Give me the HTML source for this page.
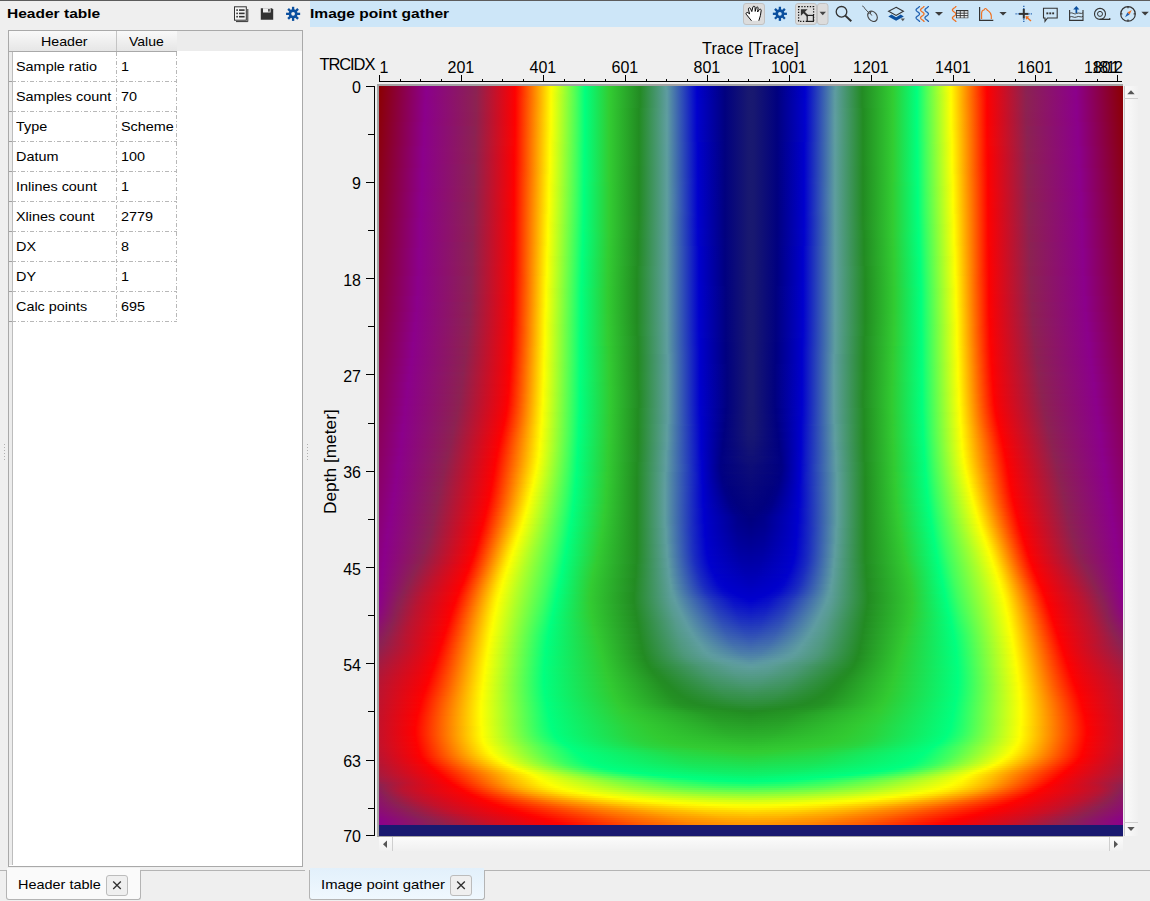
<!DOCTYPE html>
<html><head><meta charset="utf-8"><style>
html,body{margin:0;padding:0;width:1150px;height:901px;overflow:hidden;background:#efefef;font-family:"Liberation Sans", sans-serif}
.t{position:absolute;white-space:nowrap;line-height:1.15;color:#000}
.c{text-align:center}.r{text-align:right}
.half{position:absolute;top:0;width:372px;height:739px}
.half>div{position:absolute;left:0;width:372px}
.r0{top:0px;height:2px;background:linear-gradient(90deg,#8b0002 0px,#8b008b 47px,#8b2252 97px,#fe0001 136px,#ff1100 139px,#fffc00 172px,#edff09 175px,#43ff5d 198px,#00ff7f 206px,#32cd32 230px,#238b24 261px,#5e9e9e 287px,#548ba5 291px,#0000cd 318px,#01017f 346px,#181870 369px,#191970 372px)}
.r1{top:2px;height:2px;background:linear-gradient(90deg,#8b0002 0px,#8b008b 47px,#8b2252 97px,#fe0001 136px,#ff1100 139px,#fffc00 172px,#e5ff0d 176px,#43ff5d 198px,#00ff7f 206px,#32cd32 230px,#238b24 261px,#5e9e9e 287px,#548ba5 291px,#0000cd 318px,#01017f 346px,#181870 369px,#191970 372px)}
.r2{top:4px;height:2px;background:linear-gradient(90deg,#8b0002 0px,#8b008b 47px,#8b2252 97px,#fe0001 136px,#ff1800 140px,#fffc00 172px,#deff11 177px,#43ff5d 198px,#00ff7f 206px,#32cd32 230px,#238b24 261px,#5e9ca1 288px,#0000cd 318px,#01017f 346px,#181870 369px,#191970 372px)}
.r3{top:6px;height:2px;background:linear-gradient(90deg,#8b0003 0px,#8b008b 47px,#8b2252 97px,#fe0001 136px,#ff1f00 141px,#fffc00 172px,#b3ff26 183px,#33ff66 200px,#00ff7f 206px,#32cd32 230px,#238b24 261px,#5e9ca1 288px,#0000cd 318px,#01017f 346px,#181870 369px,#191970 372px)}
.r4{top:8px;height:2px;background:linear-gradient(90deg,#8b0003 0px,#8b008b 47px,#8c2252 97px,#fe0001 136px,#ff2d00 143px,#fffd00 172px,#5bff52 195px,#00ff7f 206px,#32cd32 230px,#238b24 261px,#5e9ca1 288px,#0000cd 318px,#01017f 346px,#181870 369px,#191970 372px)}
.r5{top:10px;height:2px;background:linear-gradient(90deg,#8b0004 0px,#8b008a 47px,#8c2251 97px,#fe0001 136px,#ff5000 148px,#fffd00 172px,#53ff56 196px,#00ff7f 206px,#32cd32 230px,#238b24 261px,#5e9ca1 288px,#0000cd 318px,#01017f 346px,#181870 369px,#191970 372px)}
.r6{top:12px;height:2px;background:linear-gradient(90deg,#8b0004 0px,#8b008a 47px,#8c2251 97px,#fe0001 136px,#ff8200 155px,#fffd00 172px,#53ff56 196px,#00ff7f 206px,#32cd32 230px,#238b24 261px,#5e9ca0 288px,#0001cd 318px,#01017f 346px,#181870 369px,#191970 372px)}
.r7{top:14px;height:2px;background:linear-gradient(90deg,#8b0005 0px,#8b008a 46px,#8c2251 97px,#fe0001 136px,#ff9100 157px,#fffd00 172px,#53ff56 196px,#00ff7f 206px,#32cd32 230px,#238b24 261px,#5e9da0 288px,#0001cd 318px,#01017f 346px,#181870 369px,#191970 372px)}
.r8{top:16px;height:2px;background:linear-gradient(90deg,#8b0006 0px,#8b008a 46px,#8c2251 97px,#fe0001 136px,#ff9f00 159px,#fffe00 172px,#4bff5a 197px,#00ff7f 206px,#32cd32 230px,#238b24 261px,#5e9da0 288px,#0001cd 318px,#01017f 346px,#181870 369px,#191970 372px)}
.r9{top:18px;height:2px;background:linear-gradient(90deg,#8b0006 0px,#8b008b 46px,#8c2251 97px,#fe0000 136px,#ffa700 160px,#fffe00 172px,#4bff5a 197px,#00ff7f 206px,#32cd32 230px,#238b24 261px,#5e9da0 288px,#0101cd 318px,#01017f 346px,#181870 369px,#191970 372px)}
.r10{top:20px;height:2px;background:linear-gradient(90deg,#8b0007 0px,#8b008b 46px,#8c2251 97px,#fe0000 136px,#ffb500 162px,#fffe00 172px,#4aff5a 197px,#00ff7f 206px,#32cd32 230px,#238b24 261px,#5e9da0 288px,#0101cd 318px,#01017f 346px,#181870 369px,#191970 372px)}
.r11{top:22px;height:2px;background:linear-gradient(90deg,#8b0007 0px,#8b008b 46px,#8c2251 97px,#fe0000 136px,#ffbd00 163px,#fffe00 172px,#4aff5a 197px,#00ff7f 206px,#32cd32 230px,#228c22 260px,#47976e 277px,#5e9da0 288px,#0101cd 318px,#01017f 346px,#181870 369px,#191970 372px)}
.r12{top:24px;height:2px;background:linear-gradient(90deg,#8b0008 0px,#8b008b 46px,#8d2251 97px,#ff0000 136px,#ffc400 164px,#ffff00 172px,#42ff5e 198px,#00ff7f 206px,#32cd32 230px,#228c22 260px,#47976e 277px,#5f9da0 288px,#0101cd 318px,#01017f 346px,#181870 369px,#191970 372px)}
.r13{top:26px;height:2px;background:linear-gradient(90deg,#8b0008 0px,#8b008b 46px,#8d2151 97px,#ff0000 136px,#ffcc00 165px,#ffff00 172px,#42ff5e 198px,#00ff7f 206px,#32cd32 230px,#228c22 260px,#499773 278px,#5f9da0 288px,#0101cd 318px,#01017f 346px,#181870 369px,#191970 372px)}
.r14{top:28px;height:2px;background:linear-gradient(90deg,#8b0009 0px,#8b008b 46px,#8d2151 97px,#ff0000 136px,#ffdb00 167px,#ffff00 172px,#42ff5e 198px,#00ff7f 206px,#32cd32 230px,#228c22 260px,#4b9878 279px,#5f9ea0 288px,#0101cd 318px,#01017f 346px,#181870 369px,#191970 372px)}
.r15{top:30px;height:2px;background:linear-gradient(90deg,#8b0009 0px,#8b008b 46px,#8d2151 97px,#ff0000 136px,#ffe200 168px,#feff00 172px,#42ff5e 198px,#00ff7f 206px,#32cd32 230px,#228c22 260px,#509981 281px,#5f9ea0 288px,#0101cd 318px,#01017f 346px,#181870 369px,#191970 372px)}
.r16{top:32px;height:2px;background:linear-gradient(90deg,#8b000a 0px,#8b008a 46px,#8d2150 97px,#ff0000 136px,#ffea00 169px,#feff00 172px,#42ff5e 198px,#00ff7f 206px,#32cd32 230px,#228c22 260px,#549b8a 283px,#5f9ea0 288px,#0101cd 318px,#01017f 346px,#181870 369px,#191970 372px)}
.r17{top:34px;height:2px;background:linear-gradient(90deg,#8b000a 0px,#8b008a 46px,#8d2150 97px,#ff0000 136px,#feff01 172px,#42ff5e 198px,#00ff7f 206px,#32cd32 230px,#228c22 260px,#5f9ea0 288px,#0102cd 318px,#01017f 346px,#181870 369px,#191970 372px)}
.r18{top:36px;height:2px;background:linear-gradient(90deg,#8b000b 0px,#8b008a 45px,#8d2150 97px,#ff0000 136px,#fdff01 172px,#41ff5e 198px,#00ff7f 206px,#32cd32 230px,#228c22 260px,#5f9ea0 288px,#0102cd 318px,#01017f 346px,#181870 369px,#191970 372px)}
.r19{top:38px;height:2px;background:linear-gradient(90deg,#8b000b 0px,#8b008a 45px,#8e2150 97px,#ff0000 136px,#fdff01 172px,#41ff5f 198px,#00ff7f 206px,#32cd32 230px,#228c22 260px,#5f9ea0 288px,#0102cc 318px,#01017f 346px,#181870 369px,#191970 372px)}
.r20{top:40px;height:2px;background:linear-gradient(90deg,#8b000c 0px,#8b008b 45px,#8b2252 96px,#ff0100 136px,#fdff01 172px,#41ff5f 198px,#00ff7f 206px,#32cd32 230px,#228c22 260px,#5f9ea0 288px,#0102cc 318px,#01017f 346px,#181870 369px,#191970 372px)}
.r21{top:42px;height:2px;background:linear-gradient(90deg,#8b000c 0px,#8b008b 45px,#8b2252 96px,#ff0100 136px,#fdff01 172px,#41ff5f 198px,#00ff7e 206px,#32cd32 230px,#228c22 260px,#5f9ea0 288px,#0102cc 318px,#01017f 346px,#181870 369px,#191970 372px)}
.r22{top:44px;height:2px;background:linear-gradient(90deg,#8b000d 0px,#8b008b 45px,#8b2252 96px,#ff0100 136px,#fffa00 171px,#f5ff05 173px,#41ff5f 198px,#00ff7e 206px,#32cd32 230px,#228c22 260px,#5f9ea0 288px,#0102cc 318px,#01017f 346px,#181870 369px,#191970 372px)}
.r23{top:46px;height:2px;background:linear-gradient(90deg,#8b000d 0px,#8b008b 45px,#8b2252 96px,#ff0100 136px,#fffb00 171px,#f5ff05 173px,#41ff5f 198px,#00ff7e 206px,#32cd32 230px,#228c22 260px,#5f9e9f 288px,#0102cc 318px,#01017f 346px,#181870 369px,#191970 372px)}
.r24{top:48px;height:2px;background:linear-gradient(90deg,#8b000e 0px,#8b008b 45px,#8c2252 96px,#ff0100 136px,#fffb00 171px,#f4ff05 173px,#40ff5f 198px,#00ff7e 206px,#32cd32 230px,#228c22 260px,#5f9e9f 288px,#0102cc 318px,#01017f 346px,#181870 369px,#191970 372px)}
.r25{top:50px;height:2px;background:linear-gradient(90deg,#8b000e 0px,#8b008b 45px,#8c2251 96px,#ff0100 136px,#fffb00 171px,#edff09 174px,#40ff5f 198px,#00ff7e 206px,#32cd32 230px,#228c22 260px,#5f9e9f 288px,#0102cc 318px,#01017f 346px,#181870 369px,#191970 372px)}
.r26{top:52px;height:2px;background:linear-gradient(90deg,#8b000f 0px,#8b008b 45px,#8c2251 96px,#ff0200 136px,#fffc00 171px,#e5ff0d 175px,#40ff5f 198px,#00ff7e 206px,#32cd32 230px,#228c22 260px,#5f9e9f 288px,#0102cc 318px,#01017f 346px,#181870 369px,#191970 372px)}
.r27{top:54px;height:2px;background:linear-gradient(90deg,#8b000f 0px,#8b008a 45px,#8c2251 96px,#ff0200 136px,#fffc00 171px,#d7ff14 177px,#40ff5f 198px,#01fe7e 206px,#32cd32 230px,#228c22 260px,#5f9e9f 288px,#0203cc 318px,#01017f 346px,#181870 369px,#191970 372px)}
.r28{top:56px;height:2px;background:linear-gradient(90deg,#8b000f 0px,#8b008a 45px,#8c2251 96px,#ff0200 136px,#fffc00 171px,#83ff3e 189px,#17ff74 203px,#01fe7e 206px,#32cd32 230px,#228c22 260px,#5f9e9f 288px,#0000cc 319px,#01017f 346px,#181870 369px,#191970 372px)}
.r29{top:58px;height:2px;background:linear-gradient(90deg,#8b0010 0px,#8b008a 45px,#8c2251 96px,#ff0200 136px,#fffd00 171px,#4fff58 196px,#06ff7c 205px,#01fe7e 206px,#32cd32 230px,#228c22 260px,#5e9e9f 288px,#0000cc 319px,#01017f 346px,#181870 369px,#191970 372px)}
.r30{top:60px;height:2px;background:linear-gradient(90deg,#8b0010 0px,#8b008a 44px,#8c2251 96px,#fd0101 135px,#ff0900 137px,#fffd00 171px,#4fff58 196px,#06ff7c 205px,#01fe7e 206px,#32cd32 230px,#228c22 260px,#5e9e9f 288px,#0000cc 319px,#01017f 346px,#181870 369px,#191970 372px)}
.r31{top:62px;height:2px;background:linear-gradient(90deg,#8b0011 0px,#8b008b 44px,#8d2251 96px,#fd0101 135px,#ff0900 137px,#fffd00 171px,#47ff5c 197px,#05ff7c 205px,#01fe7e 206px,#32cd32 230px,#228c22 260px,#5e9e9f 288px,#0000cc 319px,#01017f 346px,#181870 369px,#191970 372px)}
.r32{top:64px;height:2px;background:linear-gradient(90deg,#8b0011 0px,#8b008b 44px,#8d2251 96px,#fd0101 135px,#ff0a00 137px,#fffe00 171px,#46ff5c 197px,#05ff7c 205px,#01fe7e 206px,#32cd32 230px,#228c22 260px,#5e9e9f 288px,#0000cc 319px,#01017f 346px,#181870 369px,#191970 372px)}
.r33{top:66px;height:2px;background:linear-gradient(90deg,#8b0012 0px,#8b008b 44px,#8d2151 96px,#fd0101 135px,#ff0a00 137px,#fffe00 171px,#46ff5c 197px,#05ff7c 205px,#01fe7e 206px,#32cd32 230px,#228c22 260px,#5e9e9f 288px,#0000cc 319px,#01017f 346px,#181870 369px,#191970 372px)}
.r34{top:68px;height:2px;background:linear-gradient(90deg,#8b0012 0px,#8b008b 44px,#8d2151 96px,#fd0001 135px,#ff0a00 137px,#fffe00 171px,#3eff60 198px,#05ff7d 205px,#01fe7e 206px,#32cd32 230px,#228c22 260px,#5e9e9f 288px,#0000cc 319px,#01017f 346px,#181870 369px,#191970 372px)}
.r35{top:70px;height:2px;background:linear-gradient(90deg,#8b0013 0px,#8b008b 44px,#8d2151 96px,#fd0001 135px,#ff0a00 137px,#ffff00 171px,#3eff60 198px,#05ff7d 205px,#01fe7e 206px,#32cd32 230px,#228c22 260px,#5e9e9e 288px,#0000cc 319px,#01017f 346px,#181870 369px,#191970 372px)}
.r36{top:72px;height:2px;background:linear-gradient(90deg,#8b0013 0px,#8b008b 44px,#8d2150 96px,#fd0001 135px,#ff0a00 137px,#ffff00 171px,#3eff60 198px,#04ff7d 205px,#01fe7e 206px,#32cd32 230px,#228c22 260px,#5e9e9e 288px,#0000cc 319px,#01017f 346px,#181870 369px,#191970 372px)}
.r37{top:74px;height:2px;background:linear-gradient(90deg,#8b0014 0px,#8b008b 44px,#8d2150 96px,#fe0001 135px,#ff1100 138px,#ffff00 171px,#3eff60 198px,#04ff7d 205px,#01fe7e 206px,#32cd32 230px,#228c22 260px,#5e9e9e 288px,#0000cc 319px,#01017f 346px,#181870 369px,#191970 372px)}
.r38{top:76px;height:2px;background:linear-gradient(90deg,#8b0014 0px,#8b008b 44px,#8e2150 96px,#fe0001 135px,#ff1100 138px,#feff00 171px,#3dff60 198px,#04ff7d 205px,#03fc7b 207px,#32cd32 230px,#228c22 260px,#5e9e9e 288px,#0000cc 319px,#01017f 346px,#181870 369px,#191970 372px)}
.r39{top:78px;height:2px;background:linear-gradient(90deg,#8b0015 0px,#8b008a 44px,#8b2252 95px,#f80205 133px,#fe0001 135px,#ff1800 139px,#feff01 171px,#3dff61 198px,#04ff7d 205px,#03fc7b 207px,#32cd32 230px,#228c22 260px,#5e9e9e 288px,#0000cc 319px,#01017f 346px,#181870 369px,#191970 372px)}
.r40{top:80px;height:2px;background:linear-gradient(90deg,#8b0015 0px,#8b008a 44px,#8b2252 95px,#f80205 133px,#fe0001 135px,#ff2000 140px,#feff01 171px,#3dff61 198px,#04ff7d 205px,#03fc7b 207px,#32cd32 230px,#228b22 260px,#5e9e9e 288px,#0000cc 319px,#01017f 346px,#181870 369px,#191970 372px)}
.r41{top:82px;height:2px;background:linear-gradient(90deg,#8b0016 0px,#8b008a 43px,#8b2252 95px,#f80205 133px,#fe0001 135px,#ff2700 141px,#fdff01 171px,#3dff61 198px,#03ff7d 205px,#03fc7b 207px,#32cd32 230px,#228b22 260px,#5e9e9e 288px,#0000cc 319px,#01017f 346px,#181870 369px,#191970 372px)}
.r42{top:84px;height:2px;background:linear-gradient(90deg,#8b0016 0px,#8b008a 43px,#8c2252 95px,#f80205 133px,#fe0001 135px,#ff3c00 144px,#fdff01 171px,#3cff61 198px,#03ff7d 205px,#03fc7b 207px,#32cd32 230px,#228b22 260px,#5e9e9e 288px,#0000cc 319px,#01017f 346px,#181870 369px,#191970 372px)}
.r43{top:86px;height:2px;background:linear-gradient(90deg,#8b0017 0px,#8b008b 43px,#8c2252 95px,#f80205 133px,#fe0001 135px,#ff5900 148px,#fdff01 171px,#3cff61 198px,#03ff7e 205px,#05fa78 208px,#32cd32 230px,#228b22 260px,#5e9e9e 288px,#0000cc 319px,#01017f 346px,#181870 369px,#191970 372px)}
.r44{top:88px;height:2px;background:linear-gradient(90deg,#8b0017 0px,#8b008b 43px,#8c2251 95px,#f80205 133px,#fe0001 135px,#ff6700 150px,#fffa00 170px,#f5ff05 172px,#3cff61 198px,#03ff7e 205px,#05fa78 208px,#32cd32 230px,#228b22 260px,#5e9e9e 288px,#0000cc 319px,#01017f 346px,#181870 369px,#191970 372px)}
.r45{top:90px;height:2px;background:linear-gradient(90deg,#8b0018 0px,#8b008b 43px,#8c2251 95px,#f80205 133px,#fe0001 135px,#ff6f00 151px,#fffb00 170px,#f5ff05 172px,#3cff61 198px,#03ff7e 205px,#07f875 209px,#32cd32 230px,#228b22 260px,#5e9e9e 288px,#0000cc 319px,#01017f 346px,#181870 369px,#191970 372px)}
.r46{top:92px;height:2px;background:linear-gradient(90deg,#8b0018 0px,#8b008b 43px,#8c2251 95px,#f80205 133px,#fe0001 135px,#ff7700 152px,#fffb00 170px,#f4ff05 172px,#3bff61 198px,#02ff7e 205px,#0bf46f 211px,#32cd32 230px,#228b22 260px,#5e9e9e 288px,#0d15c7 315px,#0000cc 319px,#01017f 346px,#181870 369px,#191970 372px)}
.r47{top:94px;height:2px;background:linear-gradient(90deg,#8b0018 0px,#8b008b 43px,#8c2251 95px,#f80205 133px,#fe0000 135px,#ff7e00 153px,#fffc00 170px,#edff09 173px,#3bff62 198px,#02ff7e 205px,#13ec62 215px,#32cd32 230px,#228b22 260px,#5e9e9e 288px,#192ac1 311px,#0000cd 319px,#01017f 346px,#181870 369px,#191970 372px)}
.r48{top:96px;height:2px;background:linear-gradient(90deg,#8b0019 0px,#8b008b 43px,#8c2251 95px,#f80205 133px,#fe0000 135px,#ff8600 154px,#fffc00 170px,#deff10 175px,#3bff62 198px,#02ff7e 205px,#1ee151 220px,#31cb31 231px,#228b22 260px,#5e9e9e 288px,#263fbb 307px,#0000cd 319px,#01017f 346px,#181870 369px,#191970 372px)}
.r49{top:98px;height:2px;background:linear-gradient(90deg,#8b0019 0px,#8b008b 43px,#8c2251 95px,#f80205 133px,#fe0000 135px,#ff8d00 155px,#fffc00 170px,#bbff22 180px,#33ff66 199px,#02ff7e 205px,#26d944 224px,#31cb31 231px,#228b22 260px,#5e9e9e 288px,#385db2 301px,#0000cd 319px,#01017f 346px,#181870 369px,#191970 372px)}
.r50{top:100px;height:2px;background:linear-gradient(90deg,#8b001a 0px,#8b008b 43px,#8d2251 95px,#f80205 133px,#ff0000 135px,#ff8e00 155px,#fffd00 170px,#4aff5a 196px,#01ff7e 205px,#31cb31 231px,#228b22 260px,#5e9e9e 288px,#3e67b0 299px,#0000cd 319px,#01017f 346px,#181870 369px,#191970 372px)}
.r51{top:102px;height:2px;background:linear-gradient(90deg,#8b001a 0px,#8b008a 43px,#8d2151 95px,#f90205 133px,#ff0000 135px,#ff9500 156px,#fffd00 170px,#42ff5e 197px,#01ff7e 205px,#31cb31 231px,#228b22 260px,#5e9e9e 288px,#4472ad 297px,#0000cd 319px,#01017f 346px,#181870 369px,#191970 372px)}
.r52{top:104px;height:2px;background:linear-gradient(90deg,#8b001b 0px,#8b008a 43px,#8d2151 95px,#f90205 133px,#ff0000 135px,#ff9d00 157px,#fffd00 170px,#42ff5e 197px,#01ff7f 205px,#32cd32 230px,#228b22 260px,#5e9e9e 288px,#4777ab 296px,#0000cd 319px,#01017f 346px,#181870 369px,#191970 372px)}
.r53{top:106px;height:2px;background:linear-gradient(90deg,#8b001b 0px,#8b008a 42px,#8d2151 95px,#f90204 133px,#ff0000 135px,#ffa500 158px,#fffe00 170px,#41ff5e 197px,#01ff7f 205px,#32cd32 230px,#228b22 260px,#5e9e9e 288px,#4777ab 296px,#0000cd 319px,#01017f 346px,#181870 369px,#191970 372px)}
.r54{top:108px;height:2px;background:linear-gradient(90deg,#8b001c 0px,#8b008a 42px,#8d2150 95px,#f90204 133px,#ff0000 135px,#ffad00 159px,#fffe00 170px,#39ff62 198px,#00ff7f 205px,#32cd32 230px,#228b22 260px,#5e9e9e 288px,#4b7caa 295px,#0000cd 319px,#01017f 346px,#181870 369px,#191970 372px)}
.r55{top:110px;height:2px;background:linear-gradient(90deg,#8b001c 0px,#8b008b 42px,#8d2150 95px,#f90204 133px,#ff0000 135px,#ffad00 159px,#fffe00 170px,#39ff63 198px,#00ff7f 205px,#32cd32 230px,#228b22 260px,#5e9e9e 288px,#4b7caa 295px,#0000cd 319px,#01017f 346px,#181870 369px,#191970 372px)}
.r56{top:112px;height:2px;background:linear-gradient(90deg,#8b001d 0px,#8b008b 42px,#8d2150 95px,#f90204 133px,#ff0000 135px,#ffb500 160px,#ffff00 170px,#39ff63 198px,#00ff7f 205px,#32cd32 230px,#228b22 260px,#5e9e9e 288px,#4b7caa 295px,#0000cd 319px,#01017f 346px,#181870 369px,#191970 372px)}
.r57{top:114px;height:2px;background:linear-gradient(90deg,#8b001d 0px,#8b008b 42px,#8e2150 95px,#f90204 133px,#ff0000 135px,#ffbd00 161px,#ffff00 170px,#39ff63 198px,#00ff7f 205px,#32cd32 230px,#228b22 260px,#5e9e9e 288px,#4b7caa 295px,#0000cd 319px,#01017f 346px,#181870 369px,#191970 372px)}
.r58{top:116px;height:2px;background:linear-gradient(90deg,#8b001d 0px,#8b008b 42px,#8b2252 94px,#f30409 131px,#ff0000 135px,#ffb600 160px,#feff00 170px,#38ff63 198px,#00ff7f 205px,#32cd32 230px,#228b22 260px,#5e9e9e 288px,#4877ab 296px,#0000cd 319px,#01017f 346px,#181870 369px,#191970 372px)}
.r59{top:118px;height:2px;background:linear-gradient(90deg,#8b001e 0px,#8b008b 42px,#8b2252 94px,#f30408 131px,#ff0000 135px,#ffb600 160px,#feff00 170px,#38ff63 198px,#00ff7f 205px,#32cd32 230px,#228b22 260px,#5e9e9e 288px,#4877ab 296px,#0000cd 319px,#01017f 346px,#181870 369px,#191970 372px)}
.r60{top:120px;height:2px;background:linear-gradient(90deg,#8b001e 0px,#8b008b 42px,#8b2252 94px,#f30408 131px,#ff0100 135px,#ffb600 160px,#feff01 170px,#38ff63 198px,#00ff7f 205px,#32cd32 230px,#228b22 260px,#5e9e9e 288px,#4572ad 297px,#0000cd 319px,#01017f 346px,#181870 369px,#191970 372px)}
.r61{top:122px;height:2px;background:linear-gradient(90deg,#8b001f 0px,#8b008b 42px,#8c2252 94px,#f30308 131px,#ff0100 135px,#ffb700 160px,#fdff01 170px,#37ff63 198px,#00ff7f 205px,#32cd32 230px,#228b22 260px,#5e9e9e 288px,#3f68af 299px,#0000cd 319px,#01017f 346px,#181870 369px,#191970 372px)}
.r62{top:124px;height:2px;background:linear-gradient(90deg,#8b001f 0px,#8b008b 42px,#8c2251 94px,#f30308 131px,#ff0100 135px,#ffaf00 159px,#fdff01 170px,#37ff64 198px,#00ff7e 205px,#32cd32 230px,#228b23 260px,#5e9e9e 288px,#2f4fb7 304px,#0001cd 319px,#01017f 346px,#181870 369px,#191970 372px)}
.r63{top:126px;height:2px;background:linear-gradient(90deg,#8b0020 0px,#8b008a 42px,#8c2251 94px,#f30308 131px,#ff0100 135px,#ffb000 159px,#fdff01 170px,#37ff64 198px,#00ff7e 205px,#32cd32 230px,#228b23 260px,#5e9e9e 288px,#1d31bf 310px,#0001cd 319px,#01017f 346px,#181870 369px,#191970 372px)}
.r64{top:128px;height:2px;background:linear-gradient(90deg,#8b0020 0px,#8b008a 42px,#8c2251 94px,#f30308 131px,#ff0100 135px,#ffb000 159px,#fffb00 169px,#f5ff05 171px,#36ff64 198px,#01fe7e 205px,#32cd32 230px,#228b23 260px,#5e9e9e 288px,#111cc5 314px,#0001cd 319px,#01017f 346px,#181870 369px,#191970 372px)}
.r65{top:130px;height:2px;background:linear-gradient(90deg,#8b0020 0px,#8b008a 42px,#8c2251 94px,#f30308 131px,#ff0100 135px,#ffa900 158px,#fffb00 169px,#f4ff05 171px,#36ff64 198px,#05ff7c 204px,#01fe7e 205px,#32cd32 230px,#238b23 260px,#5e9e9e 288px,#070cca 317px,#0101cd 319px,#01017f 346px,#181870 369px,#191970 372px)}
.r66{top:132px;height:2px;background:linear-gradient(90deg,#8b0021 0px,#8b008a 41px,#8c2251 94px,#f30308 131px,#ff0100 135px,#ffa900 158px,#fffb00 169px,#edff09 172px,#35ff64 198px,#05ff7d 204px,#01fe7e 205px,#32cd32 230px,#238b23 260px,#5e9e9e 288px,#0101cd 319px,#01017f 346px,#181870 369px,#191970 372px)}
.r67{top:134px;height:2px;background:linear-gradient(90deg,#8b0021 0px,#8b008a 41px,#8c2251 94px,#f30308 131px,#ff0100 135px,#ffa900 158px,#fffc00 169px,#e5ff0d 173px,#35ff65 198px,#04ff7d 204px,#01fe7e 205px,#32cc32 230px,#238b23 260px,#5e9e9e 288px,#0101cd 319px,#01017f 346px,#181870 369px,#191970 372px)}
.r68{top:136px;height:2px;background:linear-gradient(90deg,#8b0022 0px,#8b008b 41px,#8c2251 94px,#f40308 131px,#ff0200 135px,#ffaa00 158px,#fffc00 169px,#bbff22 179px,#2dff69 199px,#04ff7d 204px,#03fc7b 206px,#32cc32 230px,#238b24 260px,#5e9e9e 288px,#0101cd 319px,#01017f 346px,#181870 369px,#191970 372px)}
.r69{top:138px;height:2px;background:linear-gradient(90deg,#8b0022 0px,#8b008b 41px,#8d2251 94px,#f40308 131px,#ff0200 135px,#ffaa00 158px,#fffd00 169px,#3bff61 197px,#03ff7d 204px,#03fc7b 206px,#32cc32 230px,#238b24 260px,#5e9e9e 288px,#0101cd 319px,#01017f 346px,#181870 369px,#191970 372px)}
.r70{top:140px;height:2px;background:linear-gradient(90deg,#8b0022 0px,#8b008b 41px,#8d2151 94px,#f40308 131px,#ff0200 135px,#ffa300 157px,#fffd00 169px,#3bff62 197px,#03ff7e 204px,#05fa78 207px,#32cc32 230px,#238b24 260px,#5e9e9e 288px,#0101cd 319px,#01017f 346px,#181870 369px,#191970 372px)}
.r71{top:142px;height:2px;background:linear-gradient(90deg,#8b0023 0px,#8b008b 41px,#8d2151 94px,#f40308 131px,#ff0200 135px,#ffa300 157px,#fffe00 169px,#3aff62 197px,#02ff7e 204px,#0cf36c 211px,#32cc32 230px,#238b24 260px,#5e9e9e 288px,#0102cd 319px,#01017f 346px,#181870 369px,#191970 372px)}
.r72{top:144px;height:2px;background:linear-gradient(90deg,#8b0023 0px,#8b008b 41px,#8d2151 94px,#f40308 131px,#ff0200 135px,#ffa400 157px,#fffe00 169px,#3aff62 197px,#02ff7e 204px,#27d842 224px,#32cc32 230px,#228c22 259px,#5e9e9e 288px,#0102cd 319px,#01017f 346px,#181870 369px,#191970 372px)}
.r73{top:146px;height:2px;background:linear-gradient(90deg,#8b0024 0px,#8b008b 41px,#8d2151 94px,#f40308 131px,#ff0200 135px,#ffa400 157px,#fffe00 169px,#32ff66 198px,#01ff7e 204px,#32cc32 230px,#228c22 259px,#5e9e9e 288px,#0102cd 319px,#01017f 346px,#181870 369px,#191970 372px)}
.r74{top:148px;height:2px;background:linear-gradient(90deg,#8b0024 0px,#8b008b 41px,#8d2150 94px,#f40308 131px,#ff0200 135px,#ff9d00 156px,#ffff00 169px,#31ff67 198px,#00ff7f 204px,#32cc32 230px,#228c22 259px,#5e9e9e 288px,#0102cc 319px,#01017f 346px,#181870 369px,#191970 372px)}
.r75{top:150px;height:2px;background:linear-gradient(90deg,#8b0024 0px,#8b008b 41px,#8d2150 94px,#f40308 131px,#ff0200 135px,#ff9d00 156px,#ffff00 169px,#31ff67 198px,#00ff7f 204px,#32cc32 230px,#228c22 259px,#5e9e9f 288px,#0102cc 319px,#01017f 346px,#181870 369px,#191970 372px)}
.r76{top:152px;height:2px;background:linear-gradient(90deg,#8b0025 0px,#8b008b 41px,#8d2150 94px,#f40308 131px,#ff0200 135px,#ff9d00 156px,#feff00 169px,#30ff67 198px,#00ff7f 204px,#32cb32 230px,#228b22 259px,#5e9e9f 288px,#0102cc 319px,#010180 346px,#181870 369px,#191970 372px)}
.r77{top:154px;height:2px;background:linear-gradient(90deg,#8b0025 0px,#8b008a 41px,#8e2150 94px,#f40308 131px,#ff0200 135px,#ff9e00 156px,#feff01 169px,#2fff67 198px,#00ff7f 204px,#32cb32 230px,#228b22 259px,#5e9e9f 288px,#0102cc 319px,#010180 346px,#181870 369px,#191970 372px)}
.r78{top:156px;height:2px;background:linear-gradient(90deg,#8b0025 0px,#8b008a 41px,#8b2252 93px,#f1040a 130px,#ff0300 135px,#ff9600 155px,#fdff01 169px,#2fff68 198px,#00ff7e 204px,#32cb32 230px,#228b22 259px,#5e9e9f 288px,#0102cc 319px,#010180 346px,#181870 369px,#191970 372px)}
.r79{top:158px;height:2px;background:linear-gradient(90deg,#8b0026 0px,#8b008a 41px,#8b2252 93px,#f1040a 130px,#ff0300 135px,#ff9700 155px,#fdff01 169px,#2eff68 198px,#01fe7e 204px,#32cb32 230px,#228b22 259px,#5e9e9f 288px,#0102cc 319px,#010180 346px,#181870 369px,#191970 372px)}
.r80{top:160px;height:2px;background:linear-gradient(90deg,#8b0026 0px,#8b008a 41px,#8b2252 93px,#f1040a 130px,#fd0101 134px,#ff0a00 136px,#ffae00 158px,#fffa00 168px,#f5ff05 170px,#2eff68 198px,#05ff7c 203px,#01fe7e 204px,#31cb31 230px,#228b22 259px,#5e9e9f 288px,#0000cc 320px,#010180 346px,#181870 369px,#191970 372px)}
.r81{top:162px;height:2px;background:linear-gradient(90deg,#8b0027 0px,#8b008a 40px,#8c2252 93px,#f1040a 130px,#fd0101 134px,#ff0a00 136px,#ffae00 158px,#fffb00 168px,#f5ff05 170px,#35ff65 197px,#05ff7d 203px,#01fe7e 204px,#31cb31 230px,#228b22 259px,#5e9e9f 288px,#0000cc 320px,#010180 346px,#181870 369px,#191970 372px)}
.r82{top:164px;height:2px;background:linear-gradient(90deg,#8b0027 0px,#8b008b 40px,#8c2251 93px,#f1040a 130px,#fd0001 134px,#ff0a00 136px,#ffaf00 158px,#fffb00 168px,#f4ff05 170px,#34ff65 197px,#04ff7d 203px,#03fc7b 205px,#32cd32 229px,#228b23 259px,#5f9e9f 288px,#0000cc 320px,#010180 346px,#181870 369px,#191970 372px)}
.r83{top:166px;height:2px;background:linear-gradient(90deg,#8b0027 0px,#8b008b 40px,#8c2251 93px,#f1040a 130px,#fd0001 134px,#ff0a00 136px,#ffa700 157px,#fffc00 168px,#ecff09 171px,#34ff65 197px,#03ff7d 203px,#03fc7b 205px,#32cd32 229px,#228b23 259px,#5f9e9f 288px,#0000cc 320px,#010180 346px,#181870 369px,#191970 372px)}
.r84{top:168px;height:2px;background:linear-gradient(90deg,#8b0028 0px,#8b008b 40px,#8c2251 93px,#f1040a 130px,#fd0001 134px,#ff0a00 136px,#ffa800 157px,#fffc00 168px,#deff11 173px,#33ff66 197px,#03ff7e 203px,#07f875 207px,#32cd32 229px,#228b23 259px,#5f9e9f 288px,#0000cc 320px,#010180 346px,#181870 369px,#191970 372px)}
.r85{top:170px;height:2px;background:linear-gradient(90deg,#8b0028 0px,#8b008b 40px,#8c2251 93px,#f1040a 130px,#fd0001 134px,#ff0a00 136px,#ffa800 157px,#fffc00 168px,#3aff62 196px,#02ff7e 203px,#19e659 216px,#32cd32 229px,#238b23 259px,#5f9e9f 288px,#0000cc 320px,#010180 346px,#181870 369px,#191970 372px)}
.r86{top:172px;height:2px;background:linear-gradient(90deg,#8b0029 0px,#8b008b 40px,#8c2251 93px,#f1040a 130px,#fe0001 134px,#ff0a00 136px,#ffa900 157px,#fffd00 168px,#3aff62 196px,#01ff7e 203px,#32cc32 229px,#238b23 259px,#5f9e9f 288px,#0000cc 320px,#010180 346px,#181870 369px,#191970 372px)}
.r87{top:174px;height:2px;background:linear-gradient(90deg,#8b0029 0px,#8b008b 40px,#8c2251 93px,#f1040a 130px,#fe0001 134px,#ff1100 137px,#ffd000 162px,#fffd00 168px,#31ff66 197px,#01ff7f 203px,#32cc32 229px,#238b24 259px,#5f9e9f 288px,#0000cc 320px,#000080 346px,#181870 369px,#191970 372px)}
.r88{top:176px;height:2px;background:linear-gradient(90deg,#8b0029 0px,#8b008b 40px,#8d2251 93px,#f1040a 130px,#fe0001 134px,#ff1200 137px,#ffc800 161px,#fffe00 168px,#31ff67 197px,#00ff7f 203px,#32cc32 229px,#238b24 259px,#5f9e9f 288px,#0000cc 320px,#000080 346px,#181870 369px,#191970 372px)}
.r89{top:178px;height:2px;background:linear-gradient(90deg,#8b002a 0px,#8b008b 40px,#8d2251 93px,#f2040a 130px,#fe0001 134px,#ff1200 137px,#ffc900 161px,#fffe00 168px,#30ff67 197px,#00ff7f 203px,#32cc32 229px,#238b24 259px,#5f9e9f 288px,#0000cc 320px,#000080 346px,#181870 369px,#191970 372px)}
.r90{top:180px;height:2px;background:linear-gradient(90deg,#8b002a 0px,#8b008b 40px,#8d2151 93px,#f20409 130px,#fe0001 134px,#ff1200 137px,#ffc200 160px,#ffff00 168px,#30ff67 197px,#00ff7f 203px,#32cc32 229px,#228c22 258px,#5f9e9f 288px,#0000cc 320px,#000080 346px,#181870 369px,#191970 372px)}
.r91{top:182px;height:2px;background:linear-gradient(90deg,#8b002b 0px,#8b008a 40px,#8d2151 93px,#f20409 130px,#fe0001 134px,#ff1900 138px,#ffff00 168px,#2fff68 197px,#00ff7e 203px,#32cc32 229px,#228c22 258px,#5f9ea0 288px,#0000cc 320px,#000080 346px,#181870 369px,#191970 372px)}
.r92{top:184px;height:2px;background:linear-gradient(90deg,#8b002b 0px,#8b008a 40px,#8d2150 93px,#f20409 130px,#fe0001 134px,#ff2000 139px,#feff00 168px,#2fff68 197px,#00ff7e 203px,#32cc32 229px,#228c22 258px,#5f9ea0 288px,#0000cc 320px,#000080 346px,#181870 369px,#191970 372px)}
.r93{top:186px;height:2px;background:linear-gradient(90deg,#8b002b 0px,#8b008a 40px,#8d2150 93px,#f20409 130px,#fe0001 134px,#ff2800 140px,#feff01 168px,#2eff68 197px,#01fe7e 203px,#32cb32 229px,#228c22 258px,#5f9ea0 288px,#0000cc 320px,#000080 346px,#181870 369px,#191970 372px)}
.r94{top:188px;height:2px;background:linear-gradient(90deg,#8b002c 0px,#8b008a 40px,#8d2150 93px,#f20409 130px,#fe0001 134px,#ff2f00 141px,#fdff01 168px,#2eff68 197px,#05ff7c 202px,#01fe7e 203px,#32cb32 229px,#228c22 258px,#5f9ea0 288px,#0000cc 320px,#000080 346px,#181870 369px,#191970 372px)}
.r95{top:190px;height:2px;background:linear-gradient(90deg,#8b002c 0px,#8b008b 39px,#8b2252 92px,#ef050b 129px,#fe0001 134px,#ff3e00 143px,#fffa00 167px,#fdff01 168px,#2dff69 197px,#05ff7d 202px,#01fe7e 203px,#32cb32 229px,#228c22 258px,#5f9ea0 288px,#0000cc 320px,#000080 346px,#181870 369px,#191970 372px)}
.r96{top:192px;height:2px;background:linear-gradient(90deg,#8b002d 0px,#8b008b 39px,#8b2252 92px,#ef050b 129px,#fe0001 134px,#ff4600 144px,#fffa00 167px,#f5ff05 169px,#2dff69 197px,#04ff7d 202px,#03fc7b 204px,#32cb32 229px,#228b22 258px,#5f9ea0 288px,#0000cc 320px,#000080 346px,#181870 369px,#191970 372px)}
.r97{top:194px;height:2px;background:linear-gradient(90deg,#8b002d 0px,#8b008b 39px,#8c2252 92px,#ef050b 129px,#fe0001 134px,#ff4700 144px,#fffb00 167px,#f5ff05 169px,#2cff69 197px,#04ff7d 202px,#03fc7b 204px,#32cb32 229px,#228b22 258px,#5f9ea0 288px,#0000cc 320px,#000080 346px,#181870 369px,#191970 372px)}
.r98{top:196px;height:2px;background:linear-gradient(90deg,#8b002e 0px,#8b008b 39px,#8c2252 92px,#ef050b 129px,#fe0001 134px,#ff4e00 145px,#fffb00 167px,#f4ff05 169px,#2cff69 197px,#03ff7d 202px,#03fc7b 204px,#32cb32 229px,#228b22 258px,#5f9ea0 288px,#0000cd 320px,#000080 346px,#181870 369px,#191970 372px)}
.r99{top:198px;height:2px;background:linear-gradient(90deg,#8b002e 0px,#8b008b 39px,#8c2251 92px,#ef050b 129px,#fe0000 134px,#ff4f00 145px,#fffc00 167px,#ecff09 170px,#2bff6a 197px,#03ff7e 202px,#06f975 206px,#32cb32 229px,#228b22 258px,#5f9ea0 288px,#0000cd 320px,#000080 346px,#181870 369px,#191970 372px)}
.r100{top:200px;height:2px;background:linear-gradient(90deg,#8b002e 0px,#8b008b 39px,#8c2251 92px,#ef050b 129px,#fe0000 134px,#ff5700 146px,#fffc00 167px,#ddff11 172px,#2bff6a 197px,#02ff7e 202px,#10ef66 211px,#31cb31 229px,#228b22 258px,#5f9ea0 288px,#0000cd 320px,#01017f 347px,#181870 369px,#191970 372px)}
.r101{top:202px;height:2px;background:linear-gradient(90deg,#8b002f 0px,#8b008b 39px,#8c2251 92px,#ef050b 129px,#ff0000 134px,#ff5f00 147px,#fffc00 167px,#32ff66 196px,#02ff7e 202px,#28d741 223px,#31cb31 229px,#228b22 258px,#5f9ea0 288px,#0000cd 320px,#01017f 347px,#181870 369px,#191970 372px)}
.r102{top:204px;height:2px;background:linear-gradient(90deg,#8b002f 0px,#8b008a 39px,#8c2251 92px,#ef050b 129px,#ff0000 134px,#ff5f00 147px,#fffd00 167px,#32ff66 196px,#01ff7e 202px,#31cb31 229px,#228b22 258px,#5f9ea0 288px,#0000cd 320px,#01017f 347px,#181870 369px,#191970 372px)}
.r103{top:206px;height:2px;background:linear-gradient(90deg,#8b0030 0px,#8b008a 39px,#8d2251 92px,#f0050b 129px,#ff0000 134px,#ff6700 148px,#fffd00 167px,#31ff66 196px,#01ff7f 202px,#31cb31 229px,#228b22 258px,#5f9ea0 288px,#0000cd 320px,#01017f 347px,#181870 369px,#191970 372px)}
.r104{top:208px;height:2px;background:linear-gradient(90deg,#8b0030 0px,#8b008a 39px,#8d2151 92px,#f0040b 129px,#ff0000 134px,#ff6800 148px,#fffe00 167px,#31ff67 196px,#01ff7f 202px,#31cb31 229px,#228b22 258px,#5f9ea0 288px,#0000cd 320px,#01017f 347px,#181870 369px,#191970 372px)}
.r105{top:210px;height:2px;background:linear-gradient(90deg,#8b0031 0px,#8b008b 38px,#8d2151 92px,#f0040b 129px,#ff0000 134px,#ff7000 149px,#fffe00 167px,#29ff6b 197px,#00ff7f 202px,#31cb31 229px,#228b22 258px,#5f9ea0 288px,#0000cd 320px,#01017f 347px,#181870 369px,#191970 372px)}
.r106{top:212px;height:2px;background:linear-gradient(90deg,#8b0031 0px,#8b008b 38px,#8d2150 92px,#f0040b 129px,#ff0000 134px,#ff7000 149px,#ffff00 167px,#29ff6b 197px,#00ff7f 202px,#31cb31 229px,#228b22 258px,#5f9ea0 288px,#0000cd 320px,#01017f 347px,#181870 369px,#191970 372px)}
.r107{top:214px;height:2px;background:linear-gradient(90deg,#8b0032 0px,#8b008b 38px,#8e2150 92px,#f0040b 129px,#ff0000 134px,#ff7100 149px,#ffff00 167px,#28ff6b 197px,#00ff7f 202px,#31cb31 229px,#228b22 258px,#5f9ea0 288px,#0000cd 320px,#01017f 347px,#181870 369px,#191970 372px)}
.r108{top:216px;height:2px;background:linear-gradient(90deg,#8b0032 0px,#8b008b 38px,#8b2252 91px,#ed050d 128px,#ff0000 134px,#ff7100 149px,#feff00 167px,#28ff6b 197px,#00ff7f 202px,#31cb31 229px,#228b22 258px,#5f9ea0 288px,#0000cd 320px,#01017f 347px,#181870 369px,#191970 372px)}
.r109{top:218px;height:2px;background:linear-gradient(90deg,#8b0033 0px,#8b008b 38px,#8c2252 91px,#ed050d 128px,#ff0100 134px,#ff7100 149px,#feff01 167px,#28ff6b 197px,#00ff7f 202px,#31cb31 229px,#228b22 258px,#5f9ea0 288px,#0000cd 320px,#01017f 347px,#181870 369px,#191970 372px)}
.r110{top:220px;height:2px;background:linear-gradient(90deg,#8b0033 0px,#8b008b 38px,#8c2251 91px,#ed050c 128px,#ff0100 134px,#ff7200 149px,#feff01 167px,#28ff6b 197px,#00ff7f 202px,#31cb31 229px,#228b22 258px,#5f9ea0 288px,#0000cd 320px,#01017f 347px,#181870 369px,#191970 372px)}
.r111{top:222px;height:2px;background:linear-gradient(90deg,#8b0034 0px,#8b008a 38px,#8c2251 91px,#ee050c 128px,#ff0100 134px,#ff7200 149px,#fff900 166px,#fdff01 167px,#27ff6b 197px,#00ff7f 202px,#31cb31 229px,#228b22 258px,#5f9ea0 288px,#0000cd 320px,#01017f 347px,#181870 369px,#191970 372px)}
.r112{top:224px;height:2px;background:linear-gradient(90deg,#8b0034 0px,#8b008a 38px,#8d2251 91px,#ee050c 128px,#ff0200 134px,#ff7200 149px,#fffa00 166px,#fdff01 167px,#27ff6c 197px,#00ff7f 202px,#31cb31 229px,#228b22 258px,#5f9ea0 288px,#0001cd 320px,#01017f 347px,#181870 369px,#191970 372px)}
.r113{top:226px;height:2px;background:linear-gradient(90deg,#8b0035 0px,#8b008b 37px,#8d2151 91px,#ee050c 128px,#ff0200 134px,#ff7300 149px,#fffa00 166px,#f5ff05 168px,#27ff6c 197px,#00ff7f 202px,#31cb31 229px,#228b22 258px,#5f9ea0 288px,#0001cd 320px,#01017f 347px,#181870 369px,#191970 372px)}
.r114{top:228px;height:2px;background:linear-gradient(90deg,#8b0035 0px,#8b008b 37px,#8d2150 91px,#ee050c 128px,#ff0200 134px,#ff7300 149px,#fffb00 166px,#f4ff05 168px,#27ff6c 197px,#00ff7e 202px,#32cb32 229px,#228b22 258px,#5f9ea0 288px,#0001cd 320px,#01017f 347px,#181870 369px,#191970 372px)}
.r115{top:230px;height:2px;background:linear-gradient(90deg,#8b0036 0px,#8b008b 37px,#8e2150 91px,#ee050c 128px,#ff0300 134px,#ff7400 149px,#fffb00 166px,#f4ff05 168px,#26ff6c 197px,#00ff7e 202px,#32cb32 229px,#228b22 258px,#5f9ea0 288px,#0001cd 320px,#01017f 347px,#181870 369px,#191970 372px)}
.r116{top:232px;height:2px;background:linear-gradient(90deg,#8b0037 0px,#8b008b 37px,#8c2252 90px,#ee050c 128px,#fd0001 133px,#ff0a00 135px,#ff8400 151px,#fffb00 166px,#ecff09 169px,#26ff6c 197px,#00ff7e 202px,#32cb32 229px,#228b22 258px,#5f9ea0 288px,#0101cd 320px,#01017f 347px,#181870 369px,#191970 372px)}
.r117{top:234px;height:2px;background:linear-gradient(90deg,#8b0037 0px,#8b008a 37px,#8c2251 90px,#ef050c 128px,#fd0001 133px,#ff0a00 135px,#ff8500 151px,#fffc00 166px,#e5ff0d 170px,#26ff6c 197px,#00ff7e 202px,#32cb32 229px,#228b22 258px,#5f9ea0 288px,#0101cd 320px,#010180 347px,#181870 369px,#191970 372px)}
.r118{top:236px;height:2px;background:linear-gradient(90deg,#8b0038 0px,#8b008b 36px,#8c2251 90px,#ef050b 128px,#fe0001 133px,#ff1200 136px,#ff9500 153px,#fffc00 166px,#c1ff1f 175px,#26ff6c 197px,#00ff7e 202px,#32cb32 229px,#228b22 258px,#5f9e9f 288px,#0101cd 320px,#010180 347px,#181870 369px,#191970 372px)}
.r119{top:238px;height:2px;background:linear-gradient(90deg,#8b0038 0px,#8b008b 36px,#8d2251 90px,#ef050b 128px,#fe0001 133px,#ff1900 137px,#ffbe00 158px,#fffd00 166px,#2dff68 196px,#00ff7e 202px,#32cb32 229px,#228c22 258px,#5f9e9f 288px,#0101cd 320px,#010180 347px,#181870 369px,#191970 372px)}
.r120{top:240px;height:2px;background:linear-gradient(90deg,#8b0039 0px,#8b008b 36px,#8d2150 90px,#ef050b 128px,#fe0001 133px,#ff3700 141px,#fffd00 166px,#2dff69 196px,#01fe7e 202px,#32cc32 229px,#228c22 258px,#5f9e9f 288px,#0101cd 320px,#010180 347px,#181870 369px,#191970 372px)}
.r121{top:242px;height:2px;background:linear-gradient(90deg,#8b0039 0px,#8b008b 36px,#8e2150 90px,#f0050b 128px,#fe0001 133px,#ff4700 143px,#fffd00 166px,#2dff69 196px,#01fe7e 202px,#32cc32 229px,#228c22 258px,#5f9e9f 288px,#0101cd 320px,#010180 347px,#181870 369px,#191970 372px)}
.r122{top:244px;height:2px;background:linear-gradient(90deg,#8b003a 0px,#8b008a 36px,#8c2252 89px,#ed050d 127px,#ff0000 133px,#ff4f00 144px,#fffe00 166px,#25ff6d 197px,#01fe7e 202px,#32cc32 229px,#228c22 258px,#5f9e9f 288px,#0101cd 320px,#010180 347px,#181870 369px,#191970 372px)}
.r123{top:246px;height:2px;background:linear-gradient(90deg,#8b003b 0px,#8b008b 35px,#8c2251 89px,#ed050d 127px,#ff0000 133px,#ff5700 145px,#fffe00 166px,#25ff6d 197px,#05ff7c 201px,#01fe7e 202px,#32cc32 229px,#228c22 258px,#5e9e9f 288px,#0102cd 320px,#010180 347px,#181870 369px,#191970 372px)}
.r124{top:248px;height:2px;background:linear-gradient(90deg,#8b003b 0px,#8b008b 35px,#8d2251 89px,#ed050c 127px,#ff0000 133px,#ff6800 147px,#fffe00 166px,#25ff6d 197px,#05ff7c 201px,#01fe7e 202px,#32cc32 229px,#228c22 258px,#5e9e9f 288px,#0102cd 320px,#010180 347px,#181870 369px,#191970 372px)}
.r125{top:250px;height:2px;background:linear-gradient(90deg,#8b003c 0px,#8b008b 35px,#8d2151 89px,#ee050c 127px,#ff0000 133px,#ff6800 147px,#ffff00 166px,#25ff6d 197px,#05ff7d 201px,#01fe7e 202px,#32cc32 229px,#238b24 259px,#5e9e9f 288px,#0102cd 320px,#010180 347px,#181870 369px,#191970 372px)}
.r126{top:252px;height:2px;background:linear-gradient(90deg,#8b003c 0px,#8b008b 35px,#8e2150 89px,#ee050c 127px,#ff0100 133px,#ff6900 147px,#ffff00 166px,#24ff6d 197px,#05ff7d 201px,#01fe7e 202px,#32cc32 229px,#238b24 259px,#5e9e9f 288px,#0407cb 319px,#0000cb 321px,#010180 347px,#181870 369px,#191970 372px)}
.r127{top:254px;height:2px;background:linear-gradient(90deg,#8b003d 0px,#8b008a 35px,#8c2252 88px,#ee050c 127px,#ff0200 133px,#ff6900 147px,#feff00 166px,#24ff6d 197px,#05ff7d 201px,#01fe7e 202px,#32cc32 229px,#238b24 259px,#5e9e9e 288px,#0407cb 319px,#0000cb 321px,#010180 347px,#181870 369px,#191970 372px)}
.r128{top:256px;height:2px;background:linear-gradient(90deg,#8b003e 0px,#8b008b 34px,#8c2251 88px,#ee050c 127px,#ff0200 133px,#ff6a00 147px,#feff00 166px,#24ff6d 197px,#05ff7d 201px,#01fe7e 202px,#32cd32 229px,#238b24 259px,#5e9e9e 288px,#0407cb 319px,#0000cb 321px,#000080 347px,#181870 369px,#191970 372px)}
.r129{top:258px;height:2px;background:linear-gradient(90deg,#8b003e 0px,#8b008b 34px,#8d2251 88px,#ef050b 127px,#fd0101 132px,#ff0900 134px,#ff7a00 149px,#feff01 166px,#24ff6d 197px,#04ff7d 201px,#01fe7e 202px,#32cd32 229px,#238b24 259px,#5e9e9e 288px,#0507cb 319px,#0000cb 321px,#000080 347px,#181870 369px,#191970 372px)}
.r130{top:260px;height:2px;background:linear-gradient(90deg,#8b003f 0px,#8b008b 34px,#8d2150 88px,#ef050b 127px,#fe0001 132px,#ff0a00 134px,#ff7b00 149px,#fff900 165px,#fdff01 166px,#24ff6d 197px,#04ff7d 201px,#01fe7e 202px,#31ca31 230px,#238b23 259px,#5e9e9e 288px,#0508cb 319px,#0000cb 321px,#000080 347px,#181870 369px,#191970 372px)}
.r131{top:262px;height:2px;background:linear-gradient(90deg,#8b0040 0px,#8b008a 34px,#8b2252 87px,#ef050b 127px,#fe0001 132px,#ff1800 136px,#ffa400 154px,#fdff01 166px,#24ff6d 197px,#04ff7d 201px,#01fe7e 202px,#31cb31 230px,#238b23 259px,#5e9e9e 288px,#0e17c6 316px,#0000cb 321px,#000080 347px,#181870 369px,#191970 372px)}
.r132{top:264px;height:2px;background:linear-gradient(90deg,#8b0040 0px,#8b008b 33px,#8c2251 87px,#f0040b 127px,#fe0001 132px,#ff3600 140px,#fffa00 165px,#f5ff05 167px,#23ff6d 197px,#04ff7d 201px,#02fd7b 203px,#31cb31 230px,#228b23 259px,#5e9e9e 288px,#4674ac 297px,#0000cc 321px,#000080 347px,#181870 369px,#191970 372px)}
.r133{top:266px;height:2px;background:linear-gradient(90deg,#8b0041 0px,#8b008b 33px,#8d2251 87px,#f0040b 127px,#fe0000 132px,#ff4600 142px,#fffb00 165px,#f5ff05 167px,#23ff6d 197px,#04ff7d 201px,#02fd7b 203px,#31cb31 230px,#228b23 259px,#5e9e9e 288px,#5288a6 293px,#0000cc 321px,#000080 347px,#191970 370px,#191970 372px)}
.r134{top:268px;height:2px;background:linear-gradient(90deg,#8b0041 0px,#8b008b 33px,#8d2151 87px,#f0040a 127px,#ff0000 132px,#ff5600 144px,#fffb00 165px,#f4ff05 167px,#23ff6e 197px,#04ff7d 201px,#02fd7b 203px,#32cb32 230px,#228b23 259px,#5e9ca1 289px,#0000cc 321px,#000080 347px,#191970 370px,#191970 372px)}
.r135{top:270px;height:2px;background:linear-gradient(90deg,#8b0042 0px,#8b008a 33px,#8b2252 86px,#ee050c 126px,#ff0000 132px,#ff6600 146px,#fffb00 165px,#edff09 168px,#23ff6e 197px,#04ff7d 201px,#02fd7b 203px,#32cb32 230px,#228b22 259px,#5e9ca1 289px,#0000cc 321px,#000080 347px,#191970 370px,#191970 372px)}
.r136{top:272px;height:2px;background:linear-gradient(90deg,#8b0043 0px,#8b008b 32px,#8c2251 86px,#ee050c 126px,#ff0100 132px,#ff6700 146px,#fffc00 165px,#e5ff0d 169px,#23ff6e 197px,#04ff7d 201px,#02fd7b 203px,#32cb32 230px,#228b22 259px,#5e9ca1 289px,#0000cc 321px,#000080 347px,#191970 370px,#191970 372px)}
.r137{top:274px;height:2px;background:linear-gradient(90deg,#8b0043 0px,#8b008b 32px,#8c2251 86px,#ef050c 126px,#ff0200 132px,#ff6700 146px,#fffc00 165px,#c2ff1e 174px,#23ff6e 197px,#04ff7d 201px,#03fc7b 203px,#32cb32 230px,#228b22 259px,#5e9ca0 289px,#0000cc 321px,#000080 347px,#191970 370px,#191970 372px)}
.r138{top:276px;height:2px;background:linear-gradient(90deg,#8b0044 0px,#8b008b 32px,#8d2151 86px,#ef050b 126px,#ff0200 132px,#ff6800 146px,#fffd00 165px,#2aff6a 196px,#03ff7d 201px,#03fc7b 203px,#32cc32 230px,#228b22 259px,#5e9ca0 289px,#0000cc 321px,#000080 347px,#191970 370px,#191970 372px)}
.r139{top:278px;height:2px;background:linear-gradient(90deg,#8b0045 0px,#8b008a 32px,#8b2252 85px,#ef050b 126px,#fd0001 131px,#ff0a00 133px,#ff7900 148px,#fffd00 165px,#2aff6a 196px,#03ff7d 201px,#03fc7b 203px,#32cc32 230px,#228b22 259px,#5e9da0 289px,#0000cc 321px,#01017f 348px,#191970 370px,#191970 372px)}
.r140{top:280px;height:2px;background:linear-gradient(90deg,#8b0045 0px,#8b008b 31px,#8c2251 85px,#f0040b 126px,#fe0001 131px,#ff1800 135px,#ffa100 153px,#fffd00 165px,#22ff6e 197px,#03ff7d 201px,#03fc7b 203px,#32cc32 230px,#228b22 259px,#5e9da0 289px,#0000cc 321px,#01017f 348px,#191970 370px,#191970 372px)}
.r141{top:282px;height:2px;background:linear-gradient(90deg,#8b0046 0px,#8b008b 31px,#8d2251 85px,#f0040b 126px,#fe0001 131px,#ff3d00 140px,#fffe00 165px,#22ff6e 197px,#03ff7e 201px,#04fb79 204px,#32cc32 230px,#228b22 259px,#5e9da0 289px,#0000cc 321px,#01017f 348px,#191970 370px,#191970 372px)}
.r142{top:284px;height:2px;background:linear-gradient(90deg,#8b0046 0px,#8b008b 31px,#8d2150 85px,#f0040a 126px,#ff0000 131px,#ff4c00 142px,#fffe00 165px,#22ff6e 197px,#03ff7e 201px,#04fb78 204px,#32cc32 230px,#228b22 259px,#5e9da0 289px,#0000cc 321px,#01017f 348px,#191970 370px,#191970 372px)}
.r143{top:286px;height:2px;background:linear-gradient(90deg,#8b0047 0px,#8b008a 31px,#8b2252 84px,#f1040a 126px,#ff0000 131px,#ff5c00 144px,#ffff00 165px,#21ff6e 197px,#03ff7e 201px,#06f976 205px,#32cc32 230px,#228c22 259px,#5e9da0 289px,#0000cc 321px,#01017f 348px,#191970 370px,#191970 372px)}
.r144{top:288px;height:2px;background:linear-gradient(90deg,#8b0048 0px,#8b008b 30px,#8c2251 84px,#f1040a 126px,#ff0100 131px,#ff6500 145px,#ffff00 165px,#1aff72 198px,#03ff7e 201px,#08f773 206px,#32cc32 230px,#228c22 259px,#5f9da0 289px,#0000cc 321px,#01017f 348px,#191970 370px,#191970 372px)}
.r145{top:290px;height:2px;background:linear-gradient(90deg,#8b0048 0px,#8b008b 30px,#8d2151 84px,#f20409 126px,#ff0200 131px,#ff6600 145px,#feff00 165px,#1aff72 198px,#02ff7e 201px,#0bf46e 208px,#32cc32 230px,#228c22 259px,#5f9da0 289px,#0000cc 321px,#01017f 348px,#191970 370px,#191970 372px)}
.r146{top:292px;height:2px;background:linear-gradient(90deg,#8b0049 0px,#8b008b 30px,#8d2150 84px,#f20409 126px,#ff0200 131px,#ff6600 145px,#feff01 165px,#21ff6f 197px,#02ff7e 201px,#12ed63 212px,#32cc32 230px,#228c22 259px,#5f9da0 289px,#0000cc 321px,#01017f 348px,#191970 370px,#191970 372px)}
.r147{top:294px;height:2px;background:linear-gradient(90deg,#8b004a 0px,#8b008a 30px,#8c2252 83px,#f30409 126px,#fe0001 130px,#ff1000 133px,#ff8600 149px,#fffa00 164px,#fdff01 165px,#21ff6f 197px,#02ff7e 201px,#20df4d 220px,#31ca31 231px,#228c22 259px,#5f9ea0 289px,#0000cc 321px,#01017f 348px,#191970 370px,#191970 372px)}
.r148{top:296px;height:2px;background:linear-gradient(90deg,#8b004a 0px,#8b008b 29px,#8c2251 83px,#f30409 126px,#fe0001 130px,#ff3400 138px,#fffa00 164px,#f6ff05 166px,#20ff6f 197px,#02ff7e 201px,#31ca31 231px,#228c22 259px,#5f9ea0 289px,#0000cc 321px,#01017f 348px,#191970 370px,#191970 372px)}
.r149{top:298px;height:2px;background:linear-gradient(90deg,#8b004b 0px,#8b008b 29px,#8d2151 83px,#f30308 126px,#fe0000 130px,#ff4b00 141px,#fffb00 164px,#f5ff05 166px,#20ff6f 197px,#02ff7e 201px,#31ca31 231px,#228c22 259px,#5f9ea0 289px,#0000cc 321px,#01017f 348px,#191970 370px,#191970 372px)}
.r150{top:300px;height:2px;background:linear-gradient(90deg,#8b004b 0px,#8b008b 29px,#8b2252 82px,#f1040a 125px,#ff0000 130px,#ff5b00 143px,#fffb00 164px,#f5ff05 166px,#20ff6f 197px,#01ff7e 201px,#31cb31 231px,#228c22 259px,#5f9ea0 289px,#0000cd 321px,#01017f 348px,#191970 370px,#191970 372px)}
.r151{top:302px;height:2px;background:linear-gradient(90deg,#8b004c 0px,#8b008a 29px,#8c2251 82px,#f2040a 125px,#ff0100 130px,#ff6300 144px,#fffc00 164px,#e6ff0c 168px,#20ff6f 197px,#01ff7e 201px,#31cb31 231px,#228c22 259px,#5f9ea0 289px,#0000cd 321px,#01017f 348px,#191970 370px,#191970 372px)}
.r152{top:304px;height:2px;background:linear-gradient(90deg,#8b004d 0px,#8b008b 28px,#8d2251 82px,#f20409 125px,#ff0200 130px,#ff6400 144px,#fffc00 164px,#afff28 176px,#18ff73 198px,#01ff7e 201px,#31cb31 231px,#238b24 260px,#5f9ea0 289px,#0000cd 321px,#01017f 348px,#191970 370px,#191970 372px)}
.r153{top:306px;height:2px;background:linear-gradient(90deg,#8b004d 0px,#8b008b 28px,#8d2150 82px,#f20409 125px,#ff0300 130px,#ff6500 144px,#fffd00 164px,#27ff6c 196px,#01ff7f 201px,#31cb31 231px,#238b24 260px,#5f9ea0 289px,#0000cd 321px,#01017f 348px,#191970 370px,#191970 372px)}
.r154{top:308px;height:2px;background:linear-gradient(90deg,#8b004e 0px,#8b008b 28px,#8c2252 81px,#f30409 125px,#fe0001 129px,#ff1700 133px,#ff9c00 151px,#fffd00 164px,#26ff6c 196px,#01ff7f 201px,#31cb31 231px,#238b24 260px,#5f9ea0 289px,#0000cd 321px,#01017f 348px,#191970 370px,#191970 372px)}
.r155{top:310px;height:2px;background:linear-gradient(90deg,#8b004e 0px,#8b008a 28px,#8c2251 81px,#f30308 125px,#fe0000 129px,#ff4200 139px,#fffe00 164px,#1fff70 197px,#00ff7f 201px,#31cb31 231px,#238b24 260px,#5f9ea0 289px,#0000cd 321px,#01017f 348px,#191970 370px,#191970 372px)}
.r156{top:312px;height:2px;background:linear-gradient(90deg,#8b004f 0px,#8b008b 27px,#8d2151 81px,#f40308 125px,#ff0000 129px,#ff5900 142px,#ffff00 164px,#1eff70 197px,#00ff7f 201px,#31cb31 231px,#238b24 260px,#5f9ea0 289px,#0000cd 321px,#01017f 348px,#191970 370px,#191970 372px)}
.r157{top:314px;height:2px;background:linear-gradient(90deg,#8b0050 0px,#8b008b 27px,#8c2252 80px,#f40307 125px,#ff0100 129px,#ff6100 143px,#ffff00 164px,#1eff70 197px,#00ff7f 201px,#31cb31 231px,#238b24 260px,#5f9ea0 289px,#0000cd 321px,#01017f 348px,#191970 370px,#191970 372px)}
.r158{top:316px;height:2px;background:linear-gradient(90deg,#8b0050 0px,#8b008b 27px,#8c2251 80px,#f50307 125px,#ff0200 129px,#ff6300 143px,#feff00 164px,#1eff70 197px,#00ff7f 201px,#31cb31 231px,#238b24 260px,#5f9ea0 289px,#0000cd 321px,#01017f 348px,#191970 370px,#191970 372px)}
.r159{top:318px;height:2px;background:linear-gradient(90deg,#8b0051 0px,#8b008a 27px,#8d2151 80px,#f60307 125px,#fe0001 128px,#ff1600 132px,#ff9900 150px,#fdff01 164px,#1dff70 197px,#00ff7f 201px,#31cb31 231px,#238b24 260px,#5f9ea0 289px,#0000cd 321px,#01017f 348px,#191970 370px,#191970 372px)}
.r160{top:320px;height:2px;background:linear-gradient(90deg,#8b0051 0px,#8b008b 26px,#8c2252 79px,#f40308 124px,#ff0000 128px,#ff4f00 140px,#fffa00 163px,#f6ff05 165px,#1dff71 197px,#00ff7f 201px,#31cb31 231px,#238b24 260px,#5f9ea0 289px,#0001cd 321px,#01017f 348px,#181870 369px,#191970 372px)}
.r161{top:322px;height:2px;background:linear-gradient(90deg,#8b0052 0px,#8b008b 26px,#8c2251 79px,#f50307 124px,#ff0100 128px,#ff6700 143px,#fffb00 163px,#f5ff05 165px,#24ff6d 196px,#00ff7f 201px,#31cb31 231px,#228c22 259px,#5f9ea0 289px,#0001cd 321px,#000080 347px,#181870 369px,#191970 372px)}
.r162{top:324px;height:2px;background:linear-gradient(90deg,#8b0053 0px,#8b008b 26px,#8d2150 79px,#f50307 124px,#ff0300 128px,#ff6900 143px,#fffc00 163px,#e7ff0c 167px,#24ff6d 196px,#00ff7e 201px,#31cb31 231px,#228c22 259px,#5f9da0 289px,#0101cd 321px,#000080 347px,#181870 369px,#191970 372px)}
.r163{top:326px;height:2px;background:linear-gradient(90deg,#8b0053 0px,#8b008a 26px,#8c2251 78px,#f60306 124px,#fe0000 127px,#ff4700 138px,#fffc00 163px,#31ff66 194px,#00ff7e 201px,#31cb31 231px,#228c22 259px,#5f9da0 289px,#0101cd 321px,#000080 347px,#181870 369px,#191970 372px)}
.r164{top:328px;height:2px;background:linear-gradient(90deg,#8b0054 0px,#8b008a 26px,#8d2151 78px,#f70205 124px,#ff0100 127px,#ff6c00 143px,#fffd00 163px,#2aff6a 195px,#05ff7d 200px,#01fe7e 201px,#31ca31 231px,#228c22 259px,#5e9da0 289px,#0101cd 321px,#010180 347px,#181870 369px,#191970 372px)}
.r165{top:330px;height:2px;background:linear-gradient(90deg,#8b0054 0px,#8b008b 25px,#8b2252 77px,#f80205 124px,#ff0300 127px,#ff6e00 143px,#fffe00 163px,#29ff6a 195px,#04ff7d 200px,#01fe7e 201px,#31ca31 231px,#228c22 259px,#5e9da0 289px,#0407cb 320px,#0000cb 322px,#010180 347px,#181870 369px,#191970 372px)}
.r166{top:332px;height:2px;background:linear-gradient(90deg,#8b0055 0px,#8b008b 25px,#8c2251 77px,#f90204 124px,#ff0000 126px,#ff6200 141px,#ffff00 163px,#29ff6b 195px,#04ff7d 200px,#02fd7b 202px,#31ca31 231px,#228c22 259px,#5e9da0 289px,#0407cb 320px,#0000cb 322px,#01017f 347px,#181870 369px,#191970 372px)}
.r167{top:334px;height:2px;background:linear-gradient(90deg,#8b0055 0px,#8b008a 25px,#8d2150 77px,#fb0103 124px,#ff0200 126px,#ff7200 143px,#feff00 163px,#28ff6b 195px,#03ff7d 200px,#02fd7b 202px,#32cc32 230px,#228c22 259px,#5e9ca0 289px,#0508cb 320px,#0000cb 322px,#01017f 347px,#181870 369px,#191970 372px)}
.r168{top:336px;height:2px;background:linear-gradient(90deg,#8b0056 0px,#8b008a 25px,#8c2251 76px,#fc0102 124px,#fe0000 125px,#ff5200 138px,#fdff01 163px,#28ff6b 195px,#03ff7e 200px,#06f976 204px,#32cc32 230px,#228c22 259px,#5e9ca1 289px,#0508cb 320px,#0000cb 322px,#000080 346px,#181871 369px,#191970 372px)}
.r169{top:338px;height:2px;background:linear-gradient(90deg,#8b0057 0px,#8b008b 24px,#8d2151 76px,#ff0100 125px,#ff7600 143px,#fffb00 162px,#f6ff05 164px,#27ff6c 195px,#02ff7e 200px,#23dc49 221px,#31ca31 231px,#228c22 259px,#5e9e9e 288px,#263fbb 309px,#0000cc 322px,#000080 346px,#181871 369px,#191970 372px)}
.r170{top:340px;height:2px;background:linear-gradient(90deg,#8b0057 0px,#8b008b 24px,#8c2252 75px,#fe0001 124px,#ff4900 136px,#fffc00 162px,#e8ff0c 166px,#2eff68 194px,#01ff7e 200px,#32cc32 230px,#228c22 259px,#5e9e9e 288px,#0b13c8 318px,#0000cc 322px,#000080 346px,#181871 369px,#181870 372px)}
.r171{top:342px;height:2px;background:linear-gradient(90deg,#8b0058 0px,#8b008b 24px,#8d2251 75px,#ff0100 124px,#ff7b00 143px,#fffd00 162px,#3bff62 192px,#01ff7f 200px,#32cc32 230px,#228b22 259px,#5e9e9e 288px,#0c13c8 318px,#0000cc 322px,#010180 346px,#181871 369px,#181871 372px)}
.r172{top:344px;height:2px;background:linear-gradient(90deg,#8b0058 0px,#8b008a 24px,#8b2252 74px,#fe0001 123px,#ff3400 132px,#fffe00 162px,#33ff65 193px,#00ff7f 200px,#32cc32 230px,#228b22 259px,#5e9e9f 288px,#0c13c7 318px,#0000cc 322px,#01017f 346px,#171771 369px,#181871 372px)}
.r173{top:346px;height:2px;background:linear-gradient(90deg,#8b0059 0px,#8b008b 23px,#8c2251 74px,#ff0100 123px,#ff8600 144px,#ffff00 162px,#33ff66 193px,#00ff7f 200px,#32cc32 230px,#228b22 259px,#5f9e9f 288px,#0c14c7 318px,#0000cc 322px,#000080 345px,#171771 369px,#171771 372px)}
.r174{top:348px;height:2px;background:linear-gradient(90deg,#8b005a 0px,#8b008b 23px,#8d2150 74px,#fe0001 122px,#ff2100 128px,#feff00 162px,#32ff66 193px,#00ff7f 200px,#32cc32 230px,#228b22 259px,#5f9e9f 288px,#0c14c7 318px,#0000cc 322px,#000080 345px,#171772 369px,#171771 372px)}
.r175{top:350px;height:2px;background:linear-gradient(90deg,#8b005a 0px,#8b008b 23px,#8c2251 73px,#ff0000 122px,#ff9000 145px,#fdff01 162px,#31ff66 193px,#00ff7e 200px,#32cc32 230px,#228b22 259px,#5f9ea0 288px,#090fc9 319px,#0000cc 322px,#000080 345px,#161672 369px,#171772 372px)}
.r176{top:352px;height:2px;background:linear-gradient(90deg,#8b005b 0px,#8b008a 23px,#8d2150 73px,#fe0001 121px,#ff1400 125px,#ffc700 153px,#fffb00 161px,#efff08 164px,#30ff67 193px,#05ff7d 199px,#01fe7e 200px,#32cb32 230px,#228b22 259px,#5f9ea0 288px,#090fc9 319px,#0000cc 322px,#010180 345px,#161672 369px,#161672 372px)}
.r177{top:354px;height:2px;background:linear-gradient(90deg,#8b005b 0px,#8b008b 22px,#8c2251 72px,#ff0000 121px,#ff9400 145px,#fffc00 161px,#4cff59 189px,#04ff7d 199px,#02fd7c 201px,#32cb32 230px,#228b22 259px,#5f9ea0 288px,#0d15c7 318px,#0000cd 322px,#000081 344px,#151573 369px,#151572 372px)}
.r178{top:356px;height:2px;background:linear-gradient(90deg,#8b005c 0px,#8b008b 22px,#8d2151 72px,#fe0001 120px,#ff0e00 123px,#ffb600 150px,#fffe00 161px,#44ff5d 190px,#03ff7d 199px,#04fb79 202px,#32cb32 230px,#228b22 259px,#5e9da0 288px,#0d15c7 318px,#0000cd 322px,#000080 344px,#141473 369px,#151573 372px)}
.r179{top:358px;height:2px;background:linear-gradient(90deg,#8b005d 0px,#8b008a 22px,#8c2251 71px,#ff0000 120px,#ff8b00 143px,#ffff00 161px,#3cff61 191px,#02ff7e 199px,#0ff067 209px,#31cb31 230px,#228b23 259px,#5e9da0 288px,#0d16c7 318px,#0000cd 322px,#000080 344px,#141473 369px,#141473 372px)}
.r180{top:360px;height:2px;background:linear-gradient(90deg,#8b005d 0px,#8b008a 22px,#8d2151 71px,#ff0200 120px,#ffa600 147px,#feff01 161px,#3bff62 191px,#01ff7e 199px,#31cb31 230px,#228b23 259px,#5e9ca1 288px,#0d16c7 318px,#0000cd 322px,#000080 344px,#131374 369px,#141473 372px)}
.r181{top:362px;height:2px;background:linear-gradient(90deg,#8b005e 0px,#8b008b 21px,#8c2252 70px,#fe0000 119px,#ff7c00 140px,#fdff01 161px,#3aff62 191px,#00ff7f 199px,#31cb31 230px,#228b23 259px,#5e9ca1 288px,#0d16c7 318px,#0000cd 322px,#000082 343px,#131374 370px,#131374 372px)}
.r182{top:364px;height:2px;background:linear-gradient(90deg,#8b005e 0px,#8b008b 21px,#8d2151 70px,#ff0100 119px,#ffaa00 147px,#fffc00 160px,#b0ff28 173px,#1dff71 195px,#00ff7f 199px,#32cd32 229px,#238b23 259px,#5e9e9e 287px,#111cc5 317px,#0001cd 322px,#00009d 335px,#000080 344px,#121274 370px,#121274 372px)}
.r183{top:366px;height:2px;background:linear-gradient(90deg,#8b005f 0px,#8b008a 21px,#8c2252 69px,#fe0001 118px,#ff4300 130px,#fffe00 160px,#46ff5c 189px,#00ff7f 199px,#32cc32 229px,#238b23 259px,#5e9e9f 287px,#111cc5 317px,#0101cd 322px,#0000a5 333px,#000081 343px,#121275 370px,#121275 372px)}
.r184{top:368px;height:2px;background:linear-gradient(90deg,#8b005f 0px,#8b008a 21px,#8d2251 69px,#ff0000 118px,#ffa700 146px,#ffff00 160px,#3eff60 190px,#00ff7e 199px,#32cc32 229px,#238b24 259px,#5e9e9f 287px,#111cc5 317px,#0101cd 322px,#0000a9 332px,#000081 343px,#111175 370px,#111175 372px)}
.r185{top:370px;height:2px;background:linear-gradient(90deg,#8b0060 0px,#8b008b 20px,#8b2252 68px,#ff0200 118px,#ffaf00 147px,#fdff01 160px,#3dff60 190px,#04ff7d 198px,#01fe7e 199px,#32cc32 229px,#238b24 259px,#5f9e9f 287px,#111dc5 317px,#0102cc 322px,#0000b1 330px,#000083 342px,#0d0d78 361px,#101076 372px)}
.r186{top:372px;height:2px;background:linear-gradient(90deg,#8b0061 0px,#8b008b 20px,#8d2251 68px,#fe0000 117px,#ff7900 138px,#fffc00 159px,#dcff11 165px,#35ff64 191px,#03ff7d 198px,#02fd7b 200px,#32cc32 229px,#238b24 259px,#5f9ea0 287px,#0e18c6 318px,#0102cc 322px,#0000b5 329px,#000083 342px,#0f0f76 367px,#101076 372px)}
.r187{top:374px;height:2px;background:linear-gradient(90deg,#8b0061 0px,#8b008a 20px,#8b2252 67px,#ff0000 117px,#ffad00 146px,#fffe00 159px,#49ff5b 188px,#02ff7e 198px,#09f672 204px,#32cb32 229px,#238b24 259px,#5f9ea0 287px,#0f18c6 318px,#0000cb 323px,#000083 342px,#0f0f77 368px,#0f0f76 372px)}
.r188{top:376px;height:2px;background:linear-gradient(90deg,#8b0062 0px,#8b018a 20px,#8c2251 67px,#fe0001 116px,#ff0e00 119px,#ffc800 150px,#feff00 159px,#3aff62 190px,#01ff7e 198px,#32cb32 229px,#228c22 258px,#5f9ea0 287px,#0f18c6 318px,#0000cc 323px,#000083 342px,#0e0e77 369px,#0e0e77 372px)}
.r189{top:378px;height:2px;background:linear-gradient(90deg,#8b0062 0px,#8b008b 19px,#8e2150 67px,#fe0000 116px,#ff8000 138px,#fffc00 158px,#e3ff0e 163px,#39ff63 190px,#00ff7f 198px,#32cb32 229px,#228c22 258px,#5f9da0 287px,#2a46b9 308px,#0509ca 321px,#0000cc 323px,#000085 341px,#01017f 345px,#0e0e77 372px)}
.r190{top:380px;height:2px;background:linear-gradient(90deg,#8b0063 0px,#8b008b 19px,#8c2251 66px,#ff0100 116px,#ffa700 144px,#fffe00 158px,#3fff60 189px,#00ff7f 198px,#31cb31 229px,#228c22 258px,#5e9da0 287px,#2c4ab8 307px,#090fc9 320px,#0000cc 323px,#000085 341px,#02027f 346px,#0d0d77 372px)}
.r191{top:382px;height:2px;background:linear-gradient(90deg,#8b0064 0px,#8b008a 19px,#8d2150 66px,#fe0001 115px,#ff0e00 118px,#ffc900 149px,#fdff01 158px,#3dff60 189px,#00ff7f 198px,#31cb31 229px,#228c22 258px,#5e9da0 287px,#2c4ab8 307px,#090fc9 320px,#0000cc 323px,#000086 341px,#02027f 346px,#0d0d78 372px)}
.r192{top:384px;height:2px;background:linear-gradient(90deg,#8b0064 0px,#8b008b 18px,#8c2251 65px,#fe0000 115px,#ff7a00 136px,#fffd00 157px,#49ff5b 187px,#01fe7e 198px,#31ca31 229px,#228c22 258px,#5e9ca1 287px,#2c4ab8 307px,#090fc9 320px,#0000cc 323px,#000086 341px,#02027f 346px,#0c0c78 372px)}
.r193{top:386px;height:2px;background:linear-gradient(90deg,#8b0065 0px,#8b008b 18px,#8d2150 65px,#ff0100 115px,#ff9c00 141px,#feff00 157px,#3bff62 189px,#04ff7d 197px,#02fd7c 199px,#32cc32 228px,#228c22 258px,#5e9e9e 286px,#121fc4 317px,#0000cd 323px,#000084 342px,#05057d 351px,#0c0c78 372px)}
.r194{top:388px;height:2px;background:linear-gradient(90deg,#8b0066 0px,#8b008b 18px,#8c2251 64px,#fe0001 114px,#ff0e00 117px,#ffbe00 146px,#fffc00 156px,#d8ff14 163px,#33ff66 190px,#03ff7e 197px,#05fa77 201px,#32cc32 228px,#228c22 258px,#5e9e9e 286px,#131fc4 317px,#0000cd 323px,#000085 342px,#02027f 347px,#0b0b79 372px)}
.r195{top:390px;height:2px;background:linear-gradient(90deg,#8b0066 0px,#8b008a 18px,#8d2150 64px,#fe0000 114px,#ff6f00 133px,#ffff00 156px,#38ff63 189px,#02ff7e 197px,#2ed138 225px,#31c731 230px,#228b22 258px,#5e9e9e 286px,#101ac6 318px,#0000cd 323px,#00009b 336px,#000081 344px,#0b0b79 372px)}
.r196{top:392px;height:2px;background:linear-gradient(90deg,#8b0067 0px,#8b008b 17px,#8c2251 63px,#ff0100 114px,#ff9100 138px,#fffc00 155px,#f0ff07 158px,#37ff64 189px,#00ff7f 197px,#32cc32 228px,#228b22 258px,#5e9e9f 286px,#101ac6 318px,#0000cd 323px,#0000a4 334px,#000084 343px,#03037e 350px,#0a0a79 372px)}
.r197{top:394px;height:2px;background:linear-gradient(90deg,#8b0067 0px,#8b008b 17px,#8d2151 63px,#fe0001 113px,#ff0e00 116px,#ffba00 144px,#fffe00 155px,#36ff64 189px,#00ff7f 197px,#32cb32 228px,#228b22 258px,#5e9e9f 286px,#0d16c7 319px,#0101cd 323px,#0000a9 333px,#000085 343px,#02027f 349px,#0a0a7a 372px)}
.r198{top:396px;height:2px;background:linear-gradient(90deg,#8b0068 0px,#8b008a 17px,#8c2251 62px,#ff0000 113px,#ff6a00 131px,#fdff01 155px,#34ff65 189px,#00ff7e 197px,#32cb32 228px,#228b22 258px,#5f9e9f 286px,#0d16c7 319px,#0101cd 323px,#0000aa 333px,#000084 344px,#03037e 351px,#09097a 372px)}
.r199{top:398px;height:2px;background:linear-gradient(90deg,#8b0069 0px,#8b008b 16px,#8d2151 62px,#ff0100 113px,#ff8600 135px,#fffe00 154px,#39ff62 188px,#04ff7d 196px,#02fd7c 198px,#31cb31 228px,#228b22 258px,#5f9e9f 286px,#0a11c8 320px,#0000cb 324px,#000086 344px,#02027f 350px,#09097a 372px)}
.r200{top:400px;height:2px;background:linear-gradient(90deg,#8b0069 0px,#8b008b 16px,#8c2252 61px,#fe0001 112px,#ff1400 116px,#fdff01 154px,#31ff66 189px,#03ff7e 196px,#04fb79 199px,#31cb31 228px,#228b22 258px,#5f9e9f 286px,#243cbc 310px,#0000cb 324px,#000087 344px,#01017f 350px,#08087b 372px)}
.r201{top:402px;height:2px;background:linear-gradient(90deg,#8b006a 0px,#8b008b 16px,#8d2251 61px,#ff0000 112px,#ff6c00 130px,#fffe00 153px,#36ff64 188px,#01ff7e 196px,#2ad53e 222px,#31ca31 228px,#228b22 258px,#5f9ea0 286px,#2b48b8 307px,#0508cb 322px,#0000cc 324px,#000086 345px,#01017f 351px,#08087b 372px)}
.r202{top:404px;height:2px;background:linear-gradient(90deg,#8b006b 0px,#8b008a 16px,#8e2150 61px,#ff0100 112px,#ff8100 133px,#feff01 153px,#2eff68 189px,#00ff7f 196px,#32cc32 227px,#228b22 258px,#5f9ea0 286px,#2b48b9 307px,#0000cc 324px,#000086 346px,#01017f 352px,#07077b 372px)}
.r203{top:406px;height:2px;background:linear-gradient(90deg,#8b006b 0px,#8b008b 15px,#8c2251 60px,#fe0001 111px,#ff3200 120px,#fffd00 152px,#33ff66 188px,#00ff7f 196px,#32cc32 227px,#228b22 258px,#5f9ea0 286px,#2d4bb8 306px,#0000cc 324px,#000088 346px,#01017f 352px,#07077c 372px)}
.r204{top:408px;height:2px;background:linear-gradient(90deg,#8b006c 0px,#8b008b 15px,#8d2150 60px,#ff0000 111px,#ff7a00 131px,#feff01 152px,#31ff66 188px,#04ff7d 195px,#02fd7c 197px,#32cc32 227px,#228b22 258px,#5f9ea0 286px,#2d4bb8 306px,#0000cc 324px,#000087 347px,#01017f 353px,#06067c 372px)}
.r205{top:410px;height:2px;background:linear-gradient(90deg,#8b006d 0px,#8b008a 15px,#8c2251 59px,#ff0200 111px,#ff7d00 131px,#fffd00 151px,#36ff64 187px,#02ff7e 195px,#0df26b 204px,#32cb32 227px,#228b22 258px,#5f9ea0 286px,#2d4bb8 306px,#0000cd 324px,#000087 348px,#01017f 355px,#06067c 372px)}
.r206{top:412px;height:2px;background:linear-gradient(90deg,#8b006d 0px,#8b008b 14px,#8d2151 59px,#ff0000 110px,#ff5900 125px,#feff01 151px,#2eff68 188px,#01ff7f 195px,#32cb32 227px,#228b22 258px,#5f9ea0 286px,#2d4bb8 306px,#0000cd 324px,#000086 349px,#01017f 356px,#05057d 372px)}
.r207{top:414px;height:2px;background:linear-gradient(90deg,#8b006e 0px,#8b008b 14px,#8b2252 58px,#ff0100 110px,#ff7d00 130px,#fffd00 150px,#32ff66 187px,#00ff7f 195px,#31cb31 227px,#228b22 258px,#5f9ea0 286px,#2d4bb8 306px,#0000cd 324px,#000086 350px,#01017f 357px,#05057d 372px)}
.r208{top:416px;height:2px;background:linear-gradient(90deg,#8b006f 0px,#8b008a 14px,#8c2251 58px,#fe0001 109px,#ff4600 121px,#fffa00 149px,#f8ff04 151px,#2aff6a 188px,#04ff7d 194px,#02fd7c 196px,#31ca31 227px,#228b22 258px,#5f9ea0 286px,#2a47b9 307px,#0001cd 324px,#000088 350px,#01017f 357px,#04047d 372px)}
.r209{top:418px;height:2px;background:linear-gradient(90deg,#8b006f 0px,#8b008b 13px,#8d2150 58px,#ff0100 109px,#ff7600 128px,#fffd00 149px,#2fff68 187px,#02ff7e 194px,#11ee64 206px,#32cc32 226px,#228b22 258px,#5f9ea0 286px,#2a46b9 307px,#0101cd 324px,#000088 351px,#01017f 359px,#04047d 372px)}
.r210{top:420px;height:2px;background:linear-gradient(90deg,#8b0070 0px,#8b008b 13px,#8c2251 57px,#fe0001 108px,#ff3900 118px,#fffb00 148px,#f7ff04 150px,#2dff69 187px,#00ff7f 194px,#32cc32 226px,#228b22 258px,#5f9ea0 286px,#2842ba 308px,#0101cd 324px,#000088 352px,#01017f 361px,#03037e 372px)}
.r211{top:422px;height:2px;background:linear-gradient(90deg,#8b0071 0px,#8b008a 13px,#8d2151 57px,#ff0100 108px,#ff7700 127px,#fffe00 148px,#2bff6a 187px,#00ff7f 194px,#32cb32 226px,#228b22 258px,#5f9ea0 286px,#253ebb 309px,#0000cc 325px,#000089 353px,#01017f 362px,#03037e 372px)}
.r212{top:424px;height:2px;background:linear-gradient(90deg,#8b0071 0px,#8b008b 12px,#8b2252 56px,#fe0001 107px,#ff3a00 117px,#fffb00 147px,#f1ff07 150px,#2fff68 186px,#03ff7d 193px,#02fd7c 195px,#31cb31 226px,#228b22 258px,#5f9e9f 286px,#2136be 311px,#0000cc 325px,#00008a 354px,#01017f 364px,#02027e 372px)}
.r213{top:426px;height:2px;background:linear-gradient(90deg,#8b0072 0px,#8b008b 12px,#8c2251 56px,#ff0100 107px,#ff7800 126px,#ffff00 147px,#2dff69 186px,#01ff7e 193px,#26d945 217px,#31ca31 226px,#228b22 258px,#5f9e9f 286px,#1e32bf 312px,#0000cc 325px,#000089 356px,#010180 366px,#02027f 372px)}
.r214{top:428px;height:2px;background:linear-gradient(90deg,#8b0073 0px,#8b008a 12px,#8d2150 56px,#fe0001 106px,#ff4000 117px,#fffc00 146px,#d5ff15 154px,#31ff67 185px,#00ff7f 193px,#32cc32 225px,#228b22 258px,#5f9e9f 286px,#1c2ec0 313px,#0000cc 325px,#00008b 357px,#01017f 369px,#01017f 372px)}
.r215{top:430px;height:2px;background:linear-gradient(90deg,#8b0073 0px,#8b008b 11px,#8c2251 55px,#ff0100 106px,#ff7900 125px,#fffa00 145px,#feff00 146px,#85ff3d 169px,#23ff6d 187px,#01fe7e 193px,#32cb32 225px,#228b22 258px,#5e9e9f 286px,#192ac1 314px,#0000cd 325px,#00008a 359px,#010180 371px,#010180 372px)}
.r216{top:432px;height:2px;background:linear-gradient(90deg,#8b0074 0px,#8b008b 11px,#8d2151 55px,#fe0000 105px,#ff4e00 118px,#fffd00 145px,#2dff68 185px,#02ff7e 192px,#18e75a 208px,#31cb31 225px,#228b22 258px,#5e9e9f 286px,#1726c2 315px,#0000cd 325px,#00008b 359px,#000080 372px)}
.r217{top:434px;height:2px;background:linear-gradient(90deg,#8b0075 0px,#8b008a 11px,#8c2252 54px,#ff0200 105px,#ff7a00 124px,#fffb00 144px,#f7ff04 146px,#2bff69 185px,#00ff7f 192px,#32cc32 224px,#228b22 258px,#5e9e9e 286px,#1422c3 316px,#0000cd 325px,#00008c 359px,#000081 372px)}
.r218{top:436px;height:2px;background:linear-gradient(90deg,#8b0075 0px,#8b008b 10px,#8d2151 54px,#ff0000 104px,#ff5600 118px,#fff900 143px,#ffff00 144px,#88ff3b 167px,#23ff6d 186px,#00ff7e 192px,#32cc32 224px,#228b22 258px,#5e9e9e 286px,#121ec4 317px,#0001cd 325px,#00008d 359px,#000083 372px)}
.r219{top:438px;height:2px;background:linear-gradient(90deg,#8b0076 0px,#8b008b 10px,#8b2252 53px,#ff0200 104px,#ff7400 122px,#fffc00 143px,#33ff66 183px,#02ff7e 191px,#06f975 196px,#32cb32 224px,#228b22 258px,#5e9e9e 286px,#568ea4 290px,#1726c2 315px,#0000cc 326px,#00008f 358px,#000084 372px)}
.r220{top:440px;height:2px;background:linear-gradient(90deg,#8b0077 0px,#8b008a 10px,#8d2251 53px,#ff0000 103px,#ff6400 119px,#fff400 141px,#feff01 143px,#96ff34 163px,#2bff6a 184px,#00ff7f 191px,#31cb31 224px,#228b22 258px,#5e9e9d 286px,#5b98a2 288px,#1e32bf 312px,#0000cc 326px,#000090 358px,#000086 372px)}
.r221{top:442px;height:2px;background:linear-gradient(90deg,#8b0077 0px,#8b008b 9px,#8b2252 52px,#fe0001 102px,#ff0e00 105px,#ffac00 129px,#fffe00 142px,#94ff35 163px,#2fff68 183px,#00ff7e 191px,#32cc32 223px,#228b22 258px,#5e9da0 287px,#2036be 311px,#0000cc 326px,#000092 358px,#000088 372px)}
.r222{top:444px;height:2px;background:linear-gradient(90deg,#8b0078 0px,#8b008b 9px,#8c2251 52px,#ff0000 102px,#ff6d00 119px,#fff700 140px,#fcff02 142px,#9bff32 161px,#32ff66 182px,#03ff7e 190px,#03fc7a 193px,#32cb32 223px,#228b22 258px,#5f9ea0 287px,#2136be 311px,#0000cd 326px,#000093 358px,#00008a 372px)}
.r223{top:446px;height:2px;background:linear-gradient(90deg,#8b0079 0px,#8b008a 9px,#8b2252 51px,#fe0001 101px,#ff2e00 109px,#ffef00 138px,#fdff01 141px,#a1ff2f 159px,#30ff67 182px,#01ff7f 190px,#2bd43d 217px,#31cb31 223px,#228b22 258px,#5f9ea0 287px,#1e33bf 312px,#0000cd 326px,#000095 358px,#00008b 372px)}
.r224{top:448px;height:2px;background:linear-gradient(90deg,#8b0079 0px,#8b008b 8px,#8c2251 51px,#ff0100 101px,#ff6f00 118px,#fff300 138px,#ffff00 140px,#a3ff2e 158px,#34ff65 181px,#00ff7f 190px,#32cc32 222px,#228b22 258px,#5f9ea0 287px,#1c2fc0 313px,#0000cd 326px,#000095 359px,#00008d 372px)}
.r225{top:450px;height:2px;background:linear-gradient(90deg,#8b007a 0px,#8b008b 8px,#8b2252 50px,#fe0000 100px,#ff4a00 112px,#ffeb00 136px,#fffd00 139px,#93ff36 161px,#32ff66 181px,#03ff7e 189px,#03fc7a 192px,#32cb32 222px,#228b22 258px,#5f9e9f 287px,#1a2cc1 314px,#0001cd 326px,#000097 359px,#00008f 372px)}
.r226{top:452px;height:2px;background:linear-gradient(90deg,#8b007b 0px,#8b008a 8px,#8d2251 50px,#ff0200 100px,#ff7100 117px,#fff000 136px,#fdff01 139px,#a7ff2c 156px,#35ff65 180px,#01ff7f 189px,#22dd4a 211px,#31cb31 222px,#228b22 258px,#5e9e9f 287px,#1828c2 315px,#0000cc 327px,#000098 359px,#000091 372px)}
.r227{top:454px;height:2px;background:linear-gradient(90deg,#8b007b 0px,#8b018a 8px,#8c2252 49px,#ff0000 99px,#ff6100 114px,#ffee00 135px,#feff00 138px,#a9ff2b 155px,#38ff63 179px,#00ff7f 189px,#32cc32 221px,#228b22 258px,#5e9e9e 287px,#1625c2 316px,#0000cc 327px,#00009a 359px,#000093 372px)}
.r228{top:456px;height:2px;background:linear-gradient(90deg,#8b007c 0px,#8b008b 7px,#8d2151 49px,#fe0001 98px,#ff1500 102px,#ffec00 134px,#fffe00 137px,#a2ff2f 156px,#36ff64 179px,#03ff7d 188px,#03fc7a 191px,#32cb32 221px,#228b22 258px,#5e9e9e 287px,#5085a7 293px,#1625c2 316px,#0000cd 327px,#00009c 359px,#000094 372px)}
.r229{top:458px;height:2px;background:linear-gradient(90deg,#8b007d 0px,#8b008b 7px,#8c2251 48px,#ff0100 98px,#ff6a00 114px,#ffeb00 133px,#fcff02 137px,#a8ff2b 154px,#39ff62 178px,#01ff7f 188px,#21de4d 209px,#31cb31 221px,#228b22 258px,#5e9da0 288px,#1e31bf 313px,#0000cd 327px,#00009d 359px,#000096 372px)}
.r230{top:460px;height:2px;background:linear-gradient(90deg,#8b007d 0px,#8b008a 7px,#8b2252 47px,#fe0000 97px,#ff4500 108px,#ffe900 132px,#feff01 136px,#aeff28 152px,#37ff63 178px,#00ff7f 188px,#32cc32 220px,#228b22 258px,#5f9da0 288px,#1e32bf 313px,#0001cd 327px,#00009e 360px,#000098 372px)}
.r231{top:462px;height:2px;background:linear-gradient(90deg,#8b007e 0px,#8b008b 6px,#8d2151 47px,#fd0001 96px,#ff0800 98px,#ff7a00 115px,#ffed00 132px,#ffff00 135px,#abff2a 152px,#3aff62 177px,#03ff7e 187px,#05fa78 191px,#32cb32 220px,#228b22 258px,#5f9ea0 288px,#1e32bf 313px,#0101cd 327px,#0000a0 360px,#00009a 372px)}
.r232{top:464px;height:2px;background:linear-gradient(90deg,#8b007e 0px,#8b008b 6px,#8c2251 46px,#ff0000 96px,#ff6300 111px,#ffe500 130px,#fffd00 134px,#a0ff2f 154px,#38ff63 177px,#00ff7f 187px,#26d945 211px,#31cb31 220px,#228b22 258px,#5f9ea0 288px,#1c2fc0 314px,#0000cd 328px,#0000a2 359px,#00009c 372px)}
.r233{top:466px;height:2px;background:linear-gradient(90deg,#8b007f 0px,#8b008a 6px,#8b2252 45px,#fe0001 95px,#ff3700 104px,#ffe300 129px,#fdff01 134px,#afff28 150px,#3bff62 176px,#00ff7e 187px,#32cc32 219px,#228b22 258px,#5f9e9f 288px,#1a2cc1 315px,#0000cd 328px,#0000a3 360px,#00009e 372px)}
.r234{top:468px;height:2px;background:linear-gradient(90deg,#8b0080 0px,#8b018a 6px,#8e2150 45px,#ff0200 95px,#ff6500 110px,#ffe700 129px,#ffff00 133px,#b1ff27 149px,#39ff63 176px,#02ff7e 186px,#14eb60 200px,#32cb32 219px,#228b22 258px,#5e9e9f 288px,#1829c1 316px,#0101cd 328px,#0000a4 361px,#0000a0 372px)}
.r235{top:470px;height:2px;background:linear-gradient(90deg,#8b0080 0px,#8b008b 5px,#8d2150 44px,#ff0000 94px,#ff5b00 108px,#ffe500 128px,#fffd00 132px,#a1ff2f 152px,#37ff64 176px,#00ff7f 186px,#32cc32 218px,#228b23 258px,#5e9e9e 288px,#1726c2 317px,#0000cd 329px,#0000a7 360px,#0000a2 372px)}
.r236{top:472px;height:2px;background:linear-gradient(90deg,#8b0080 0px,#8b008b 5px,#8d2150 43px,#fe0001 93px,#ff3700 102px,#ffe300 127px,#fdff01 132px,#b0ff27 148px,#3aff62 175px,#03ff7d 185px,#02fd7c 187px,#32cc32 218px,#228b23 258px,#5e9da0 289px,#1c2ec0 315px,#0001cd 329px,#0000a8 361px,#0000a3 372px)}
.r237{top:474px;height:2px;background:linear-gradient(90deg,#8b0081 0px,#8b008a 5px,#8d2150 42px,#ff0200 93px,#ff5e00 107px,#ffe700 127px,#ffff00 131px,#b2ff27 147px,#3dff61 174px,#01ff7f 185px,#1de252 204px,#31cb31 218px,#238b23 258px,#5f9da0 289px,#1d30bf 315px,#0000cd 330px,#0000a9 361px,#0000a5 372px)}
.r238{top:476px;height:2px;background:linear-gradient(90deg,#8b0081 0px,#8b008b 4px,#8d2150 41px,#dc0a19 77px,#ff0100 92px,#ff5c00 106px,#ffe500 126px,#fffd00 130px,#a2ff2e 150px,#3aff62 174px,#00ff7e 185px,#32cc32 217px,#238b24 258px,#5f9ea0 289px,#1b2ec0 316px,#0101cd 330px,#0000aa 363px,#0000a7 372px)}
.r239{top:478px;height:2px;background:linear-gradient(90deg,#8b0082 0px,#8b008b 4px,#8b2252 39px,#cc0f24 68px,#ff0000 91px,#ff4500 102px,#ffe300 125px,#fdff01 130px,#b1ff27 146px,#3dff61 173px,#02ff7e 184px,#13ec62 197px,#32cd32 216px,#228c22 257px,#409460 273px,#5f9e9f 289px,#1a2cc1 317px,#0001cd 331px,#0000ac 363px,#0000a9 372px)}
.r240{top:480px;height:2px;background:linear-gradient(90deg,#8b0082 0px,#8b008a 4px,#8b2252 38px,#c81027 65px,#fe0001 90px,#ff2200 96px,#ffe800 125px,#ffff00 129px,#b2ff26 145px,#3bff62 173px,#00ff7f 184px,#32cc32 216px,#228b22 257px,#5e9e9e 289px,#1727c2 319px,#0000cd 332px,#0000ae 363px,#0000ab 372px)}
.r241{top:482px;height:2px;background:linear-gradient(90deg,#8b0083 0px,#8b018a 4px,#8b2252 37px,#c4112a 62px,#ff0200 90px,#ff5d00 104px,#ffe600 124px,#fffd00 128px,#a8ff2c 147px,#3eff60 172px,#03ff7e 183px,#03fc7a 186px,#32cd32 215px,#228b22 257px,#5e9da0 290px,#1d30bf 317px,#0102cc 332px,#0000af 365px,#0000ad 372px)}
.r242{top:484px;height:2px;background:linear-gradient(90deg,#8b0083 0px,#8b008b 3px,#8c2251 36px,#c2122b 60px,#ff0100 89px,#ff5b00 103px,#ffe400 123px,#fdff01 128px,#b2ff26 144px,#40ff5f 171px,#00ff7f 183px,#20df4e 203px,#32cc32 215px,#228b23 257px,#5f9ea0 290px,#1c2ec0 318px,#0102cc 333px,#0000b0 366px,#0000af 372px)}
.r243{top:486px;height:2px;background:linear-gradient(90deg,#8b0084 0px,#8b008b 3px,#8c2251 35px,#c2122b 59px,#ff0000 88px,#ff5900 102px,#ffe200 122px,#ffff00 127px,#b3ff26 143px,#3eff60 171px,#00ff7e 183px,#32cd32 214px,#238b23 257px,#5f9ea0 290px,#1b2dc0 319px,#0102cc 334px,#0000b2 366px,#0000b1 372px)}
.r244{top:488px;height:2px;background:linear-gradient(90deg,#8b0084 0px,#8b008a 3px,#8c2251 34px,#c0122c 57px,#ff0000 87px,#ff4300 98px,#ffe000 121px,#fffd00 126px,#a9ff2b 145px,#41ff5f 170px,#01ff7e 182px,#17e85c 197px,#32cc32 214px,#238b24 257px,#5e9e9f 290px,#1829c1 321px,#0000cd 336px,#0000b5 365px,#0000b3 372px)}
.r245{top:490px;height:2px;background:linear-gradient(90deg,#8b0084 0px,#8b018a 3px,#8c2251 33px,#bf132d 55px,#fe0001 86px,#ff2e00 94px,#ffe400 121px,#fdff01 126px,#b3ff26 142px,#3fff60 170px,#00ff7f 182px,#32cb32 214px,#238b24 257px,#5e9e9e 290px,#558da5 295px,#1a2bc1 321px,#0102cc 336px,#0000b6 368px,#0000b5 372px)}
.r246{top:492px;height:2px;background:linear-gradient(90deg,#8b0085 0px,#8b008b 2px,#8c2251 32px,#bd132f 53px,#fe0001 85px,#ff0e00 88px,#ff7e00 105px,#ffee00 122px,#ffff00 125px,#b5ff25 141px,#41ff5f 169px,#02ff7e 181px,#09f671 188px,#32cc32 213px,#228b22 256px,#5f9ea0 291px,#1d31bf 320px,#0305cc 336px,#0000ca 342px,#0000b8 368px,#0000b7 372px)}
.r247{top:494px;height:2px;background:linear-gradient(90deg,#8b0086 0px,#8b008b 2px,#8c2251 31px,#bd132f 52px,#ff0200 85px,#ff5a00 99px,#ffe600 120px,#fffd00 124px,#a6ff2c 144px,#3fff60 169px,#00ff7f 181px,#24db48 203px,#32cc32 213px,#228b22 256px,#5f9e9f 291px,#1b2dc0 322px,#0203cc 338px,#0000c7 347px,#0000b9 371px,#0000b9 372px)}
.r248{top:496px;height:2px;background:linear-gradient(90deg,#8b0086 0px,#8b008a 2px,#8c2251 30px,#bb1430 50px,#ff0100 84px,#ff5800 98px,#ffe400 119px,#feff01 124px,#b4ff25 140px,#42ff5e 168px,#03ff7d 180px,#02fd7c 182px,#32cd32 212px,#228b23 256px,#5e9e9e 291px,#1929c1 324px,#0204cc 339px,#0000ca 345px,#0000bb 370px,#0000bb 372px)}
.r249{top:498px;height:2px;background:linear-gradient(90deg,#8b0087 0px,#8b0288 3px,#8c2251 29px,#bb1430 49px,#ff0000 83px,#ff5e00 98px,#ffe200 118px,#fffe00 123px,#aeff28 141px,#40ff5f 168px,#01ff7f 180px,#1ce354 198px,#32cc32 212px,#238b23 256px,#5f9ea0 292px,#1c2fc0 323px,#0406cb 339px,#0000cb 345px,#0000bd 371px,#0000bd 372px)}
.r250{top:500px;height:2px;background:linear-gradient(90deg,#8b0087 0px,#8b018a 2px,#8c2251 28px,#b91431 47px,#ff0000 82px,#ff4f00 95px,#ffe500 118px,#fdff01 123px,#b4ff25 139px,#42ff5e 167px,#00ff7e 180px,#32cc32 212px,#238b24 256px,#5f9e9f 292px,#1b2cc0 325px,#0306cb 341px,#0000cb 347px,#0000bf 372px)}
.r251{top:502px;height:2px;background:linear-gradient(90deg,#8b0088 0px,#8b0189 2px,#8b2252 27px,#ba1431 46px,#fe0001 81px,#ff3a00 91px,#ffe300 117px,#ffff00 122px,#b6ff25 138px,#40ff5f 167px,#01ff7e 179px,#16e95c 194px,#32cd32 211px,#238b24 256px,#5e9e9e 292px,#192ac1 327px,#0306cb 343px,#0000cb 350px,#0000c2 372px)}
.r252{top:504px;height:2px;background:linear-gradient(90deg,#8b0089 0px,#8b0386 3px,#8b2153 25px,#c1122c 49px,#fe0001 80px,#ff1400 84px,#ffec00 118px,#fcff02 122px,#b0ff28 139px,#42ff5e 166px,#00ff7f 179px,#25da46 202px,#31cb31 212px,#238b24 256px,#5e9e9d 292px,#5d9ba1 294px,#1d31bf 326px,#0509ca 343px,#0000cc 351px,#0000c4 372px)}
.r253{top:506px;height:2px;background:linear-gradient(90deg,#8b008a 0px,#8b136c 13px,#8b2252 25px,#b81532 43px,#ff0200 80px,#ff6400 96px,#ffe400 116px,#feff00 121px,#b6ff25 137px,#40ff5f 166px,#02ff7e 178px,#06f976 183px,#32cc32 211px,#228b22 255px,#5d9d9c 292px,#5c99a1 295px,#1e32bf 327px,#070cca 344px,#0000cc 354px,#0000c6 372px)}
.r254{top:508px;height:2px;background:linear-gradient(90deg,#8b008b 0px,#8b2154 23px,#c0132d 46px,#ff0100 79px,#ff6200 95px,#ffe700 116px,#fffd00 120px,#a8ff2c 140px,#3eff60 166px,#00ff7f 178px,#24db48 201px,#32cc32 211px,#228b22 255px,#5c9d9b 292px,#5d9ba1 295px,#2035be 328px,#080dc9 346px,#0000cc 358px,#0000c8 372px)}
.r255{top:510px;height:2px;background:linear-gradient(90deg,#8b008b 0px,#8b2056 21px,#8d2150 24px,#ba1431 42px,#ff0000 78px,#ff5300 92px,#ffe500 115px,#feff01 120px,#b2ff27 137px,#41ff5f 165px,#00ff7e 178px,#32cb32 211px,#228b22 255px,#5b9d97 291px,#5e9da0 295px,#2035be 330px,#080ec9 349px,#0000cc 362px,#0000ca 372px)}
.r256{top:512px;height:2px;background:linear-gradient(90deg,#8b018a 0px,#8b1f56 20px,#90214f 24px,#bc1430 42px,#fe0001 77px,#ff3200 86px,#ffe800 115px,#fffe00 119px,#a8ff2b 139px,#3eff60 165px,#01ff7e 177px,#1be456 195px,#32cb32 211px,#228b22 255px,#5a9c95 291px,#5e9ca1 296px,#2136be 332px,#090fc9 352px,#0000cd 368px,#0000cc 372px)}
.r257{top:514px;height:2px;background:linear-gradient(90deg,#8b0189 0px,#8b1f57 19px,#8f214f 23px,#ba1431 40px,#ff0200 77px,#ff6800 94px,#ffeb00 115px,#feff01 119px,#b2ff26 136px,#3cff61 165px,#00ff7f 177px,#32cb32 211px,#228b22 255px,#599c94 291px,#5f9ea0 296px,#2036be 334px,#0a10c8 354px,#0102cc 371px,#0102cc 372px)}
.r258{top:516px;height:2px;background:linear-gradient(90deg,#8b0189 0px,#8b1f57 18px,#8f2150 22px,#b91431 39px,#ff0000 76px,#ff6600 93px,#ffe800 114px,#fffd00 118px,#a4ff2d 139px,#3aff62 165px,#02ff7e 176px,#10ef66 188px,#32cd32 210px,#228b22 255px,#5a9c95 292px,#5e9da0 297px,#2137bd 335px,#0b13c8 355px,#0407cb 371px,#0407cb 372px)}
.r259{top:518px;height:2px;background:linear-gradient(90deg,#8b0287 0px,#8b2056 18px,#8e2150 21px,#b91531 38px,#fe0000 75px,#ff4a00 88px,#ffe500 113px,#feff00 118px,#aeff28 136px,#3cff61 164px,#00ff7f 176px,#32cc32 211px,#238b24 256px,#599c93 292px,#5e9da0 298px,#2239bd 336px,#0e16c7 355px,#070bca 371px,#070bca 372px)}
.r260{top:520px;height:2px;background:linear-gradient(90deg,#8b0386 0px,#8b1f57 17px,#90214f 21px,#bb1430 38px,#fe0001 74px,#ff0d00 77px,#ff9300 99px,#fff800 116px,#fcff02 118px,#acff29 136px,#3aff62 164px,#03ff7e 175px,#03fc7b 178px,#32cc32 211px,#238b23 256px,#589c91 292px,#5e9ca1 299px,#233abc 337px,#0f19c6 356px,#090fc9 372px)}
.r261{top:522px;height:2px;background:linear-gradient(90deg,#8b0484 0px,#8b2055 17px,#8f214f 20px,#ba1431 37px,#ff0100 74px,#ff6b00 92px,#ffea00 113px,#ffff00 117px,#aeff28 135px,#38ff63 164px,#00ff7f 175px,#32cc32 211px,#228b22 256px,#589c92 293px,#5e9ca1 300px,#243cbc 338px,#111dc5 357px,#0c14c7 372px)}
.r262{top:524px;height:2px;background:linear-gradient(90deg,#8b0582 0px,#8b2056 16px,#8e2150 19px,#b71533 35px,#ff0000 73px,#ff4f00 87px,#ffe700 112px,#fdff01 117px,#a8ff2b 136px,#35ff64 164px,#00ff7e 175px,#32cb32 212px,#238b24 257px,#579c90 293px,#5e9ca1 301px,#2740bb 338px,#1421c4 357px,#0e18c6 372px)}
.r263{top:526px;height:2px;background:linear-gradient(90deg,#8b0780 0px,#8b2055 16px,#93204c 20px,#bd132f 37px,#fe0001 72px,#ff1300 76px,#ffef00 113px,#ffff00 116px,#a7ff2c 136px,#33ff66 164px,#01ff7f 174px,#27d842 203px,#32cb32 212px,#228b23 257px,#579c90 294px,#5e9ca1 302px,#2842ba 339px,#1624c3 358px,#111cc5 372px)}
.r264{top:528px;height:2px;background:linear-gradient(90deg,#8b087d 0px,#8b2153 16px,#bc142f 36px,#ff0100 72px,#ff6f00 91px,#ffec00 112px,#fdff01 116px,#a5ff2d 136px,#30ff67 164px,#00ff7e 174px,#32cc32 212px,#228b22 257px,#589c91 295px,#5e9ca1 303px,#2944ba 340px,#1827c2 359px,#1421c4 372px)}
.r265{top:530px;height:2px;background:linear-gradient(90deg,#8b0a7b 0px,#8b2252 16px,#b51634 32px,#fe0000 71px,#ff4e00 85px,#ffe900 111px,#fffe00 115px,#97ff34 139px,#29ff6a 165px,#01ff7e 173px,#27d843 203px,#31cb31 213px,#238b24 258px,#579b8f 295px,#5e9ca1 304px,#2a46b9 341px,#1a2bc1 360px,#1625c2 372px)}
.r266{top:532px;height:2px;background:linear-gradient(90deg,#8b0b78 0px,#8b2252 15px,#b91532 33px,#ff0200 71px,#ff7600 91px,#fff000 112px,#feff00 115px,#a5ff2d 135px,#2cff69 164px,#00ff7f 173px,#32cb32 213px,#228b23 258px,#579b8f 296px,#5e9ca1 305px,#2d4ab8 341px,#1c2fc0 360px,#192ac1 372px)}
.r267{top:534px;height:2px;background:linear-gradient(90deg,#8b0d75 0px,#8d2151 15px,#b81532 32px,#ff0000 70px,#ff7300 90px,#fff200 112px,#fcff01 115px,#9fff30 136px,#29ff6b 164px,#01ff7e 172px,#26d944 203px,#31cb31 214px,#228b22 258px,#579b8f 297px,#5e9ca1 306px,#2e4cb7 342px,#1e33bf 361px,#1c2ec0 372px)}
.r268{top:536px;height:2px;background:linear-gradient(90deg,#8b0f72 0px,#8c2251 14px,#b81532 31px,#fe0000 69px,#ff4c00 83px,#ffef00 111px,#ffff00 114px,#99ff33 137px,#22ff6e 165px,#00ff7f 172px,#32cb32 214px,#238b23 259px,#569b8d 297px,#5e9ca1 307px,#2f4fb7 343px,#2136be 362px,#1e33bf 372px)}
.r269{top:538px;height:2px;background:linear-gradient(90deg,#8b116f 0px,#8c2251 13px,#b71533 30px,#ff0200 69px,#ff7900 90px,#fff600 112px,#fdff01 114px,#9cff32 136px,#1fff6f 165px,#02ff7e 171px,#22dd4b 200px,#31ca31 215px,#228b23 259px,#559b8b 297px,#5e9ca1 308px,#3151b6 344px,#233abc 363px,#2137bd 372px)}
.r270{top:540px;height:2px;background:linear-gradient(90deg,#8b126c 0px,#8c2252 12px,#b71533 29px,#ff0000 68px,#ff7600 89px,#fff300 111px,#fcff02 114px,#91ff37 138px,#1dff70 165px,#00ff7f 171px,#32cb32 215px,#228b22 259px,#559b8c 298px,#5e9ca1 309px,#3355b5 344px,#263fbb 363px,#243cbc 372px)}
.r271{top:542px;height:2px;background:linear-gradient(90deg,#8b1469 0px,#8b2252 11px,#b81532 29px,#fe0001 67px,#ff4a00 81px,#fff000 110px,#ffff00 113px,#94ff35 137px,#16ff74 166px,#01fe7e 171px,#32cc32 215px,#238b24 260px,#549b8a 298px,#5e9da0 310px,#3558b4 345px,#2843ba 364px,#2740bb 372px)}
.r272{top:544px;height:2px;background:linear-gradient(90deg,#8b1666 0px,#8b2252 10px,#b81532 28px,#ff0200 67px,#ff7c00 89px,#fff700 111px,#fdff01 113px,#8eff38 138px,#14ff75 166px,#00ff7f 170px,#32cb32 216px,#228b23 260px,#549b8a 299px,#5e9da0 311px,#365ab3 346px,#2a47b9 365px,#2945b9 372px)}
.r273{top:546px;height:2px;background:linear-gradient(90deg,#8b1863 0px,#8c2252 9px,#b71533 27px,#ff0000 66px,#ff7900 88px,#fff900 111px,#fbff02 113px,#84ff3d 140px,#0dff79 167px,#00ff7e 170px,#32cc32 216px,#228b22 260px,#539a88 299px,#5e9ca1 313px,#385db2 347px,#2d4bb8 366px,#2c49b8 372px)}
.r274{top:548px;height:2px;background:linear-gradient(90deg,#8b1960 0px,#8c2252 8px,#b91532 27px,#fe0001 65px,#ff4900 79px,#fff600 110px,#feff00 112px,#86ff3c 139px,#06ff7c 168px,#01fe7e 170px,#32cb32 217px,#238b24 261px,#529a86 299px,#5e9ca1 314px,#3a60b2 348px,#304fb6 367px,#2f4eb7 372px)}
.r275{top:550px;height:2px;background:linear-gradient(90deg,#8b1b5e 0px,#8c2251 7px,#ba1431 27px,#ff0200 65px,#ff7f00 88px,#fffc00 111px,#9eff30 133px,#09ff7a 167px,#00ff7f 169px,#31ca31 218px,#228b23 261px,#529a86 300px,#5e9da0 315px,#3c63b1 349px,#3253b5 368px,#3253b5 372px)}
.r276{top:552px;height:2px;background:linear-gradient(90deg,#8b1d5b 0px,#8c2251 6px,#bb1430 27px,#ff0000 64px,#ff7600 86px,#fffe00 111px,#65ff4d 146px,#00ff7e 169px,#32cb32 218px,#228b22 261px,#519a83 300px,#5e9ca1 317px,#3e66b0 350px,#3558b4 369px,#3558b4 372px)}
.r277{top:554px;height:2px;background:linear-gradient(90deg,#8b1e58 0px,#8d2251 5px,#be132e 28px,#fe0001 63px,#ff4700 77px,#fff600 109px,#feff00 111px,#79ff43 141px,#01ff7f 168px,#31cb31 219px,#238b24 262px,#519a83 301px,#5e9da0 318px,#406aaf 351px,#385db3 370px,#385cb3 372px)}
.r278{top:556px;height:2px;background:linear-gradient(90deg,#8b1f56 0px,#8d2151 4px,#c2122b 30px,#ff0100 63px,#ff7c00 86px,#fffd00 110px,#00ff7f 168px,#32cb32 219px,#228b23 262px,#509981 301px,#5e9da0 320px,#416cae 353px,#3b61b1 372px)}
.r279{top:558px;height:2px;background:linear-gradient(90deg,#8b2154 0px,#8f214f 4px,#e50812 49px,#ff0000 62px,#ff7300 84px,#fffe00 110px,#03ff7e 167px,#02fd7c 170px,#31cb31 220px,#238b24 263px,#509981 302px,#5f9ea0 321px,#4370ad 354px,#3e66b0 372px)}
.r280{top:560px;height:2px;background:linear-gradient(90deg,#8b2253 0px,#fe0001 61px,#ff4500 75px,#fffb00 109px,#f9ff03 111px,#49ff5b 151px,#02ff7e 167px,#31ca31 221px,#228b23 263px,#4f997f 302px,#5f9da0 323px,#4674ac 355px,#416bae 372px)}
.r281{top:562px;height:2px;background:linear-gradient(90deg,#8d2151 0px,#f90204 58px,#ff0100 61px,#ff7800 84px,#fffd00 109px,#01ff7f 167px,#31cb31 221px,#228b22 263px,#4f997e 303px,#5f9e9f 324px,#4776ab 358px,#4470ad 372px)}
.r282{top:564px;height:2px;background:linear-gradient(90deg,#90214e 0px,#e40813 47px,#ff0000 60px,#ff6b00 81px,#fffe00 109px,#00ff7f 167px,#31ca31 222px,#238b23 264px,#4e997c 303px,#5e9e9e 325px,#4979ab 361px,#4775ac 372px)}
.r283{top:566px;height:2px;background:linear-gradient(90deg,#93204c 0px,#de0a17 43px,#fe0001 59px,#ff4300 73px,#fffb00 108px,#faff03 110px,#03ff7d 166px,#01fe7d 168px,#31cb31 222px,#228b22 264px,#4e997d 305px,#5e9e9f 328px,#4b7da9 362px,#4a7baa 372px)}
.r284{top:568px;height:2px;background:linear-gradient(90deg,#961f4a 0px,#de0a17 42px,#ff0100 59px,#ff7000 81px,#fffc00 108px,#00ff7e 167px,#31ca31 223px,#228b23 265px,#4d987a 305px,#5d9d9c 328px,#5d9ba1 335px,#4e82a8 363px,#4d80a9 372px)}
.r285{top:570px;height:2px;background:linear-gradient(90deg,#991e48 0px,#e00916 42px,#ff0000 58px,#ff6800 79px,#fffe00 108px,#02ff7e 166px,#31cb31 223px,#238b23 266px,#4d987a 307px,#5d9d9c 331px,#5c99a1 340px,#5186a7 367px,#5085a7 372px)}
.r286{top:572px;height:2px;background:linear-gradient(90deg,#9c1d46 0px,#e00916 41px,#fe0000 57px,#ff4600 72px,#fffb00 107px,#faff03 109px,#01ff7f 166px,#31ca31 224px,#228b22 266px,#4c9879 309px,#5c9d9a 334px,#5d9ba1 344px,#548ba5 369px,#538ba6 372px)}
.r287{top:574px;height:2px;background:linear-gradient(90deg,#9f1c44 0px,#e10915 41px,#ff0200 57px,#ff6d00 79px,#fffc00 107px,#d8ff13 116px,#00ff7f 166px,#31cb31 224px,#228b22 267px,#4c9878 312px,#5c9d99 338px,#5d9ca1 350px,#5790a4 372px)}
.r288{top:576px;height:2px;background:linear-gradient(90deg,#a11b42 0px,#e30814 41px,#ff0000 56px,#ff6500 77px,#fffe00 107px,#00ff7f 166px,#31ca31 225px,#228c22 268px,#4b9876 315px,#5b9d97 343px,#5d9ba1 359px,#5a96a2 372px)}
.r289{top:578px;height:2px;background:linear-gradient(90deg,#a41b40 0px,#e30814 40px,#ff0000 55px,#ff4e00 72px,#ffff00 107px,#03ff7e 165px,#02fd7c 168px,#31cb31 225px,#228c22 269px,#4c9879 321px,#5b9d98 350px,#5d9ba1 371px,#5d9ba1 372px)}
.r290{top:580px;height:2px;background:linear-gradient(90deg,#a61a3f 0px,#e40813 40px,#ff0200 55px,#ff6500 76px,#fffc00 106px,#f0ff07 110px,#02ff7e 165px,#11ee65 186px,#31ca31 226px,#228c22 270px,#2d8e38 284px,#4d987b 326px,#5b9d97 355px,#5e9e9e 372px)}
.r291{top:582px;height:2px;background:linear-gradient(90deg,#a9193d 0px,#e60712 40px,#ff0100 54px,#ff6200 75px,#fffd00 106px,#02ff7e 165px,#31cb31 226px,#228d22 271px,#248c27 276px,#4a9774 324px,#589c92 353px,#5c9d99 372px)}
.r292{top:584px;height:2px;background:linear-gradient(90deg,#ab193b 0px,#e80711 40px,#ff0000 53px,#ff5b00 73px,#fffe00 106px,#01ff7e 165px,#31ca31 227px,#228d22 273px,#268c2b 280px,#4a9774 327px,#579b8f 355px,#599c94 372px)}
.r293{top:586px;height:2px;background:linear-gradient(90deg,#ad183a 0px,#e9060f 40px,#fe0000 52px,#ff4100 67px,#ffff00 106px,#01ff7f 165px,#32cb32 227px,#238d23 274px,#258c28 280px,#489771 328px,#559b8b 356px,#579b8f 372px)}
.r294{top:588px;height:2px;background:linear-gradient(90deg,#af1738 0px,#eb060e 40px,#ff0200 52px,#ff6000 73px,#fffc00 105px,#deff10 113px,#00ff7f 165px,#31ca31 228px,#238d23 276px,#268c29 283px,#47976f 330px,#539a87 358px,#549b8a 372px)}
.r295{top:590px;height:2px;background:linear-gradient(90deg,#b11737 0px,#ec060d 40px,#ff0000 51px,#ff5e00 72px,#fffd00 105px,#00ff7f 165px,#32cb32 228px,#238e23 277px,#248c26 283px,#45966b 331px,#519982 359px,#529a85 372px)}
.r296{top:592px;height:2px;background:linear-gradient(90deg,#b31636 0px,#ee050c 40px,#ff0000 50px,#ff5200 69px,#fffe00 105px,#00ff7f 165px,#31cb31 229px,#238e23 279px,#248c26 285px,#449668 333px,#4e997e 361px,#4f9980 372px)}
.r297{top:594px;height:2px;background:linear-gradient(90deg,#b51634 0px,#f1040a 41px,#ff0200 50px,#ff6300 72px,#feff00 105px,#00ff7f 165px,#31ca31 230px,#238e23 280px,#238b25 286px,#429565 334px,#4c9879 362px,#4d987b 372px)}
.r298{top:596px;height:2px;background:linear-gradient(90deg,#b61533 0px,#f20409 41px,#ff0100 49px,#ff6100 71px,#fffc00 104px,#d6ff14 114px,#00ff7f 165px,#32cb32 230px,#238e23 282px,#238b25 288px,#409461 335px,#4a9774 363px,#4a9875 372px)}
.r299{top:598px;height:2px;background:linear-gradient(90deg,#b81532 0px,#f30308 41px,#ff0000 48px,#ff5e00 70px,#fffd00 104px,#01ff7f 165px,#31cb31 231px,#238f23 283px,#238b25 290px,#3f945e 337px,#47976f 365px,#489770 372px)}
.r300{top:600px;height:2px;background:linear-gradient(90deg,#b91532 0px,#f60306 42px,#ff0000 47px,#ff4f00 66px,#ffff00 104px,#01ff7e 165px,#31ca31 232px,#238f23 284px,#238b25 292px,#3d945b 339px,#45966a 367px,#45966a 372px)}
.r301{top:602px;height:2px;background:linear-gradient(90deg,#ba1431 0px,#f70205 42px,#ff0200 47px,#ff6800 71px,#feff00 104px,#02ff7e 165px,#09f671 177px,#32cb32 232px,#238f23 286px,#238b25 294px,#3b9357 340px,#429564 368px,#429565 372px)}
.r302{top:604px;height:2px;background:linear-gradient(90deg,#bb1430 0px,#fa0103 43px,#ff0100 46px,#ff6600 70px,#fffd00 103px,#00ff7f 166px,#32cb32 233px,#239023 287px,#238b24 296px,#3a9253 342px,#40945f 370px,#40945f 372px)}
.r303{top:606px;height:2px;background:linear-gradient(90deg,#bc1430 0px,#fd0101 44px,#ff0400 46px,#ff7200 72px,#fffe00 103px,#00ff7f 166px,#31cb31 234px,#239023 289px,#238b25 299px,#38924f 344px,#3d9359 372px)}
.r304{top:608px;height:2px;background:linear-gradient(90deg,#bc142f 0px,#ff0000 44px,#ff5500 65px,#ffff00 103px,#01ff7e 166px,#31cb31 235px,#239123 290px,#238b24 301px,#36914b 346px,#3a9254 372px)}
.r305{top:610px;height:2px;background:linear-gradient(90deg,#bd132f 0px,#ff0200 44px,#ff7300 71px,#feff00 103px,#03ff7e 166px,#03fc7b 170px,#31cb31 236px,#239123 292px,#238b24 304px,#349148 349px,#37924e 372px)}
.r306{top:612px;height:2px;background:linear-gradient(90deg,#be132e 0px,#ff0100 43px,#ff7500 71px,#fdff01 103px,#00ff7f 167px,#31cb31 237px,#249124 294px,#238b25 308px,#329044 352px,#349148 372px)}
.r307{top:614px;height:2px;background:linear-gradient(90deg,#bf132d 0px,#ff0000 42px,#ff6600 67px,#fffd00 102px,#01ff7e 167px,#31cb31 238px,#249224 296px,#238b24 311px,#308f3f 355px,#329042 372px)}
.r308{top:616px;height:2px;background:linear-gradient(90deg,#bf132d 0px,#ff0200 42px,#ff8200 73px,#fffe00 102px,#00ff7f 168px,#32cb32 239px,#249224 298px,#238b24 315px,#2e8f3b 359px,#2f8f3c 372px)}
.r309{top:618px;height:2px;background:linear-gradient(90deg,#c0122c 0px,#ff0000 41px,#ff7f00 72px,#fffe00 102px,#00ff7f 168px,#31cb31 241px,#249324 301px,#238b24 321px,#2c8e36 364px,#2c8e37 372px)}
.r310{top:620px;height:2px;background:linear-gradient(90deg,#c1122c 0px,#ff0200 41px,#ff8d00 75px,#ffff00 102px,#02ff7e 168px,#32cb32 242px,#249424 305px,#238b25 331px,#298d31 371px,#298d31 372px)}
.r311{top:622px;height:2px;background:linear-gradient(90deg,#c1122b 0px,#ff0000 40px,#ff8f00 75px,#ffff00 102px,#03ff7e 168px,#02fd7d 171px,#32cc32 243px,#259625 310px,#238b24 344px,#268c2b 372px)}
.r312{top:624px;height:2px;background:linear-gradient(90deg,#c2122b 0px,#ff0200 40px,#ffa100 79px,#ffff00 102px,#0bff79 166px,#01ff7f 169px,#32cd32 244px,#259825 318px,#238b23 361px,#238b25 372px)}
.r313{top:626px;height:2px;background:linear-gradient(90deg,#c3122b 0px,#ff0100 39px,#ffaa00 81px,#ffff00 102px,#10ff77 165px,#00ff7e 170px,#31ce34 243px,#259825 327px,#228d22 372px)}
.r314{top:628px;height:2px;background:linear-gradient(90deg,#c3122a 0px,#fe0000 38px,#ff7500 68px,#ffff00 102px,#15ff75 164px,#00ff7f 170px,#2fd037 242px,#30c630 258px,#259925 333px,#239023 372px)}
.r315{top:630px;height:2px;background:linear-gradient(90deg,#c4112a 0px,#ff0100 38px,#ffff00 102px,#16ff74 164px,#01ff7f 170px,#2fd037 244px,#30c630 261px,#269a26 336px,#249324 372px)}
.r316{top:632px;height:2px;background:linear-gradient(90deg,#c4112a 0px,#ff0200 38px,#fffe00 102px,#1aff72 163px,#00ff7f 171px,#2ed138 244px,#31c831 260px,#269d26 337px,#259625 372px)}
.r317{top:634px;height:2px;background:linear-gradient(90deg,#c41129 0px,#ff0000 37px,#fffe00 102px,#1bff72 163px,#00ff7f 171px,#2dd239 245px,#31c931 261px,#279f27 338px,#259925 372px)}
.r318{top:636px;height:2px;background:linear-gradient(90deg,#c51129 0px,#ff0100 37px,#fffe00 102px,#1cff71 163px,#00ff7e 172px,#2dd23a 246px,#31c931 264px,#28a228 340px,#269c26 372px)}
.r319{top:638px;height:2px;background:linear-gradient(90deg,#c51129 0px,#ff0200 37px,#fffe00 102px,#1dff70 163px,#00ff7f 172px,#2cd33b 247px,#31ca31 266px,#28a428 342px,#279f27 372px)}
.r320{top:640px;height:2px;background:linear-gradient(90deg,#c51129 0px,#ff0000 36px,#fdff01 103px,#29ff6b 160px,#01ff7f 172px,#2dd23a 250px,#31c931 269px,#29a629 344px,#28a228 372px)}
.r321{top:642px;height:2px;background:linear-gradient(90deg,#c51129 0px,#ff0000 36px,#fdff01 103px,#2bff6a 160px,#00ff7f 173px,#2bd43c 248px,#31ca31 270px,#29a929 345px,#28a528 372px)}
.r322{top:644px;height:2px;background:linear-gradient(90deg,#c51129 0px,#ff0000 36px,#feff01 103px,#2cff69 160px,#00ff7f 174px,#2bd43d 249px,#31ca31 272px,#2aac2a 347px,#29a929 372px)}
.r323{top:646px;height:2px;background:linear-gradient(90deg,#c51129 0px,#ff0000 36px,#ffff00 103px,#2fff68 160px,#00ff7e 175px,#2bd43d 250px,#31ca31 274px,#2bae2b 349px,#2aac2a 372px)}
.r324{top:648px;height:2px;background:linear-gradient(90deg,#c51129 0px,#ff0000 36px,#ffff00 103px,#2eff68 161px,#00ff7e 176px,#2bd43d 251px,#31ca31 277px,#2bb12b 352px,#2baf2b 372px)}
.r325{top:650px;height:2px;background:linear-gradient(90deg,#c51129 0px,#ff0200 37px,#fffd00 103px,#2cff69 163px,#00ff7f 177px,#2ad53e 252px,#31cb31 279px,#2cb42c 354px,#2cb22c 372px)}
.r326{top:652px;height:2px;background:linear-gradient(90deg,#c51129 0px,#ff0100 37px,#ffff00 104px,#3bff62 160px,#00ff7f 179px,#2bd43e 255px,#31ca31 283px,#2db72d 358px,#2cb62c 372px)}
.r327{top:654px;height:2px;background:linear-gradient(90deg,#c4112a 0px,#ff0000 37px,#fffd00 104px,#2eff68 166px,#00ff7e 182px,#2bd43e 258px,#31cb31 287px,#2dba2d 362px,#2db92d 372px)}
.r328{top:656px;height:2px;background:linear-gradient(90deg,#c4112a 0px,#ff0200 38px,#fffd00 105px,#36ff64 166px,#00ff7f 184px,#2ad53e 262px,#31cb31 293px,#2ebd2e 368px,#2ebd2e 372px)}
.r329{top:658px;height:2px;background:linear-gradient(90deg,#c3122b 0px,#ff0000 38px,#fffd00 106px,#3dff61 166px,#00ff7f 187px,#2ad53f 266px,#32cb32 301px,#2fc02f 372px)}
.r330{top:660px;height:2px;background:linear-gradient(90deg,#c2122b 0px,#ff0200 39px,#fff900 106px,#fbff02 109px,#50ff57 162px,#00ff7f 190px,#29d640 272px,#32cb32 313px,#30c430 372px)}
.r331{top:662px;height:2px;background:linear-gradient(90deg,#c1122c 0px,#ff0000 39px,#fff500 106px,#fcff02 110px,#4fff58 164px,#00ff7f 193px,#27d843 279px,#32cc32 329px,#31c731 372px)}
.r332{top:664px;height:2px;background:linear-gradient(90deg,#c0132d 0px,#ff0100 40px,#fff000 106px,#fdff01 111px,#51ff57 165px,#02ff7e 195px,#27d843 292px,#32cd32 351px,#32cb32 372px)}
.r333{top:666px;height:2px;background:linear-gradient(90deg,#be132e 0px,#ff0200 41px,#ffee00 107px,#ffff00 112px,#4cff59 168px,#07ff7c 195px,#00ff7e 199px,#25da46 297px,#30cf35 357px,#30cf34 372px)}
.r334{top:668px;height:2px;background:linear-gradient(90deg,#bd132f 0px,#ff0000 41px,#fff200 110px,#fcff02 115px,#4cff59 170px,#09ff7a 196px,#00ff7f 201px,#24db48 302px,#2dd239 362px,#2ed139 372px)}
.r335{top:670px;height:2px;background:linear-gradient(90deg,#bb1430 0px,#ff0000 42px,#fff400 113px,#fdff01 117px,#48ff5b 173px,#0bff79 197px,#00ff7f 203px,#21de4b 304px,#2ad53e 364px,#2bd43d 372px)}
.r336{top:672px;height:2px;background:linear-gradient(90deg,#b91431 0px,#ff0100 44px,#ffef00 114px,#fcff01 120px,#46ff5c 176px,#0cff79 199px,#00ff7e 206px,#1fe04f 305px,#27d842 367px,#27d842 372px)}
.r337{top:674px;height:2px;background:linear-gradient(90deg,#b81533 0px,#fe0000 45px,#fffe00 122px,#42ff5e 180px,#0bff7a 202px,#01fe7e 209px,#1de252 307px,#24db47 370px,#24db47 372px)}
.r338{top:676px;height:2px;background:linear-gradient(90deg,#b61634 0px,#fe0000 47px,#fffd00 125px,#9dff31 155px,#39ff63 186px,#09ff7b 206px,#00ff7e 212px,#1be456 308px,#21de4c 372px)}
.r339{top:678px;height:2px;background:linear-gradient(90deg,#b31635 0px,#ff0200 50px,#fffe00 129px,#3eff60 188px,#0dff79 208px,#00ff7f 216px,#18e75a 311px,#1ee151 372px)}
.r340{top:680px;height:2px;background:linear-gradient(90deg,#b11737 0px,#ff0000 52px,#fffd00 133px,#b0ff28 158px,#42ff5e 192px,#11ff77 212px,#00ff7f 222px,#16e95d 315px,#1be456 372px)}
.r341{top:682px;height:2px;background:linear-gradient(90deg,#af1839 0px,#ff0000 54px,#fffe00 138px,#8aff3a 175px,#37ff64 203px,#0aff7a 224px,#00ff7f 231px,#14eb61 322px,#17e85b 372px)}
.r342{top:684px;height:2px;background:linear-gradient(90deg,#ac183a 0px,#ff0100 57px,#ffe700 135px,#feff01 144px,#4eff58 203px,#19ff72 226px,#00ff7e 243px,#11ee64 333px,#14eb61 372px)}
.r343{top:686px;height:2px;background:linear-gradient(90deg,#aa193c 0px,#ff0000 59px,#ffd500 133px,#feff01 149px,#52ff56 211px,#1cff71 237px,#00ff7f 257px,#0ff068 345px,#10ef66 372px)}
.r344{top:688px;height:2px;background:linear-gradient(90deg,#a71a3e 0px,#ff0100 62px,#ffc300 130px,#fdff01 154px,#5bff52 218px,#23ff6e 247px,#00ff7f 274px,#0cf36c 358px,#0df26b 372px)}
.r345{top:690px;height:2px;background:linear-gradient(90deg,#a41b41 0px,#ff0000 64px,#ffbc00 130px,#ffff00 157px,#67ff4c 224px,#2bff6a 258px,#00ff7f 294px,#09f671 371px,#09f671 372px)}
.r346{top:692px;height:2px;background:linear-gradient(90deg,#9f1c44 0px,#ff0100 67px,#ffb600 130px,#fffe00 160px,#6fff48 232px,#31ff66 271px,#04ff7d 313px,#01fe7e 323px,#05fa77 372px)}
.r347{top:694px;height:2px;background:linear-gradient(90deg,#9a1e48 0px,#ff0000 69px,#ffb500 132px,#fffb00 162px,#f7ff04 168px,#7aff42 237px,#38ff63 283px,#0dff79 327px,#00ff7e 350px,#02fd7c 372px)}
.r348{top:696px;height:2px;background:linear-gradient(90deg,#93204c 0px,#e00916 49px,#ff0000 72px,#ffaf00 132px,#fff300 161px,#fcff01 169px,#80ff3f 243px,#3fff60 292px,#1aff72 334px,#0bff7a 370px,#0bff7a 372px)}
.r349{top:698px;height:2px;background:linear-gradient(90deg,#8c2251 0px,#bd132e 26px,#ff0000 75px,#ffac00 134px,#ffee00 162px,#feff01 172px,#86ff3c 248px,#4aff5a 297px,#2aff6a 338px,#1fff6f 372px)}
.r350{top:700px;height:2px;background:linear-gradient(90deg,#8b2055 0px,#951f4b 5px,#c0122c 27px,#ff0000 78px,#ffab00 137px,#ffeb00 165px,#feff01 177px,#91ff37 251px,#59ff53 300px,#3cff61 341px,#35ff65 372px)}
.r351{top:702px;height:2px;background:linear-gradient(90deg,#8b1e58 0px,#8f214f 4px,#b81532 22px,#dc0a18 49px,#ff0200 82px,#ffa900 141px,#ffe800 169px,#fdff01 184px,#9cff31 255px,#69ff4b 305px,#50ff57 347px,#4cff59 372px)}
.r352{top:704px;height:2px;background:linear-gradient(90deg,#8b1c5b 0px,#8e2150 5px,#b71533 23px,#da0b1a 49px,#ff0100 85px,#ffa800 146px,#ffe600 175px,#fdff01 192px,#a8ff2b 260px,#7aff42 311px,#65ff4d 353px,#63ff4e 372px)}
.r353{top:706px;height:2px;background:linear-gradient(90deg,#8b1a5f 0px,#8c2251 6px,#b41635 24px,#d90b1b 51px,#ff0200 89px,#ffa000 150px,#ffe000 181px,#fdff01 203px,#b3ff26 269px,#8aff3a 320px,#7bff42 362px,#7aff42 372px)}
.r354{top:708px;height:2px;background:linear-gradient(90deg,#8b1962 0px,#8d2151 8px,#b61534 28px,#dc0a19 58px,#ff0100 93px,#ff9b00 156px,#ffdb00 189px,#fdff01 216px,#bdff21 280px,#9bff32 331px,#91ff37 372px)}
.r355{top:710px;height:2px;background:linear-gradient(90deg,#8b1764 0px,#8d2151 10px,#b91532 33px,#e30814 68px,#ff0100 97px,#ff9200 161px,#ffd400 197px,#feff00 231px,#c7ff1c 294px,#acff29 344px,#a8ff2c 372px)}
.r356{top:712px;height:2px;background:linear-gradient(90deg,#8b1667 0px,#8c2251 12px,#ba1431 37px,#e60712 75px,#ff0200 102px,#ff8d00 168px,#ffd000 208px,#fffd00 247px,#ceff18 316px,#beff20 362px,#bdff21 372px)}
.r357{top:714px;height:2px;background:linear-gradient(90deg,#8b1569 0px,#8d2150 15px,#bd132f 43px,#ed050d 87px,#ff0200 107px,#ff8600 175px,#ffcb00 219px,#fff700 260px,#fcff02 274px,#daff12 332px,#d2ff17 372px)}
.r358{top:716px;height:2px;background:linear-gradient(90deg,#8b136b 0px,#8d2150 18px,#bf132d 49px,#f1040a 96px,#ff0200 112px,#ff8100 183px,#ffc600 231px,#fff100 275px,#fcff01 299px,#e7ff0c 352px,#e5ff0d 372px)}
.r359{top:718px;height:2px;background:linear-gradient(90deg,#8b126d 0px,#8d2151 21px,#c2122b 55px,#f30409 102px,#ff0100 117px,#ff7e00 193px,#ffc200 245px,#ffeb00 291px,#feff01 330px,#f6ff05 372px)}
.r360{top:720px;height:2px;background:linear-gradient(90deg,#8b1070 0px,#8c2251 24px,#c4112a 61px,#f40308 108px,#ff0100 123px,#ff7c00 204px,#ffbe00 259px,#ffe500 307px,#fff700 353px,#fff800 372px)}
.r361{top:722px;height:2px;background:linear-gradient(90deg,#8b0e73 0px,#8d2151 28px,#c71128 68px,#f50307 115px,#ff0200 130px,#ff7800 213px,#ffb800 270px,#ffdc00 318px,#ffea00 362px,#ffea00 372px)}
.r362{top:724px;height:2px;background:linear-gradient(90deg,#8b0c76 0px,#8d2150 32px,#c81027 74px,#f50307 121px,#ff0200 136px,#ff7300 220px,#ffb000 278px,#ffd100 326px,#ffdc00 369px,#ffdc00 372px)}
.r363{top:726px;height:2px;background:linear-gradient(90deg,#8b0a7a 0px,#8d2151 36px,#c91026 80px,#f50307 128px,#ff0200 143px,#ff6f00 227px,#ffa800 284px,#ffc600 332px,#ffcf00 372px)}
.r364{top:728px;height:2px;background:linear-gradient(90deg,#8b087e 0px,#8b2153 38px,#d10d20 94px,#fc0102 144px,#ff0300 151px,#ff6b00 234px,#ffa100 291px,#ffbd00 339px,#ffc300 372px)}
.r365{top:730px;height:2px;background:linear-gradient(90deg,#8b0582 0px,#8b2154 42px,#93204c 50px,#d00e21 99px,#fa0103 149px,#ff0300 158px,#ff6600 240px,#ff9900 296px,#ffb200 343px,#ffb700 372px)}
.r366{top:732px;height:2px;background:linear-gradient(90deg,#8b0386 0px,#8b2056 45px,#8f214f 52px,#cd0f23 102px,#f80205 152px,#ff0200 165px,#ff6300 247px,#ff9300 302px,#ffa900 348px,#ffac00 372px)}
.r367{top:734px;height:2px;background:linear-gradient(90deg,#8b0189 0px,#8b1f57 48px,#8e2150 56px,#ce0e23 109px,#f80205 160px,#ff0200 172px,#ff6000 254px,#ff8d00 308px,#ffa000 353px,#ffa200 372px)}
.r368{top:736px;height:2px;background:linear-gradient(90deg,#8b018a 0px,#8b2056 52px,#8e2150 60px,#cf0e22 115px,#f90204 167px,#ff0200 179px,#ff5e00 261px,#ff8800 314px,#ff9900 358px,#ff9a00 372px)}
.r369{top:738px;height:1px;background:linear-gradient(90deg,#8b008a 0px,#8b1f56 53px,#8f214f 62px,#d00e21 119px,#fa0204 172px,#ff0300 183px,#ff5d00 265px,#ff8500 317px,#ff9500 361px,#ff9600 372px)}
</style></head><body>
<div style="position:absolute;left:0;top:0;width:1150px;height:1px;background:#5c5c5c"></div>
<div style="position:absolute;left:310px;top:1px;width:840px;height:26px;background:#cde6f8"></div>
<div class="t" style="left:7px;top:5.5px;font-size:13.3px;font-weight:bold;transform:scaleX(1.168);transform-origin:0 0;color:#000;">Header table</div>
<div class="t" style="left:310.2px;top:5.5px;font-size:13.3px;font-weight:bold;transform:scaleX(1.17);transform-origin:0 0;color:#000;">Image point gather</div>
<svg style="position:absolute;left:0;top:0" width="310" height="28"><polyline points="247.8,9 247.8,21.6 236,21.6" fill="none" stroke="#333" stroke-width="1"/><rect x="234.5" y="6.8" width="11.8" height="13.4" fill="#f4f4f4" stroke="#333" stroke-width="1"/><rect x="236.3" y="9.3" width="1.6" height="1.6" fill="#333"/><rect x="239" y="9.3" width="5.6" height="1.6" fill="#333"/><rect x="236.3" y="12.6" width="1.6" height="1.6" fill="#333"/><rect x="239" y="12.6" width="5.6" height="1.6" fill="#333"/><rect x="236.3" y="15.9" width="1.6" height="1.6" fill="#333"/><rect x="239" y="15.9" width="5.6" height="1.6" fill="#333"/><path d="M260.8,8.2 L272,8.2 L273.2,9.4 L273.2,19.8 L260.8,19.8 Z" fill="#333"/><rect x="263" y="8.2" width="7.6" height="4.3" fill="#f0f0f0"/><rect x="268.2" y="9" width="1.5" height="2.6" fill="#333"/><circle cx="293.1" cy="13.85" r="4.5" fill="#0b4f9e"/><rect x="291.95" y="6.8" width="2.3" height="3.55" fill="#0b4f9e" transform="rotate(0 293.1 13.85)"/><rect x="291.95" y="6.8" width="2.3" height="3.55" fill="#0b4f9e" transform="rotate(45 293.1 13.85)"/><rect x="291.95" y="6.8" width="2.3" height="3.55" fill="#0b4f9e" transform="rotate(90 293.1 13.85)"/><rect x="291.95" y="6.8" width="2.3" height="3.55" fill="#0b4f9e" transform="rotate(135 293.1 13.85)"/><rect x="291.95" y="6.8" width="2.3" height="3.55" fill="#0b4f9e" transform="rotate(180 293.1 13.85)"/><rect x="291.95" y="6.8" width="2.3" height="3.55" fill="#0b4f9e" transform="rotate(225 293.1 13.85)"/><rect x="291.95" y="6.8" width="2.3" height="3.55" fill="#0b4f9e" transform="rotate(270 293.1 13.85)"/><rect x="291.95" y="6.8" width="2.3" height="3.55" fill="#0b4f9e" transform="rotate(315 293.1 13.85)"/><circle cx="293.1" cy="13.85" r="1.85" fill="#efefef"/></svg>
<svg style="position:absolute;left:0;top:0" width="1150" height="28"><rect x="743.5" y="3.5" width="21" height="21" rx="2.5" fill="#dcdcdc" stroke="#c2c2c2"/><path d="M751.5,20.8 L746.2,14.2 C745.6,13.4 746.6,12 747.8,12.6 L749.6,13.9 L748.4,9.2 C748.1,8 749.8,7.3 750.3,8.3 L751.8,11.6 L752.9,7 C753.2,5.9 754.9,6 755,7.2 L755.2,11.4 L756.3,7.6 C756.7,6.6 758.2,6.9 758.1,8 L757.6,12 L759.3,9.6 C759.9,8.8 761.4,9.3 761.2,10.3 L760.4,15.6 L758.8,20.8" fill="#fff" stroke="#000" stroke-width="0.95" stroke-linejoin="round"/><circle cx="779.9" cy="13.8" r="4.5" fill="#0b4f9e"/><rect x="778.75" y="6.75" width="2.3" height="3.55" fill="#0b4f9e" transform="rotate(0 779.9 13.8)"/><rect x="778.75" y="6.75" width="2.3" height="3.55" fill="#0b4f9e" transform="rotate(45 779.9 13.8)"/><rect x="778.75" y="6.75" width="2.3" height="3.55" fill="#0b4f9e" transform="rotate(90 779.9 13.8)"/><rect x="778.75" y="6.75" width="2.3" height="3.55" fill="#0b4f9e" transform="rotate(135 779.9 13.8)"/><rect x="778.75" y="6.75" width="2.3" height="3.55" fill="#0b4f9e" transform="rotate(180 779.9 13.8)"/><rect x="778.75" y="6.75" width="2.3" height="3.55" fill="#0b4f9e" transform="rotate(225 779.9 13.8)"/><rect x="778.75" y="6.75" width="2.3" height="3.55" fill="#0b4f9e" transform="rotate(270 779.9 13.8)"/><rect x="778.75" y="6.75" width="2.3" height="3.55" fill="#0b4f9e" transform="rotate(315 779.9 13.8)"/><circle cx="779.9" cy="13.8" r="1.85" fill="#cde6f8"/><rect x="795.5" y="3.5" width="21" height="21" rx="2.5" fill="#dcdcdc" stroke="#c2c2c2"/><rect x="798.6" y="6.6" width="15" height="14.8" fill="none" stroke="#111" stroke-width="1.25" stroke-dasharray="1.3 1.5"/><polygon points="800.9,9.2 807.6,9.2 800.9,15.7" fill="#333"/><line x1="802.8" y1="11.2" x2="808.2" y2="16.5" stroke="#333" stroke-width="1.9"/><rect x="807.2" y="15.4" width="6.2" height="6" fill="#dcdcdc" stroke="#222" stroke-width="1.2"/><rect x="817.5" y="3.5" width="10.5" height="21" rx="2.5" fill="#dcdcdc" stroke="#c2c2c2"/><polygon points="819.5,11.8 826,11.8 822.75,15.2" fill="#444"/><circle cx="841.5" cy="11.8" r="5.3" fill="none" stroke="#333" stroke-width="1.3"/><line x1="845.3" y1="15.6" x2="851.3" y2="21.3" stroke="#333" stroke-width="2"/><path d="M862.3,6 C864,6.3 864.2,8 865.5,9.5 C866.5,10.5 867.5,10.8 868,12" fill="none" stroke="#444" stroke-width="1"/><ellipse cx="872.5" cy="16.3" rx="4.3" ry="5.6" transform="rotate(-38 872.5 16.3)" fill="none" stroke="#444" stroke-width="1.1"/><line x1="867.8" y1="14.2" x2="871.5" y2="11.8" stroke="#444" stroke-width="1"/><line x1="870" y1="13" x2="871.8" y2="15.5" stroke="#444" stroke-width="1"/><polygon points="896.1,7.3 903.4,11.3 896.1,15.4 888.6,11.3" fill="none" stroke="#333" stroke-width="1.1"/><polygon points="888.3,16.6 891.5,14.6 896.1,17.2 900.7,14.6 903.8,16.6 896.1,20.8" fill="#0b4f9e"/><polygon points="900.7,18.4 904.9,18.4 902.8,21.2" fill="#555"/><polyline points="919.55,6.00 919.49,6.33 919.31,6.67 919.03,7.00 918.65,7.33 918.22,7.67 917.77,8.00 917.31,8.33 916.89,8.67 916.53,9.00 916.26,9.33 916.09,9.67 916.05,10.00 916.13,10.33 916.33,10.67 916.63,11.00 917.01,11.33 917.44,11.67 917.90,12.00 918.36,12.33 918.77,12.67 919.12,13.00 919.38,13.33 919.52,13.67 919.54,14.00 919.45,14.33 919.23,14.67 918.92,15.00 918.53,15.33 918.09,15.67 917.63,16.00 917.18,16.33 916.77,16.67 916.43,17.00 916.20,17.33 916.07,17.67 916.06,18.00 916.18,18.33 916.41,18.67 916.73,19.00 917.13,19.33 917.58,19.67 918.04,20.00 918.49,20.33 918.89,20.67 919.21,21.00 919.43,21.33 919.54,21.67 919.53,22.00" fill="none" stroke="#1f5fb0" stroke-width="1.25"/><polyline points="924.05,6.00 923.99,6.33 923.81,6.67 923.53,7.00 923.15,7.33 922.72,7.67 922.27,8.00 921.81,8.33 921.39,8.67 921.03,9.00 920.76,9.33 920.59,9.67 920.55,10.00 920.63,10.33 920.83,10.67 921.13,11.00 921.51,11.33 921.94,11.67 922.40,12.00 922.86,12.33 923.27,12.67 923.62,13.00 923.88,13.33 924.02,13.67 924.04,14.00 923.95,14.33 923.73,14.67 923.42,15.00 923.03,15.33 922.59,15.67 922.13,16.00 921.68,16.33 921.27,16.67 920.93,17.00 920.70,17.33 920.57,17.67 920.56,18.00 920.68,18.33 920.91,18.67 921.23,19.00 921.63,19.33 922.08,19.67 922.54,20.00 922.99,20.33 923.39,20.67 923.71,21.00 923.93,21.33 924.04,21.67 924.03,22.00" fill="none" stroke="#f07020" stroke-width="1.25"/><polyline points="928.45,6.00 928.39,6.33 928.21,6.67 927.93,7.00 927.55,7.33 927.12,7.67 926.67,8.00 926.21,8.33 925.79,8.67 925.43,9.00 925.16,9.33 924.99,9.67 924.95,10.00 925.03,10.33 925.23,10.67 925.53,11.00 925.91,11.33 926.34,11.67 926.80,12.00 927.26,12.33 927.67,12.67 928.02,13.00 928.28,13.33 928.42,13.67 928.44,14.00 928.35,14.33 928.13,14.67 927.82,15.00 927.43,15.33 926.99,15.67 926.53,16.00 926.08,16.33 925.67,16.67 925.33,17.00 925.10,17.33 924.97,17.67 924.96,18.00 925.08,18.33 925.31,18.67 925.63,19.00 926.03,19.33 926.48,19.67 926.94,20.00 927.39,20.33 927.79,20.67 928.11,21.00 928.33,21.33 928.44,21.67 928.43,22.00" fill="none" stroke="#1f5fb0" stroke-width="1.25"/><polygon points="935,12 943,12 939,15.7" fill="#3c3c3c"/><polyline points="956.00,6.00 955.94,6.33 955.76,6.67 955.47,7.00 955.10,7.33 954.67,7.67 954.20,8.00 953.73,8.33 953.30,8.67 952.93,9.00 952.64,9.33 952.46,9.67 952.40,10.00 952.46,10.33 952.64,10.67 952.93,11.00 953.30,11.33 953.73,11.67 954.20,12.00 954.67,12.33 955.10,12.67 955.47,13.00 955.76,13.33 955.94,13.67 956.00,14.00 955.94,14.33 955.76,14.67 955.47,15.00 955.10,15.33 954.67,15.67 954.20,16.00 953.73,16.33 953.30,16.67 952.93,17.00 952.64,17.33 952.46,17.67 952.40,18.00 952.46,18.33 952.64,18.67 952.93,19.00 953.30,19.33 953.73,19.67 954.20,20.00 954.67,20.33 955.10,20.67 955.47,21.00 955.76,21.33 955.94,21.67 956.00,22.00" fill="none" stroke="#f07020" stroke-width="1.25"/><rect x="956" y="10" width="12.3" height="8.2" fill="#333"/><rect x="956.8" y="11.2" width="3" height="1.5" fill="#f4f8fc"/><rect x="960.7" y="11.2" width="3" height="1.5" fill="#f4f8fc"/><rect x="964.6" y="11.2" width="3" height="1.5" fill="#f4f8fc"/><rect x="956.8" y="13.65" width="3" height="1.5" fill="#f4f8fc"/><rect x="960.7" y="13.65" width="3" height="1.5" fill="#f4f8fc"/><rect x="964.6" y="13.65" width="3" height="1.5" fill="#f4f8fc"/><rect x="956.8" y="16.1" width="3" height="1.5" fill="#f4f8fc"/><rect x="960.7" y="16.1" width="3" height="1.5" fill="#f4f8fc"/><rect x="964.6" y="16.1" width="3" height="1.5" fill="#f4f8fc"/><polyline points="979.6,7 979.6,20.4 993.3,20.4" fill="none" stroke="#333" stroke-width="1.2"/><path d="M981.6,19 L981.6,13.2 C981.6,10.8 982.8,9.9 984.3,9.7 C984.8,8.6 985.6,8.1 986.4,9 C986.9,9.7 987.3,10.3 988.3,10.9 C990.2,12.2 991.3,13.8 991.3,16 L991.3,19" fill="none" stroke="#f07020" stroke-width="1.1"/><polygon points="999.4,12 1006.7,12 1003.05,15.5" fill="#3c3c3c"/><line x1="1023.8" y1="9" x2="1023.8" y2="18.5" stroke="#333" stroke-width="2"/><line x1="1019" y1="13.9" x2="1028.5" y2="13.9" stroke="#333" stroke-width="2"/><line x1="1023.8" y1="5.8" x2="1023.8" y2="9" stroke="#1f5fb0" stroke-width="1.3" stroke-dasharray="1.2 1"/><line x1="1023.8" y1="18.5" x2="1023.8" y2="22" stroke="#1f5fb0" stroke-width="1.3" stroke-dasharray="1.2 1"/><line x1="1015.5" y1="13.9" x2="1019" y2="13.9" stroke="#1f5fb0" stroke-width="1.3" stroke-dasharray="1.2 1"/><line x1="1028.5" y1="13.9" x2="1032.3" y2="13.9" stroke="#1f5fb0" stroke-width="1.3" stroke-dasharray="1.2 1"/><polygon points="1025.5,16 1029.3,16.6 1026.1,19.8" fill="#f07020"/><line x1="1027" y1="17.5" x2="1031" y2="21" stroke="#f07020" stroke-width="1.4"/><path d="M1043.5,8.3 L1057.2,8.3 L1057.2,18 L1047.5,18 L1045,21.3 L1045,18 L1043.5,18 Z" fill="none" stroke="#333" stroke-width="1.1"/><rect x="1046.4" y="12.4" width="1.9" height="1.9" fill="#333"/><rect x="1049.3" y="12.4" width="1.9" height="1.9" fill="#333"/><rect x="1052.2" y="12.4" width="1.9" height="1.9" fill="#333"/><polyline points="1069.6,10 1069.6,20.4 1083,20.4 1083,10" fill="none" stroke="#333" stroke-width="1.1"/><path d="M1069.6,13.5 C1072,11.5 1074,15 1076.5,13.5 C1079,12 1081,14.5 1083,12.8 M1069.6,17.2 C1072,15.2 1074,18.5 1076.5,17 C1079,15.5 1081,18 1083,16.3" fill="none" stroke="#333" stroke-width="0.9"/><polygon points="1073.2,9.5 1076.3,6 1079.4,9.5" fill="#0b4f9e"/><rect x="1075.5" y="9" width="1.7" height="4" fill="#0b4f9e"/><circle cx="1100" cy="13.9" r="5.5" fill="none" stroke="#333" stroke-width="1.1"/><circle cx="1100" cy="13.9" r="2.5" fill="none" stroke="#333" stroke-width="1"/><polyline points="1100,19.4 1109.8,19.4 1109.8,18" fill="none" stroke="#333" stroke-width="1.1"/><circle cx="1128" cy="13.9" r="7.3" fill="none" stroke="#333" stroke-width="1.2"/><polygon points="1131.7,10.1 1129.6,14.5 1127.4,12.4" fill="#f07020"/><polygon points="1125,17.2 1129.6,14.5 1127.4,12.4" fill="#1f5fb0"/><path d="M1128,6.6 L1128,8.3 M1128,19.5 L1128,21.2 M1120.7,13.9 L1122.4,13.9 M1133.6,13.9 L1135.3,13.9" stroke="#333" stroke-width="1.3"/><polygon points="1141.4,11.7 1148.8,11.7 1145.1,15.6" fill="#3c3c3c"/></svg>
<div style="position:absolute;left:8px;top:30px;width:293px;height:835px;border:1px solid #a9a9a9;background:#fff"></div>
<div style="position:absolute;left:9px;top:31px;width:293px;height:20px;background:#ececec"></div>
<div style="position:absolute;left:9px;top:31px;width:168px;height:20px;background:linear-gradient(#f9f9f9,#e6e6e6)"></div>
<div style="position:absolute;left:9px;top:51px;width:168px;height:1px;background:#a9a9a9"></div>
<div style="position:absolute;left:116px;top:31px;width:1px;height:20px;background:#c4c4c4"></div>
<div class="t" style="left:41.2px;top:33.5px;font-size:13.6px;font-weight:normal;transform:scaleX(1.045);transform-origin:0 0;color:#000;">Header</div>
<div class="t" style="left:129px;top:33.5px;font-size:13.6px;font-weight:normal;transform:scaleX(1.03);transform-origin:0 0;color:#000;">Value</div>
<div style="position:absolute;left:9px;top:52px;width:3px;height:813px;background:#ececec;border-right:1px solid #bdbdbd"></div>
<div class="t" style="left:16px;top:58.5px;font-size:13.6px;font-weight:normal;transform:scaleX(1.06);transform-origin:0 0;color:#000;">Sample ratio</div>
<div class="t" style="left:120.5px;top:58.5px;font-size:13.6px;font-weight:normal;transform:scaleX(1.06);transform-origin:0 0;color:#000;">1</div>
<div class="t" style="left:16px;top:88.5px;font-size:13.6px;font-weight:normal;transform:scaleX(1.06);transform-origin:0 0;color:#000;">Samples count</div>
<div class="t" style="left:120.5px;top:88.5px;font-size:13.6px;font-weight:normal;transform:scaleX(1.06);transform-origin:0 0;color:#000;">70</div>
<div class="t" style="left:16px;top:118.5px;font-size:13.6px;font-weight:normal;transform:scaleX(1.06);transform-origin:0 0;color:#000;">Type</div>
<div class="t" style="left:120.5px;top:118.5px;font-size:13.6px;font-weight:normal;transform:scaleX(1.06);transform-origin:0 0;color:#000;">Scheme</div>
<div class="t" style="left:16px;top:148.5px;font-size:13.6px;font-weight:normal;transform:scaleX(1.06);transform-origin:0 0;color:#000;">Datum</div>
<div class="t" style="left:120.5px;top:148.5px;font-size:13.6px;font-weight:normal;transform:scaleX(1.06);transform-origin:0 0;color:#000;">100</div>
<div class="t" style="left:16px;top:178.5px;font-size:13.6px;font-weight:normal;transform:scaleX(1.06);transform-origin:0 0;color:#000;">Inlines count</div>
<div class="t" style="left:120.5px;top:178.5px;font-size:13.6px;font-weight:normal;transform:scaleX(1.06);transform-origin:0 0;color:#000;">1</div>
<div class="t" style="left:16px;top:208.5px;font-size:13.6px;font-weight:normal;transform:scaleX(1.06);transform-origin:0 0;color:#000;">Xlines count</div>
<div class="t" style="left:120.5px;top:208.5px;font-size:13.6px;font-weight:normal;transform:scaleX(1.06);transform-origin:0 0;color:#000;">2779</div>
<div class="t" style="left:16px;top:238.5px;font-size:13.6px;font-weight:normal;transform:scaleX(1.06);transform-origin:0 0;color:#000;">DX</div>
<div class="t" style="left:120.5px;top:238.5px;font-size:13.6px;font-weight:normal;transform:scaleX(1.06);transform-origin:0 0;color:#000;">8</div>
<div class="t" style="left:16px;top:268.5px;font-size:13.6px;font-weight:normal;transform:scaleX(1.06);transform-origin:0 0;color:#000;">DY</div>
<div class="t" style="left:120.5px;top:268.5px;font-size:13.6px;font-weight:normal;transform:scaleX(1.06);transform-origin:0 0;color:#000;">1</div>
<div class="t" style="left:16px;top:298.5px;font-size:13.6px;font-weight:normal;transform:scaleX(1.06);transform-origin:0 0;color:#000;">Calc points</div>
<div class="t" style="left:120.5px;top:298.5px;font-size:13.6px;font-weight:normal;transform:scaleX(1.06);transform-origin:0 0;color:#000;">695</div>
<svg style="position:absolute;left:0;top:0" width="310" height="340"><line x1="12" y1="81.5" x2="177" y2="81.5" stroke="#b8b8b8" stroke-width="1" stroke-dasharray="4 2 1 2"/><line x1="9" y1="81.5" x2="12" y2="81.5" stroke="#a0a0a0" stroke-width="1"/><line x1="12" y1="111.5" x2="177" y2="111.5" stroke="#b8b8b8" stroke-width="1" stroke-dasharray="4 2 1 2"/><line x1="9" y1="111.5" x2="12" y2="111.5" stroke="#a0a0a0" stroke-width="1"/><line x1="12" y1="141.5" x2="177" y2="141.5" stroke="#b8b8b8" stroke-width="1" stroke-dasharray="4 2 1 2"/><line x1="9" y1="141.5" x2="12" y2="141.5" stroke="#a0a0a0" stroke-width="1"/><line x1="12" y1="171.5" x2="177" y2="171.5" stroke="#b8b8b8" stroke-width="1" stroke-dasharray="4 2 1 2"/><line x1="9" y1="171.5" x2="12" y2="171.5" stroke="#a0a0a0" stroke-width="1"/><line x1="12" y1="201.5" x2="177" y2="201.5" stroke="#b8b8b8" stroke-width="1" stroke-dasharray="4 2 1 2"/><line x1="9" y1="201.5" x2="12" y2="201.5" stroke="#a0a0a0" stroke-width="1"/><line x1="12" y1="231.5" x2="177" y2="231.5" stroke="#b8b8b8" stroke-width="1" stroke-dasharray="4 2 1 2"/><line x1="9" y1="231.5" x2="12" y2="231.5" stroke="#a0a0a0" stroke-width="1"/><line x1="12" y1="261.5" x2="177" y2="261.5" stroke="#b8b8b8" stroke-width="1" stroke-dasharray="4 2 1 2"/><line x1="9" y1="261.5" x2="12" y2="261.5" stroke="#a0a0a0" stroke-width="1"/><line x1="12" y1="291.5" x2="177" y2="291.5" stroke="#b8b8b8" stroke-width="1" stroke-dasharray="4 2 1 2"/><line x1="9" y1="291.5" x2="12" y2="291.5" stroke="#a0a0a0" stroke-width="1"/><line x1="12" y1="321.5" x2="177" y2="321.5" stroke="#b8b8b8" stroke-width="1" stroke-dasharray="4 2 1 2"/><line x1="9" y1="321.5" x2="12" y2="321.5" stroke="#a0a0a0" stroke-width="1"/><line x1="116.5" y1="52" x2="116.5" y2="322" stroke="#b8b8b8" stroke-width="1" stroke-dasharray="4 2 1 2"/><line x1="176.5" y1="52" x2="176.5" y2="322" stroke="#b8b8b8" stroke-width="1" stroke-dasharray="4 2 1 2"/></svg>
<div style="position:absolute;left:307px;top:444px;width:1px;height:16px;background:repeating-linear-gradient(#b0b0b0 0 1px,transparent 1px 3px)"></div>
<div style="position:absolute;left:4px;top:444px;width:1px;height:16px;background:repeating-linear-gradient(#b0b0b0 0 1px,transparent 1px 3px)"></div>
<div style="position:absolute;left:377px;top:84px;width:746px;height:753px;background:#a4a4a4"></div>
<div id="hm" style="position:absolute;left:379px;top:86px;width:744px;height:750px;background:#191970;overflow:hidden"><div class="half" style="left:0"><div class="r0"></div><div class="r1"></div><div class="r2"></div><div class="r3"></div><div class="r4"></div><div class="r5"></div><div class="r6"></div><div class="r7"></div><div class="r8"></div><div class="r9"></div><div class="r10"></div><div class="r11"></div><div class="r12"></div><div class="r13"></div><div class="r14"></div><div class="r15"></div><div class="r16"></div><div class="r17"></div><div class="r18"></div><div class="r19"></div><div class="r20"></div><div class="r21"></div><div class="r22"></div><div class="r23"></div><div class="r24"></div><div class="r25"></div><div class="r26"></div><div class="r27"></div><div class="r28"></div><div class="r29"></div><div class="r30"></div><div class="r31"></div><div class="r32"></div><div class="r33"></div><div class="r34"></div><div class="r35"></div><div class="r36"></div><div class="r37"></div><div class="r38"></div><div class="r39"></div><div class="r40"></div><div class="r41"></div><div class="r42"></div><div class="r43"></div><div class="r44"></div><div class="r45"></div><div class="r46"></div><div class="r47"></div><div class="r48"></div><div class="r49"></div><div class="r50"></div><div class="r51"></div><div class="r52"></div><div class="r53"></div><div class="r54"></div><div class="r55"></div><div class="r56"></div><div class="r57"></div><div class="r58"></div><div class="r59"></div><div class="r60"></div><div class="r61"></div><div class="r62"></div><div class="r63"></div><div class="r64"></div><div class="r65"></div><div class="r66"></div><div class="r67"></div><div class="r68"></div><div class="r69"></div><div class="r70"></div><div class="r71"></div><div class="r72"></div><div class="r73"></div><div class="r74"></div><div class="r75"></div><div class="r76"></div><div class="r77"></div><div class="r78"></div><div class="r79"></div><div class="r80"></div><div class="r81"></div><div class="r82"></div><div class="r83"></div><div class="r84"></div><div class="r85"></div><div class="r86"></div><div class="r87"></div><div class="r88"></div><div class="r89"></div><div class="r90"></div><div class="r91"></div><div class="r92"></div><div class="r93"></div><div class="r94"></div><div class="r95"></div><div class="r96"></div><div class="r97"></div><div class="r98"></div><div class="r99"></div><div class="r100"></div><div class="r101"></div><div class="r102"></div><div class="r103"></div><div class="r104"></div><div class="r105"></div><div class="r106"></div><div class="r107"></div><div class="r108"></div><div class="r109"></div><div class="r110"></div><div class="r111"></div><div class="r112"></div><div class="r113"></div><div class="r114"></div><div class="r115"></div><div class="r116"></div><div class="r117"></div><div class="r118"></div><div class="r119"></div><div class="r120"></div><div class="r121"></div><div class="r122"></div><div class="r123"></div><div class="r124"></div><div class="r125"></div><div class="r126"></div><div class="r127"></div><div class="r128"></div><div class="r129"></div><div class="r130"></div><div class="r131"></div><div class="r132"></div><div class="r133"></div><div class="r134"></div><div class="r135"></div><div class="r136"></div><div class="r137"></div><div class="r138"></div><div class="r139"></div><div class="r140"></div><div class="r141"></div><div class="r142"></div><div class="r143"></div><div class="r144"></div><div class="r145"></div><div class="r146"></div><div class="r147"></div><div class="r148"></div><div class="r149"></div><div class="r150"></div><div class="r151"></div><div class="r152"></div><div class="r153"></div><div class="r154"></div><div class="r155"></div><div class="r156"></div><div class="r157"></div><div class="r158"></div><div class="r159"></div><div class="r160"></div><div class="r161"></div><div class="r162"></div><div class="r163"></div><div class="r164"></div><div class="r165"></div><div class="r166"></div><div class="r167"></div><div class="r168"></div><div class="r169"></div><div class="r170"></div><div class="r171"></div><div class="r172"></div><div class="r173"></div><div class="r174"></div><div class="r175"></div><div class="r176"></div><div class="r177"></div><div class="r178"></div><div class="r179"></div><div class="r180"></div><div class="r181"></div><div class="r182"></div><div class="r183"></div><div class="r184"></div><div class="r185"></div><div class="r186"></div><div class="r187"></div><div class="r188"></div><div class="r189"></div><div class="r190"></div><div class="r191"></div><div class="r192"></div><div class="r193"></div><div class="r194"></div><div class="r195"></div><div class="r196"></div><div class="r197"></div><div class="r198"></div><div class="r199"></div><div class="r200"></div><div class="r201"></div><div class="r202"></div><div class="r203"></div><div class="r204"></div><div class="r205"></div><div class="r206"></div><div class="r207"></div><div class="r208"></div><div class="r209"></div><div class="r210"></div><div class="r211"></div><div class="r212"></div><div class="r213"></div><div class="r214"></div><div class="r215"></div><div class="r216"></div><div class="r217"></div><div class="r218"></div><div class="r219"></div><div class="r220"></div><div class="r221"></div><div class="r222"></div><div class="r223"></div><div class="r224"></div><div class="r225"></div><div class="r226"></div><div class="r227"></div><div class="r228"></div><div class="r229"></div><div class="r230"></div><div class="r231"></div><div class="r232"></div><div class="r233"></div><div class="r234"></div><div class="r235"></div><div class="r236"></div><div class="r237"></div><div class="r238"></div><div class="r239"></div><div class="r240"></div><div class="r241"></div><div class="r242"></div><div class="r243"></div><div class="r244"></div><div class="r245"></div><div class="r246"></div><div class="r247"></div><div class="r248"></div><div class="r249"></div><div class="r250"></div><div class="r251"></div><div class="r252"></div><div class="r253"></div><div class="r254"></div><div class="r255"></div><div class="r256"></div><div class="r257"></div><div class="r258"></div><div class="r259"></div><div class="r260"></div><div class="r261"></div><div class="r262"></div><div class="r263"></div><div class="r264"></div><div class="r265"></div><div class="r266"></div><div class="r267"></div><div class="r268"></div><div class="r269"></div><div class="r270"></div><div class="r271"></div><div class="r272"></div><div class="r273"></div><div class="r274"></div><div class="r275"></div><div class="r276"></div><div class="r277"></div><div class="r278"></div><div class="r279"></div><div class="r280"></div><div class="r281"></div><div class="r282"></div><div class="r283"></div><div class="r284"></div><div class="r285"></div><div class="r286"></div><div class="r287"></div><div class="r288"></div><div class="r289"></div><div class="r290"></div><div class="r291"></div><div class="r292"></div><div class="r293"></div><div class="r294"></div><div class="r295"></div><div class="r296"></div><div class="r297"></div><div class="r298"></div><div class="r299"></div><div class="r300"></div><div class="r301"></div><div class="r302"></div><div class="r303"></div><div class="r304"></div><div class="r305"></div><div class="r306"></div><div class="r307"></div><div class="r308"></div><div class="r309"></div><div class="r310"></div><div class="r311"></div><div class="r312"></div><div class="r313"></div><div class="r314"></div><div class="r315"></div><div class="r316"></div><div class="r317"></div><div class="r318"></div><div class="r319"></div><div class="r320"></div><div class="r321"></div><div class="r322"></div><div class="r323"></div><div class="r324"></div><div class="r325"></div><div class="r326"></div><div class="r327"></div><div class="r328"></div><div class="r329"></div><div class="r330"></div><div class="r331"></div><div class="r332"></div><div class="r333"></div><div class="r334"></div><div class="r335"></div><div class="r336"></div><div class="r337"></div><div class="r338"></div><div class="r339"></div><div class="r340"></div><div class="r341"></div><div class="r342"></div><div class="r343"></div><div class="r344"></div><div class="r345"></div><div class="r346"></div><div class="r347"></div><div class="r348"></div><div class="r349"></div><div class="r350"></div><div class="r351"></div><div class="r352"></div><div class="r353"></div><div class="r354"></div><div class="r355"></div><div class="r356"></div><div class="r357"></div><div class="r358"></div><div class="r359"></div><div class="r360"></div><div class="r361"></div><div class="r362"></div><div class="r363"></div><div class="r364"></div><div class="r365"></div><div class="r366"></div><div class="r367"></div><div class="r368"></div><div class="r369"></div></div><div class="half" style="left:372px;transform:scaleX(-1);transform-origin:50% 0"><div class="r0"></div><div class="r1"></div><div class="r2"></div><div class="r3"></div><div class="r4"></div><div class="r5"></div><div class="r6"></div><div class="r7"></div><div class="r8"></div><div class="r9"></div><div class="r10"></div><div class="r11"></div><div class="r12"></div><div class="r13"></div><div class="r14"></div><div class="r15"></div><div class="r16"></div><div class="r17"></div><div class="r18"></div><div class="r19"></div><div class="r20"></div><div class="r21"></div><div class="r22"></div><div class="r23"></div><div class="r24"></div><div class="r25"></div><div class="r26"></div><div class="r27"></div><div class="r28"></div><div class="r29"></div><div class="r30"></div><div class="r31"></div><div class="r32"></div><div class="r33"></div><div class="r34"></div><div class="r35"></div><div class="r36"></div><div class="r37"></div><div class="r38"></div><div class="r39"></div><div class="r40"></div><div class="r41"></div><div class="r42"></div><div class="r43"></div><div class="r44"></div><div class="r45"></div><div class="r46"></div><div class="r47"></div><div class="r48"></div><div class="r49"></div><div class="r50"></div><div class="r51"></div><div class="r52"></div><div class="r53"></div><div class="r54"></div><div class="r55"></div><div class="r56"></div><div class="r57"></div><div class="r58"></div><div class="r59"></div><div class="r60"></div><div class="r61"></div><div class="r62"></div><div class="r63"></div><div class="r64"></div><div class="r65"></div><div class="r66"></div><div class="r67"></div><div class="r68"></div><div class="r69"></div><div class="r70"></div><div class="r71"></div><div class="r72"></div><div class="r73"></div><div class="r74"></div><div class="r75"></div><div class="r76"></div><div class="r77"></div><div class="r78"></div><div class="r79"></div><div class="r80"></div><div class="r81"></div><div class="r82"></div><div class="r83"></div><div class="r84"></div><div class="r85"></div><div class="r86"></div><div class="r87"></div><div class="r88"></div><div class="r89"></div><div class="r90"></div><div class="r91"></div><div class="r92"></div><div class="r93"></div><div class="r94"></div><div class="r95"></div><div class="r96"></div><div class="r97"></div><div class="r98"></div><div class="r99"></div><div class="r100"></div><div class="r101"></div><div class="r102"></div><div class="r103"></div><div class="r104"></div><div class="r105"></div><div class="r106"></div><div class="r107"></div><div class="r108"></div><div class="r109"></div><div class="r110"></div><div class="r111"></div><div class="r112"></div><div class="r113"></div><div class="r114"></div><div class="r115"></div><div class="r116"></div><div class="r117"></div><div class="r118"></div><div class="r119"></div><div class="r120"></div><div class="r121"></div><div class="r122"></div><div class="r123"></div><div class="r124"></div><div class="r125"></div><div class="r126"></div><div class="r127"></div><div class="r128"></div><div class="r129"></div><div class="r130"></div><div class="r131"></div><div class="r132"></div><div class="r133"></div><div class="r134"></div><div class="r135"></div><div class="r136"></div><div class="r137"></div><div class="r138"></div><div class="r139"></div><div class="r140"></div><div class="r141"></div><div class="r142"></div><div class="r143"></div><div class="r144"></div><div class="r145"></div><div class="r146"></div><div class="r147"></div><div class="r148"></div><div class="r149"></div><div class="r150"></div><div class="r151"></div><div class="r152"></div><div class="r153"></div><div class="r154"></div><div class="r155"></div><div class="r156"></div><div class="r157"></div><div class="r158"></div><div class="r159"></div><div class="r160"></div><div class="r161"></div><div class="r162"></div><div class="r163"></div><div class="r164"></div><div class="r165"></div><div class="r166"></div><div class="r167"></div><div class="r168"></div><div class="r169"></div><div class="r170"></div><div class="r171"></div><div class="r172"></div><div class="r173"></div><div class="r174"></div><div class="r175"></div><div class="r176"></div><div class="r177"></div><div class="r178"></div><div class="r179"></div><div class="r180"></div><div class="r181"></div><div class="r182"></div><div class="r183"></div><div class="r184"></div><div class="r185"></div><div class="r186"></div><div class="r187"></div><div class="r188"></div><div class="r189"></div><div class="r190"></div><div class="r191"></div><div class="r192"></div><div class="r193"></div><div class="r194"></div><div class="r195"></div><div class="r196"></div><div class="r197"></div><div class="r198"></div><div class="r199"></div><div class="r200"></div><div class="r201"></div><div class="r202"></div><div class="r203"></div><div class="r204"></div><div class="r205"></div><div class="r206"></div><div class="r207"></div><div class="r208"></div><div class="r209"></div><div class="r210"></div><div class="r211"></div><div class="r212"></div><div class="r213"></div><div class="r214"></div><div class="r215"></div><div class="r216"></div><div class="r217"></div><div class="r218"></div><div class="r219"></div><div class="r220"></div><div class="r221"></div><div class="r222"></div><div class="r223"></div><div class="r224"></div><div class="r225"></div><div class="r226"></div><div class="r227"></div><div class="r228"></div><div class="r229"></div><div class="r230"></div><div class="r231"></div><div class="r232"></div><div class="r233"></div><div class="r234"></div><div class="r235"></div><div class="r236"></div><div class="r237"></div><div class="r238"></div><div class="r239"></div><div class="r240"></div><div class="r241"></div><div class="r242"></div><div class="r243"></div><div class="r244"></div><div class="r245"></div><div class="r246"></div><div class="r247"></div><div class="r248"></div><div class="r249"></div><div class="r250"></div><div class="r251"></div><div class="r252"></div><div class="r253"></div><div class="r254"></div><div class="r255"></div><div class="r256"></div><div class="r257"></div><div class="r258"></div><div class="r259"></div><div class="r260"></div><div class="r261"></div><div class="r262"></div><div class="r263"></div><div class="r264"></div><div class="r265"></div><div class="r266"></div><div class="r267"></div><div class="r268"></div><div class="r269"></div><div class="r270"></div><div class="r271"></div><div class="r272"></div><div class="r273"></div><div class="r274"></div><div class="r275"></div><div class="r276"></div><div class="r277"></div><div class="r278"></div><div class="r279"></div><div class="r280"></div><div class="r281"></div><div class="r282"></div><div class="r283"></div><div class="r284"></div><div class="r285"></div><div class="r286"></div><div class="r287"></div><div class="r288"></div><div class="r289"></div><div class="r290"></div><div class="r291"></div><div class="r292"></div><div class="r293"></div><div class="r294"></div><div class="r295"></div><div class="r296"></div><div class="r297"></div><div class="r298"></div><div class="r299"></div><div class="r300"></div><div class="r301"></div><div class="r302"></div><div class="r303"></div><div class="r304"></div><div class="r305"></div><div class="r306"></div><div class="r307"></div><div class="r308"></div><div class="r309"></div><div class="r310"></div><div class="r311"></div><div class="r312"></div><div class="r313"></div><div class="r314"></div><div class="r315"></div><div class="r316"></div><div class="r317"></div><div class="r318"></div><div class="r319"></div><div class="r320"></div><div class="r321"></div><div class="r322"></div><div class="r323"></div><div class="r324"></div><div class="r325"></div><div class="r326"></div><div class="r327"></div><div class="r328"></div><div class="r329"></div><div class="r330"></div><div class="r331"></div><div class="r332"></div><div class="r333"></div><div class="r334"></div><div class="r335"></div><div class="r336"></div><div class="r337"></div><div class="r338"></div><div class="r339"></div><div class="r340"></div><div class="r341"></div><div class="r342"></div><div class="r343"></div><div class="r344"></div><div class="r345"></div><div class="r346"></div><div class="r347"></div><div class="r348"></div><div class="r349"></div><div class="r350"></div><div class="r351"></div><div class="r352"></div><div class="r353"></div><div class="r354"></div><div class="r355"></div><div class="r356"></div><div class="r357"></div><div class="r358"></div><div class="r359"></div><div class="r360"></div><div class="r361"></div><div class="r362"></div><div class="r363"></div><div class="r364"></div><div class="r365"></div><div class="r366"></div><div class="r367"></div><div class="r368"></div><div class="r369"></div></div></div>
<div style="position:absolute;left:379px;top:81px;width:743px;height:1px;background:#000"></div>
<div style="position:absolute;left:374px;top:86px;width:1px;height:750px;background:#000"></div>
<div style="position:absolute;left:379px;top:75px;width:1px;height:6px;background:#000"></div>
<div class="t" style="left:379.5px;top:58.5px;font-size:16px">1</div>
<div style="position:absolute;left:400px;top:79px;width:1px;height:2px;background:#000"></div>
<div style="position:absolute;left:420px;top:79px;width:1px;height:2px;background:#000"></div>
<div style="position:absolute;left:441px;top:79px;width:1px;height:2px;background:#000"></div>
<div style="position:absolute;left:461px;top:75px;width:1px;height:6px;background:#000"></div>
<div class="t c" style="left:460.9px;top:58.5px;font-size:16px;width:60px;margin-left:-30px">201</div>
<div style="position:absolute;left:482px;top:79px;width:1px;height:2px;background:#000"></div>
<div style="position:absolute;left:502px;top:79px;width:1px;height:2px;background:#000"></div>
<div style="position:absolute;left:523px;top:79px;width:1px;height:2px;background:#000"></div>
<div style="position:absolute;left:543px;top:75px;width:1px;height:6px;background:#000"></div>
<div class="t c" style="left:542.9px;top:58.5px;font-size:16px;width:60px;margin-left:-30px">401</div>
<div style="position:absolute;left:564px;top:79px;width:1px;height:2px;background:#000"></div>
<div style="position:absolute;left:584px;top:79px;width:1px;height:2px;background:#000"></div>
<div style="position:absolute;left:605px;top:79px;width:1px;height:2px;background:#000"></div>
<div style="position:absolute;left:625px;top:75px;width:1px;height:6px;background:#000"></div>
<div class="t c" style="left:624.9px;top:58.5px;font-size:16px;width:60px;margin-left:-30px">601</div>
<div style="position:absolute;left:646px;top:79px;width:1px;height:2px;background:#000"></div>
<div style="position:absolute;left:666px;top:79px;width:1px;height:2px;background:#000"></div>
<div style="position:absolute;left:687px;top:79px;width:1px;height:2px;background:#000"></div>
<div style="position:absolute;left:707px;top:75px;width:1px;height:6px;background:#000"></div>
<div class="t c" style="left:706.9px;top:58.5px;font-size:16px;width:60px;margin-left:-30px">801</div>
<div style="position:absolute;left:728px;top:79px;width:1px;height:2px;background:#000"></div>
<div style="position:absolute;left:748px;top:79px;width:1px;height:2px;background:#000"></div>
<div style="position:absolute;left:769px;top:79px;width:1px;height:2px;background:#000"></div>
<div style="position:absolute;left:789px;top:75px;width:1px;height:6px;background:#000"></div>
<div class="t c" style="left:788.9px;top:58.5px;font-size:16px;width:60px;margin-left:-30px">1001</div>
<div style="position:absolute;left:810px;top:79px;width:1px;height:2px;background:#000"></div>
<div style="position:absolute;left:830px;top:79px;width:1px;height:2px;background:#000"></div>
<div style="position:absolute;left:851px;top:79px;width:1px;height:2px;background:#000"></div>
<div style="position:absolute;left:871px;top:75px;width:1px;height:6px;background:#000"></div>
<div class="t c" style="left:870.9px;top:58.5px;font-size:16px;width:60px;margin-left:-30px">1201</div>
<div style="position:absolute;left:892px;top:79px;width:1px;height:2px;background:#000"></div>
<div style="position:absolute;left:912px;top:79px;width:1px;height:2px;background:#000"></div>
<div style="position:absolute;left:933px;top:79px;width:1px;height:2px;background:#000"></div>
<div style="position:absolute;left:953px;top:75px;width:1px;height:6px;background:#000"></div>
<div class="t c" style="left:952.9px;top:58.5px;font-size:16px;width:60px;margin-left:-30px">1401</div>
<div style="position:absolute;left:974px;top:79px;width:1px;height:2px;background:#000"></div>
<div style="position:absolute;left:994px;top:79px;width:1px;height:2px;background:#000"></div>
<div style="position:absolute;left:1015px;top:79px;width:1px;height:2px;background:#000"></div>
<div style="position:absolute;left:1035px;top:75px;width:1px;height:6px;background:#000"></div>
<div class="t c" style="left:1034.9px;top:58.5px;font-size:16px;width:60px;margin-left:-30px">1601</div>
<div style="position:absolute;left:1056px;top:79px;width:1px;height:2px;background:#000"></div>
<div style="position:absolute;left:1076px;top:79px;width:1px;height:2px;background:#000"></div>
<div style="position:absolute;left:1097px;top:79px;width:1px;height:2px;background:#000"></div>
<div style="position:absolute;left:1117px;top:75px;width:1px;height:6px;background:#000"></div>
<div class="t" style="left:1084px;top:58.5px;font-size:16px">1801</div><div class="t" style="left:1092px;top:58.5px;font-size:16px;letter-spacing:-1.6px">1812</div>
<div style="position:absolute;left:366px;top:86px;width:8px;height:1px;background:#000"></div>
<div class="t r" style="left:300px;width:61px;top:79px;font-size:16px">0</div>
<div style="position:absolute;left:368px;top:134px;width:6px;height:1px;background:#000"></div>
<div style="position:absolute;left:366px;top:182px;width:8px;height:1px;background:#000"></div>
<div class="t r" style="left:300px;width:61px;top:175.3px;font-size:16px">9</div>
<div style="position:absolute;left:368px;top:230px;width:6px;height:1px;background:#000"></div>
<div style="position:absolute;left:366px;top:278px;width:8px;height:1px;background:#000"></div>
<div class="t r" style="left:300px;width:61px;top:271.6px;font-size:16px">18</div>
<div style="position:absolute;left:368px;top:326px;width:6px;height:1px;background:#000"></div>
<div style="position:absolute;left:366px;top:374px;width:8px;height:1px;background:#000"></div>
<div class="t r" style="left:300px;width:61px;top:367.9px;font-size:16px">27</div>
<div style="position:absolute;left:368px;top:423px;width:6px;height:1px;background:#000"></div>
<div style="position:absolute;left:366px;top:471px;width:8px;height:1px;background:#000"></div>
<div class="t r" style="left:300px;width:61px;top:464.2px;font-size:16px">36</div>
<div style="position:absolute;left:368px;top:519px;width:6px;height:1px;background:#000"></div>
<div style="position:absolute;left:366px;top:567px;width:8px;height:1px;background:#000"></div>
<div class="t r" style="left:300px;width:61px;top:560.5px;font-size:16px">45</div>
<div style="position:absolute;left:368px;top:615px;width:6px;height:1px;background:#000"></div>
<div style="position:absolute;left:366px;top:663px;width:8px;height:1px;background:#000"></div>
<div class="t r" style="left:300px;width:61px;top:656.8px;font-size:16px">54</div>
<div style="position:absolute;left:368px;top:711px;width:6px;height:1px;background:#000"></div>
<div style="position:absolute;left:366px;top:760px;width:8px;height:1px;background:#000"></div>
<div class="t r" style="left:300px;width:61px;top:753.1px;font-size:16px">63</div>
<div style="position:absolute;left:368px;top:808px;width:6px;height:1px;background:#000"></div>
<div style="position:absolute;left:366px;top:835px;width:8px;height:1px;background:#000"></div>
<div class="t r" style="left:300px;width:61px;top:827.5px;font-size:16px">70</div>
<div class="t" style="left:319.5px;top:55px;font-size:16.5px;letter-spacing:-1.1px">TRCIDX</div>
<div class="t" style="left:702px;top:38.5px;font-size:16.3px;letter-spacing:0.1px">Trace [Trace]</div>
<div class="t" style="left:320.5px;top:514px;font-size:17.3px;transform:rotate(-90deg);transform-origin:0 0">Depth [meter]</div>
<div style="position:absolute;left:1124px;top:86px;width:14px;height:750px;background:linear-gradient(90deg,#fbfbfb,#f0f0f0)"></div>
<div style="position:absolute;left:1124px;top:86px;width:1px;height:750px;background:#c8c8c8"></div>
<div style="position:absolute;left:1124px;top:98px;width:14px;height:1px;background:#cfcfcf"></div>
<div style="position:absolute;left:1124px;top:822px;width:14px;height:1px;background:#cfcfcf"></div>
<div style="position:absolute;left:379px;top:837px;width:744px;height:14px;background:linear-gradient(#fbfbfb,#f0f0f0)"></div>
<div style="position:absolute;left:392px;top:837px;width:1px;height:14px;background:#cfcfcf"></div>
<div style="position:absolute;left:1109px;top:837px;width:1px;height:14px;background:#cfcfcf"></div>
<svg style="position:absolute;left:0;top:0" width="1150" height="901"><polygon points="1127.3,94.3 1134.7,94.3 1131,90.3" fill="#555"/><polygon points="1127.3,827 1134.7,827 1131,831" fill="#555"/><polygon points="387,840.5 387,848 383,844.25" fill="#555"/><polygon points="1114,840.5 1114,848 1118,844.25" fill="#555"/></svg>
<div style="position:absolute;left:0;top:870px;width:7px;height:1px;background:#b4b4b4"></div>
<div style="position:absolute;left:140px;top:870px;width:165px;height:1px;background:#b4b4b4"></div>
<div style="position:absolute;left:484px;top:870px;width:666px;height:1px;background:#b4b4b4"></div>
<div style="position:absolute;left:6px;top:868px;width:133px;height:31px;border:1px solid #b4b4b4;border-top:none;border-radius:0 0 3px 3px;background:#fafafa"></div>
<div style="position:absolute;left:6px;top:868px;width:1px;height:2px;background:#efefef"></div><div style="position:absolute;left:140px;top:868px;width:1px;height:2px;background:#efefef"></div>
<div class="t" style="left:18.3px;top:877px;font-size:13.6px;font-weight:normal;transform:scaleX(1.063);transform-origin:0 0;color:#000;">Header table</div>
<div style="position:absolute;left:106px;top:875px;width:20px;height:19px;border:1px solid #bcbcbc;border-radius:3px;background:#efefef"></div>
<div style="position:absolute;left:309px;top:868px;width:174px;height:31px;border:1px solid #b4b4b4;border-top:none;border-radius:0 0 3px 3px;background:linear-gradient(#e2f0fb,#f0f8fe)"></div>
<div style="position:absolute;left:309px;top:868px;width:1px;height:2px;background:#efefef"></div><div style="position:absolute;left:484px;top:868px;width:1px;height:2px;background:#efefef"></div>
<div class="t" style="left:321.3px;top:877px;font-size:13.6px;font-weight:normal;transform:scaleX(1.093);transform-origin:0 0;color:#000;">Image point gather</div>
<div style="position:absolute;left:450px;top:875px;width:20px;height:19px;border:1px solid #bcbcbc;border-radius:3px;background:#efefef"></div>
<svg style="position:absolute;left:0;top:860px" width="500" height="41"><path d="M113.2,21.6 L120.8,29 M120.8,21.6 L113.2,29" stroke="#303030" stroke-width="1.35"/><path d="M457.2,21.6 L464.8,29 M464.8,21.6 L457.2,29" stroke="#303030" stroke-width="1.35"/></svg>
</body></html>
